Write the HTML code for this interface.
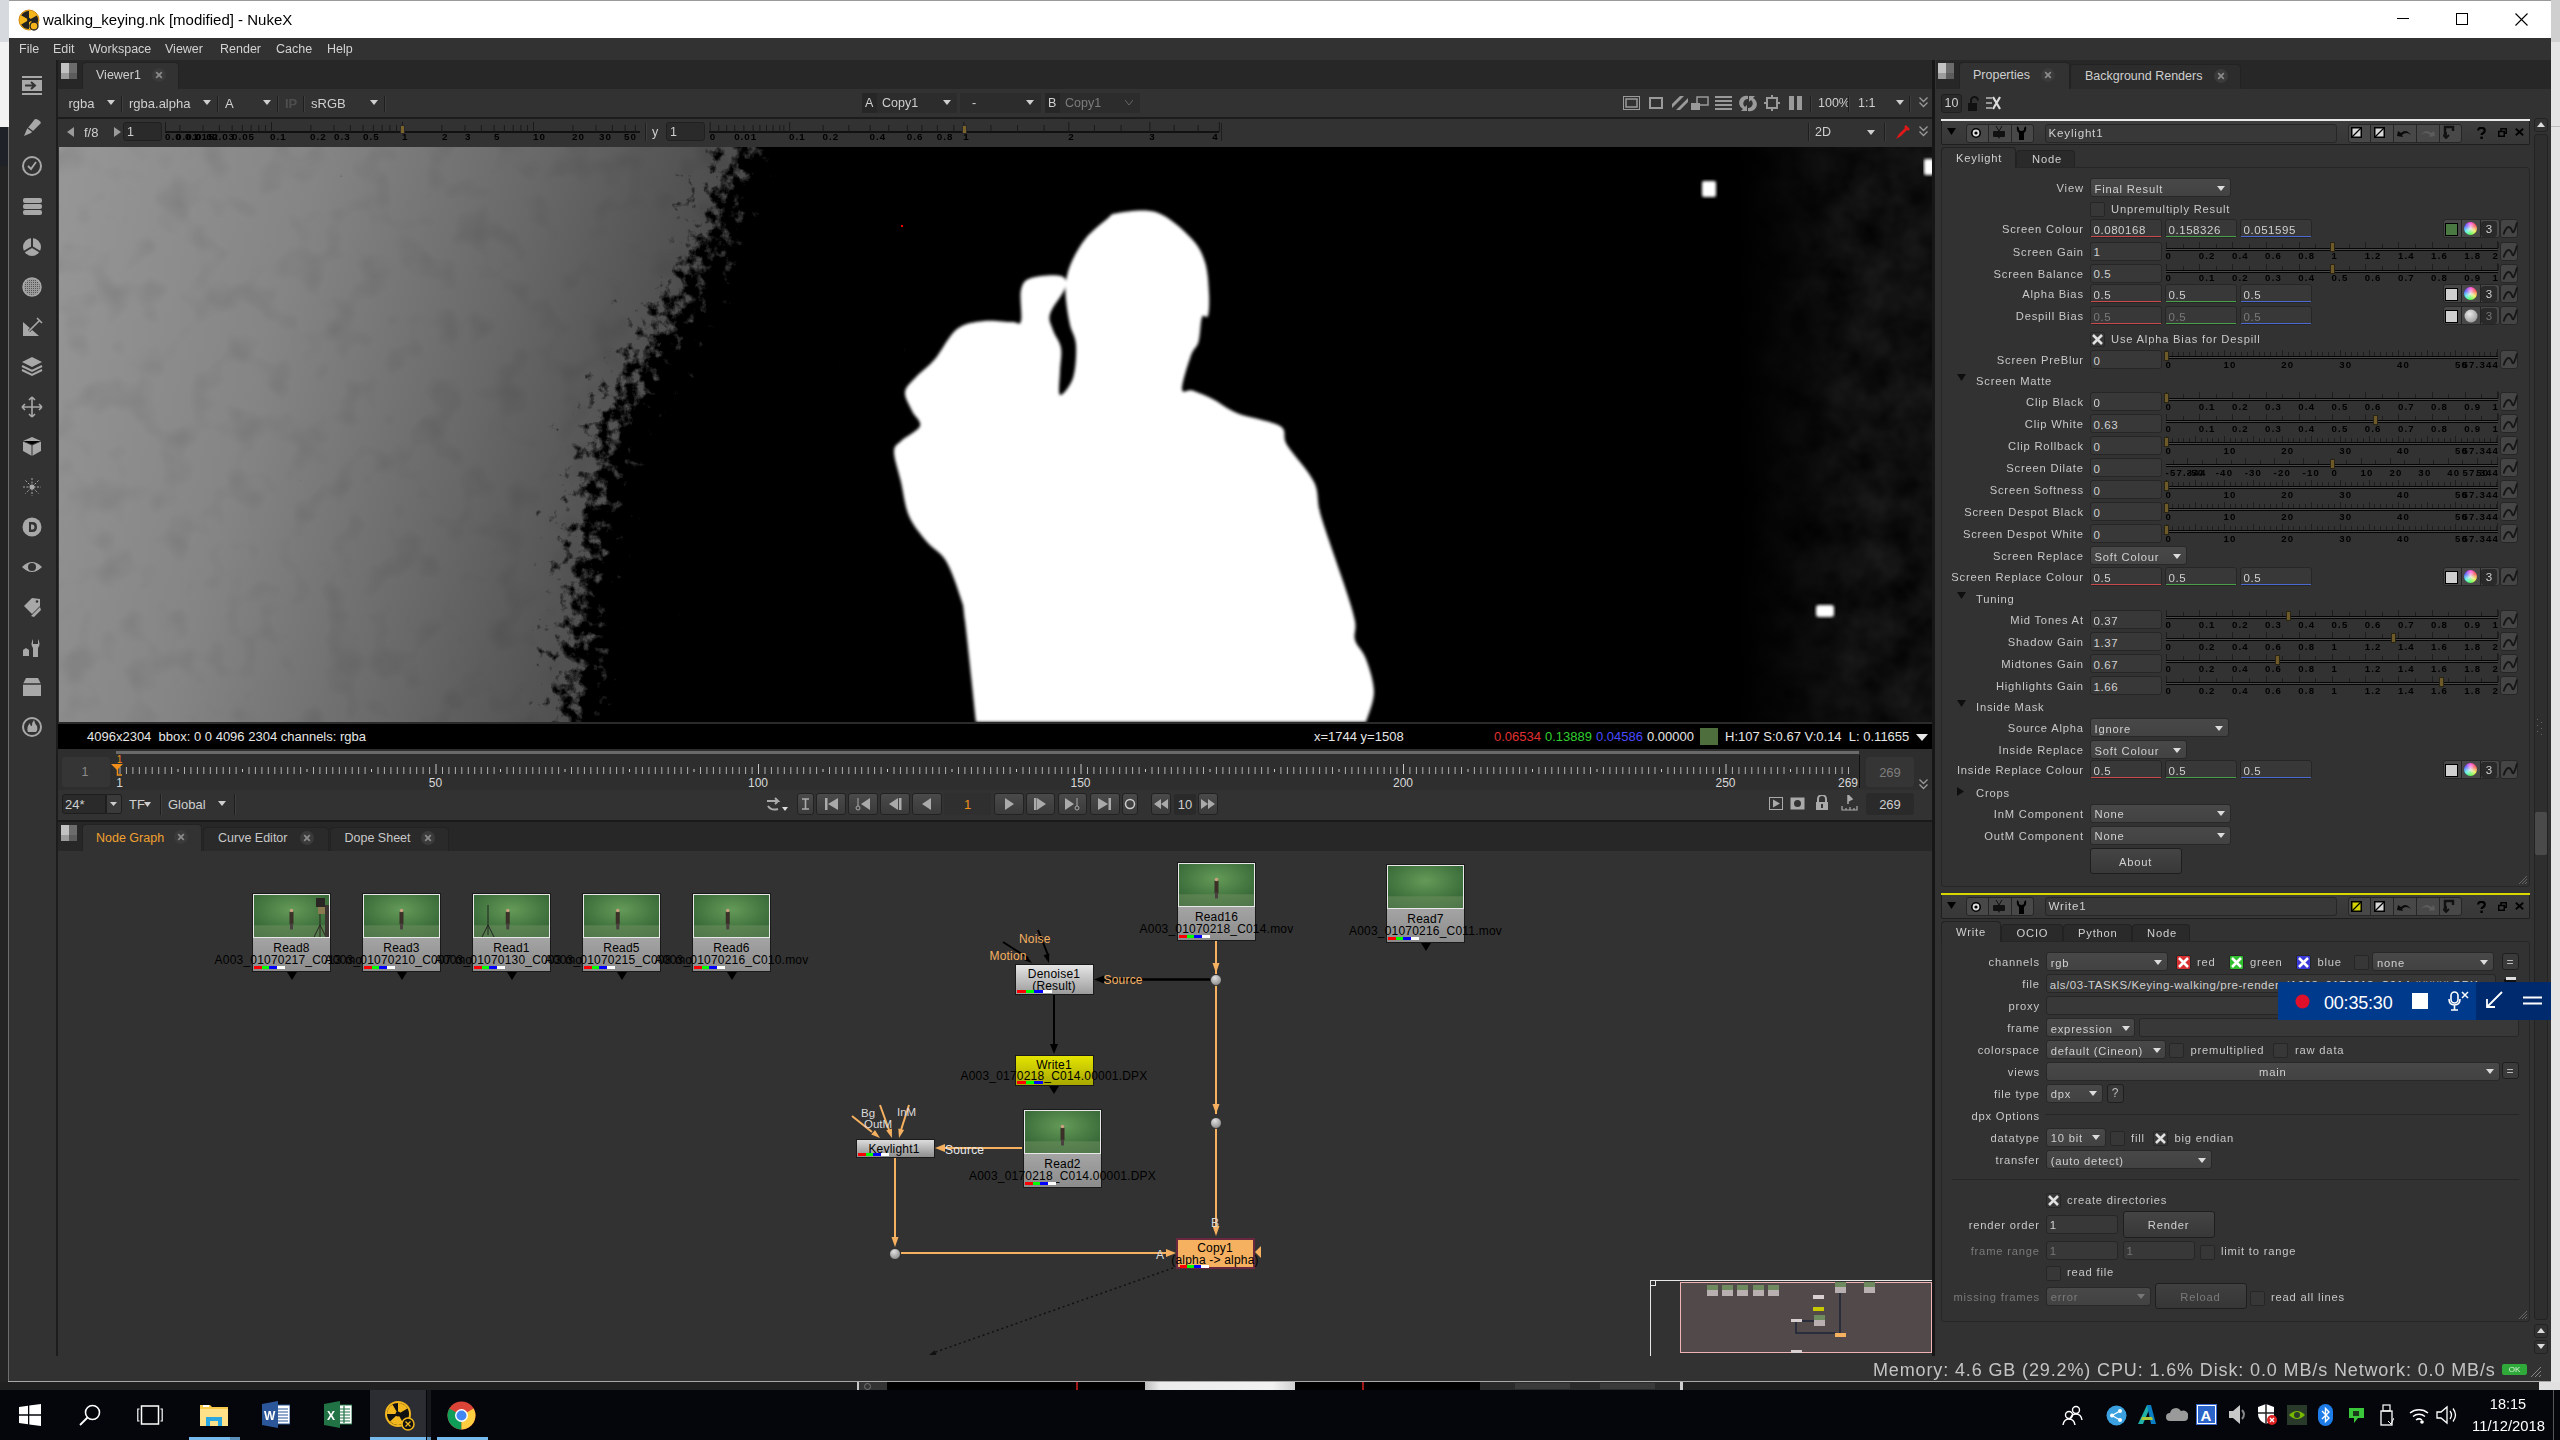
<!DOCTYPE html>
<html><head><meta charset="utf-8"><style>
html,body{margin:0;padding:0;}
body{width:2560px;height:1440px;overflow:hidden;position:relative;background:#2b2b2b;font-family:"Liberation Sans", sans-serif;}
body>div,body>svg{position:absolute;box-sizing:border-box;}
.t{white-space:pre;}
</style></head><body>
<div style="left:0px;top:0px;width:9px;height:42px;background:#d6d9de;"></div>
<div style="left:0px;top:42px;width:9px;height:85px;background:#f2f2f2;"></div>
<div style="left:0px;top:127px;width:9px;height:39px;background:#1e2228;"></div>
<div style="left:0px;top:166px;width:9px;height:1224px;background:#242424;"></div>
<div style="left:2551px;top:0px;width:9px;height:42px;background:#cfcfcf;"></div>
<div style="left:2551px;top:42px;width:9px;height:1348px;background:#e4e4e4;"></div>
<div style="left:2551px;top:126px;width:9px;height:1px;background:#bdbdbd;"></div>
<div style="left:9px;top:0px;width:2542px;height:38px;background:#ffffff;border-top:1px solid #9a9a9a;"></div>
<svg style="left:18px;top:9px;" width="22" height="22" viewBox="0 0 22 22"><circle cx="11" cy="11" r="10" fill="#f4b41a" stroke="#d08a10" stroke-width="1"/><path d="M11 11 L11 2 A9 9 0 0 0 3.2 6.5 Z" fill="#222"/><path d="M11 11 L18.8 6.5 A9 9 0 0 0 11 2 Z" fill="#f4b41a"/><path d="M11 11 L3.2 6.5 A9 9 0 0 0 3.2 15.5 Z" fill="#f4b41a"/><path d="M11 11 L3.2 15.5 A9 9 0 0 0 11 20 Z" fill="#222"/><path d="M11 11 L18.8 6.5 A9 9 0 0 1 18.8 15.5 Z" fill="#222"/><circle cx="11" cy="11" r="2" fill="#222"/><circle cx="16" cy="17" r="4" fill="#f4b41a" stroke="#222" stroke-width="1.3"/></svg>
<div class="t" style="top:12.3px;font-size:15px;line-height:15px;color:#000;left:43px;">walking_keying.nk [modified] - NukeX</div>
<div style="left:2397px;top:18px;width:12px;height:1px;background:#000;"></div>
<div style="left:2456px;top:13px;width:12px;height:12px;border:1px solid #000;"></div>
<svg style="left:2515px;top:13px;" width="13" height="13" viewBox="0 0 13 13"><path d="M0.5 0.5 L12.5 12.5 M12.5 0.5 L0.5 12.5" stroke="#000" stroke-width="1.1"/></svg>
<div style="left:9px;top:38px;width:2542px;height:22px;background:#323232;"></div>
<div class="t" style="top:43.4px;font-size:12.5px;line-height:12.5px;color:#d2d2d2;left:19px;">File</div>
<div class="t" style="top:43.4px;font-size:12.5px;line-height:12.5px;color:#d2d2d2;left:53px;">Edit</div>
<div class="t" style="top:43.4px;font-size:12.5px;line-height:12.5px;color:#d2d2d2;left:89px;">Workspace</div>
<div class="t" style="top:43.4px;font-size:12.5px;line-height:12.5px;color:#d2d2d2;left:165px;">Viewer</div>
<div class="t" style="top:43.4px;font-size:12.5px;line-height:12.5px;color:#d2d2d2;left:220px;">Render</div>
<div class="t" style="top:43.4px;font-size:12.5px;line-height:12.5px;color:#d2d2d2;left:276px;">Cache</div>
<div class="t" style="top:43.4px;font-size:12.5px;line-height:12.5px;color:#d2d2d2;left:327px;">Help</div>
<div style="left:9px;top:60px;width:2542px;height:1322px;background:#323232;"></div>
<div style="left:8px;top:127px;width:1px;height:1255px;background:#6e6e6e;"></div>
<div style="left:9px;top:60px;width:47px;height:1321px;background:#323232;"></div>
<div style="left:56px;top:60px;width:2px;height:1321px;background:#1c1c1c;"></div>
<svg style="left:21px;top:76px;" width="22" height="22" viewBox="0 0 22 22"><rect x="1" y="0" width="20" height="2" fill="#a8a8a8"/><rect x="1" y="4" width="20" height="11" fill="#a8a8a8"/><rect x="1" y="17" width="20" height="2" fill="#a8a8a8"/><path d="M4 9.5 H14 M10 6 L14 9.5 L10 13" stroke="#333" stroke-width="2" fill="none"/></svg>
<svg style="left:21px;top:116px;" width="22" height="22" viewBox="0 0 22 22"><path d="M3 20 L6 13 L14 3 Q18 3 20 7 L10 17 Z" fill="#a8a8a8"/><path d="M7 12 L15 18" stroke="#333" stroke-width="1.5"/></svg>
<svg style="left:21px;top:156px;" width="22" height="22" viewBox="0 0 22 22"><circle cx="11" cy="10" r="9" fill="none" stroke="#a8a8a8" stroke-width="2"/><path d="M7 10 L10 13 L15 6" stroke="#a8a8a8" stroke-width="1.8" fill="none"/></svg>
<svg style="left:21px;top:196px;" width="22" height="22" viewBox="0 0 22 22"><rect x="2" y="2" width="19" height="5" rx="2" fill="#a8a8a8"/><rect x="2" y="8" width="19" height="5" rx="2" fill="#a8a8a8"/><rect x="2" y="14" width="19" height="5" rx="2" fill="#a8a8a8"/></svg>
<svg style="left:21px;top:236px;" width="22" height="22" viewBox="0 0 22 22"><circle cx="11" cy="11" r="9" fill="#a8a8a8"/><path d="M11 11 V1 M11 11 L2.5 16 M11 11 L19.5 16" stroke="#333" stroke-width="2"/></svg>
<svg style="left:21px;top:276px;" width="22" height="22" viewBox="0 0 22 22"><defs><pattern id="dotp" width="2" height="2" patternUnits="userSpaceOnUse"><rect width="1" height="1" fill="#555"/></pattern></defs><circle cx="11" cy="11" r="9" fill="#9a9a9a" stroke="#a8a8a8" stroke-width="1.5"/><circle cx="11" cy="11" r="8" fill="url(#dotp)"/></svg>
<svg style="left:21px;top:316px;" width="22" height="22" viewBox="0 0 22 22"><path d="M2 6 V20 H18 Z" fill="#a8a8a8"/><path d="M8 15 L18 5" stroke="#333" stroke-width="3"/><path d="M8 15 L18 5 M16 2 L21 7" stroke="#a8a8a8" stroke-width="1.6"/></svg>
<svg style="left:21px;top:356px;" width="22" height="22" viewBox="0 0 22 22"><path d="M11 1 L21 6 L11 11 L1 6 Z" fill="#a8a8a8"/><path d="M1 10 L11 15 L21 10" stroke="#a8a8a8" stroke-width="2" fill="none"/><path d="M1 14 L11 19 L21 14" stroke="#a8a8a8" stroke-width="2" fill="none"/></svg>
<svg style="left:21px;top:396px;" width="22" height="22" viewBox="0 0 22 22"><path d="M11 1 V21 M1 11 H21 M11 1 L8 4 M11 1 L14 4 M11 21 L8 18 M11 21 L14 18 M1 11 L4 8 M1 11 L4 14 M21 11 L18 8 M21 11 L18 14" stroke="#a8a8a8" stroke-width="1.6" fill="none"/></svg>
<svg style="left:21px;top:436px;" width="22" height="22" viewBox="0 0 22 22"><path d="M11 1 L20 5 V15 L11 20 L2 15 V5 Z" fill="#a8a8a8"/><path d="M2 5 L11 9 L20 5 M11 9 V20" stroke="#333" stroke-width="1"/></svg>
<svg style="left:21px;top:476px;" width="22" height="22" viewBox="0 0 22 22"><circle cx="11" cy="11" r="2.5" fill="#a8a8a8"/><path d="M11 2 V20 M2 11 H20 M4.5 4.5 L17.5 17.5 M17.5 4.5 L4.5 17.5" stroke="#a8a8a8" stroke-width="1" stroke-dasharray="2 1.5"/></svg>
<svg style="left:21px;top:516px;" width="22" height="22" viewBox="0 0 22 22"><circle cx="11" cy="11" r="9.5" fill="#a8a8a8"/><path d="M8 6 H11.5 Q16 6 16 11 Q16 16 11.5 16 H8 Z" fill="#333"/><path d="M10 8.5 H11.5 Q13.5 8.5 13.5 11 Q13.5 13.5 11.5 13.5 H10 Z" fill="#a8a8a8"/></svg>
<svg style="left:21px;top:556px;" width="22" height="22" viewBox="0 0 22 22"><path d="M1 11 Q11 1 21 11 Q11 21 1 11 Z" fill="#a8a8a8"/><circle cx="11" cy="11" r="4" fill="#333"/></svg>
<svg style="left:21px;top:596px;" width="22" height="22" viewBox="0 0 22 22"><path d="M3 10 L11 2 L19 3 L19 10 L11 18 Z" fill="#a8a8a8"/><path d="M10 20 L19 11 L20 14 L13 21 Z" fill="#a8a8a8"/><circle cx="16" cy="5.5" r="1.3" fill="#333"/></svg>
<svg style="left:21px;top:636px;" width="22" height="22" viewBox="0 0 22 22"><path d="M2 20 V14 L5 12 L8 14 V20 Z M12 21 V12 Q9 8 12 3 V8 H17 V3 Q20 8 17 12 V21 Z" fill="#a8a8a8"/></svg>
<svg style="left:21px;top:676px;" width="22" height="22" viewBox="0 0 22 22"><path d="M2 8 L5 2 H17 L20 8 V20 H2 Z" fill="#a8a8a8"/><path d="M2 8 H20" stroke="#333" stroke-width="1.5"/></svg>
<svg style="left:21px;top:716px;" width="22" height="22" viewBox="0 0 22 22"><circle cx="11" cy="11" r="9" fill="none" stroke="#a8a8a8" stroke-width="2"/><path d="M7 16 Q5 11 9 7 Q9 10 11 10 Q11 6 13 4 Q14 8 16 10 Q17 14 15 16 Z" fill="#a8a8a8"/></svg>
<div style="left:1932px;top:60px;width:3px;height:1296px;background:#161616;"></div>
<div style="left:8px;top:1381px;width:2543px;height:1px;background:#8c8c8c;"></div>
<div style="left:0px;top:1382px;width:2551px;height:8px;background:#262626;"></div>
<div style="left:58px;top:60px;width:1874px;height:29px;background:#272727;"></div>
<div style="left:61px;top:63px;width:8px;height:10px;background:#c2c2c2;"></div>
<div style="left:69px;top:63px;width:8px;height:10px;background:#6c6c6c;"></div>
<div style="left:61px;top:73px;width:8px;height:6px;background:#9c9c9c;"></div>
<div style="left:69px;top:73px;width:8px;height:6px;background:#5c5c5c;"></div>
<div style="left:82px;top:62px;width:97px;height:27px;background:#323232;border:1px solid #222;border-bottom:none;border-radius:4px 4px 0 0;"></div>
<div class="t" style="top:69.4px;font-size:12.5px;line-height:12.5px;color:#cfcfcf;left:96px;">Viewer1</div>
<svg style="left:152px;top:68px;" width="14" height="14" viewBox="0 0 14 14"><circle cx="7" cy="7" r="7" fill="#3a3a3a"/><path d="M4.2 4.2 L9.8 9.8 M9.8 4.2 L4.2 9.8" stroke="#8a8a8a" stroke-width="1.8"/></svg>
<div style="left:58px;top:89px;width:1874px;height:28px;background:#323232;"></div>
<div style="left:58px;top:117px;width:1874px;height:2px;background:#1c1c1c;"></div>
<div class="t" style="top:96.5px;font-size:13px;line-height:13px;color:#cfcfcf;left:68.5px;">rgba</div>
<svg style="left:107px;top:100px;" width="8" height="5" viewBox="0 0 8 5"><path d="M0 0 H8 L4.0 5 Z" fill="#cfcfcf"/></svg>
<div style="left:121px;top:96px;width:1px;height:16px;background:#1e1e1e;"></div>
<div style="left:122px;top:96px;width:1px;height:16px;background:#3e3e3e;"></div>
<div class="t" style="top:96.5px;font-size:13px;line-height:13px;color:#cfcfcf;left:129px;">rgba.alpha</div>
<svg style="left:203px;top:100px;" width="8" height="5" viewBox="0 0 8 5"><path d="M0 0 H8 L4.0 5 Z" fill="#cfcfcf"/></svg>
<div style="left:217px;top:96px;width:1px;height:16px;background:#1e1e1e;"></div>
<div style="left:218px;top:96px;width:1px;height:16px;background:#3e3e3e;"></div>
<div class="t" style="top:96.5px;font-size:13px;line-height:13px;color:#cfcfcf;left:225px;">A</div>
<svg style="left:263px;top:100px;" width="8" height="5" viewBox="0 0 8 5"><path d="M0 0 H8 L4.0 5 Z" fill="#cfcfcf"/></svg>
<div style="left:277px;top:96px;width:1px;height:16px;background:#1e1e1e;"></div>
<div style="left:278px;top:96px;width:1px;height:16px;background:#3e3e3e;"></div>
<div class="t" style="top:96.5px;font-size:13px;line-height:13px;color:#4e4e4e;left:285px;font-weight:bold;">IP</div>
<div style="left:303px;top:96px;width:1px;height:16px;background:#1e1e1e;"></div>
<div style="left:304px;top:96px;width:1px;height:16px;background:#3e3e3e;"></div>
<div class="t" style="top:96.5px;font-size:13px;line-height:13px;color:#cfcfcf;left:311px;">sRGB</div>
<svg style="left:370px;top:100px;" width="8" height="5" viewBox="0 0 8 5"><path d="M0 0 H8 L4.0 5 Z" fill="#cfcfcf"/></svg>
<div style="left:384px;top:96px;width:1px;height:16px;background:#1e1e1e;"></div>
<div style="left:385px;top:96px;width:1px;height:16px;background:#3e3e3e;"></div>
<div style="left:862px;top:93px;width:15px;height:20px;background:#262626;"></div>
<div class="t" style="top:96.9px;font-size:12.5px;line-height:12.5px;color:#cfcfcf;left:865px;">A</div>
<div style="left:877px;top:93px;width:80px;height:20px;background:#2c2c2c;"></div>
<div class="t" style="top:96.9px;font-size:12.5px;line-height:12.5px;color:#cfcfcf;left:882px;">Copy1</div>
<svg style="left:943px;top:100px;" width="8" height="5" viewBox="0 0 8 5"><path d="M0 0 H8 L4.0 5 Z" fill="#cfcfcf"/></svg>
<div style="left:960px;top:93px;width:81px;height:20px;background:#2c2c2c;"></div>
<div class="t" style="top:96.9px;font-size:12.5px;line-height:12.5px;color:#cfcfcf;left:972px;">-</div>
<svg style="left:1026px;top:100px;" width="8" height="5" viewBox="0 0 8 5"><path d="M0 0 H8 L4.0 5 Z" fill="#cfcfcf"/></svg>
<div style="left:1045px;top:93px;width:15px;height:20px;background:#262626;"></div>
<div class="t" style="top:96.9px;font-size:12.5px;line-height:12.5px;color:#cfcfcf;left:1048px;">B</div>
<div style="left:1060px;top:93px;width:80px;height:20px;background:#2c2c2c;"></div>
<div class="t" style="top:96.9px;font-size:12.5px;line-height:12.5px;color:#7c7c7c;left:1065px;">Copy1</div>
<svg style="left:1125px;top:100px;" width="8" height="5" viewBox="0 0 8 5"><path d="M0 0 L4 5 L8 0" stroke="#666" fill="none"/></svg>
<svg style="left:1623px;top:96px;" width="17" height="14" viewBox="0 0 17 14"><rect x="0.5" y="0.5" width="16" height="13" fill="none" stroke="#9a9a9a"/><rect x="3" y="3" width="11" height="8" fill="none" stroke="#9a9a9a" stroke-width="1.5"/></svg>
<svg style="left:1649px;top:97px;" width="14" height="12" viewBox="0 0 14 12"><rect x="1" y="1" width="12" height="10" fill="none" stroke="#9a9a9a" stroke-width="2"/></svg>
<svg style="left:1672px;top:96px;" width="16" height="14" viewBox="0 0 16 14"><path d="M0 8 L8 0 H12 L0 12 Z M4 14 L16 2 V6 L8 14 Z" fill="#9a9a9a"/></svg>
<svg style="left:1691px;top:96px;" width="18" height="14" viewBox="0 0 18 14"><rect x="6" y="1" width="11" height="8" fill="none" stroke="#9a9a9a" stroke-width="1.5"/><rect x="0" y="7" width="9" height="7" fill="#9a9a9a"/></svg>
<svg style="left:1715px;top:96px;" width="17" height="14" viewBox="0 0 17 14"><path d="M0 1 H17 M0 5 H17 M0 9 H17 M0 13 H17" stroke="#9a9a9a" stroke-width="1.8"/></svg>
<svg style="left:1739px;top:95px;" width="18" height="17" viewBox="0 0 18 17"><path d="M9 1 A7 7 0 0 0 4 14 L2 16 H8 V10 L6 12 A4.5 4.5 0 0 1 9 4 Z M9 16 A7 7 0 0 0 14 3 L16 1 H10 V7 L12 5 A4.5 4.5 0 0 1 9 13 Z" fill="#9a9a9a"/></svg>
<svg style="left:1764px;top:95px;" width="16" height="16" viewBox="0 0 16 16"><rect x="3" y="3" width="10" height="10" fill="none" stroke="#9a9a9a" stroke-width="2"/><path d="M8 0 V3 M8 13 V16 M0 8 H3 M13 8 H16" stroke="#9a9a9a" stroke-width="2"/></svg>
<svg style="left:1789px;top:96px;" width="14" height="14" viewBox="0 0 14 14"><rect x="0" y="0" width="5" height="14" fill="#9a9a9a"/><rect x="8" y="0" width="5" height="14" fill="#9a9a9a"/></svg>
<div style="left:1810px;top:96px;width:1px;height:16px;background:#1e1e1e;"></div>
<div style="left:1811px;top:96px;width:1px;height:16px;background:#3e3e3e;"></div>
<div class="t" style="top:96.9px;font-size:12.5px;line-height:12.5px;color:#cfcfcf;left:1818px;">100%</div>
<div style="left:1848px;top:96px;width:1px;height:16px;background:#1e1e1e;"></div>
<div style="left:1849px;top:96px;width:1px;height:16px;background:#3e3e3e;"></div>
<div class="t" style="top:96.9px;font-size:12.5px;line-height:12.5px;color:#cfcfcf;left:1858px;">1:1</div>
<svg style="left:1896px;top:100px;" width="8" height="5" viewBox="0 0 8 5"><path d="M0 0 H8 L4.0 5 Z" fill="#cfcfcf"/></svg>
<div style="left:1909px;top:96px;width:1px;height:16px;background:#1e1e1e;"></div>
<div style="left:1910px;top:96px;width:1px;height:16px;background:#3e3e3e;"></div>
<svg style="left:1919px;top:97px;" width="9" height="11" viewBox="0 0 9 11"><path d="M0.5 0.5 L4.5 4.5 L8.5 0.5 M0.5 5.5 L4.5 9.5 L8.5 5.5" stroke="#9a9a9a" stroke-width="1.3" fill="none"/></svg>
<div style="left:58px;top:119px;width:1874px;height:27px;background:#323232;"></div>
<svg style="left:67px;top:127px;" width="7" height="10" viewBox="0 0 7 10"><path d="M7 0 V10 L0 5 Z" fill="#9a9a9a"/></svg>
<div class="t" style="top:125.5px;font-size:13px;line-height:13px;color:#cfcfcf;left:84px;">f/8</div>
<svg style="left:114px;top:127px;" width="7" height="10" viewBox="0 0 7 10"><path d="M0 0 V10 L7 5 Z" fill="#9a9a9a"/></svg>
<div style="left:123px;top:122px;width:39px;height:19px;background:#2a2a2a;border:1px solid #202020;border-radius:3px;"></div>
<div class="t" style="top:125.9px;font-size:12.5px;line-height:12.5px;color:#cfcfcf;left:127px;">1</div>
<svg style="left:165px;top:122px;" width="475" height="12" viewBox="0 0 475 12"><rect x="0" y="9" width="475" height="2" fill="#111"/><rect x="106.0" y="0" width="1" height="10" fill="#1a1a1a"/><rect x="237.0" y="0" width="1" height="10" fill="#1a1a1a"/><rect x="368.0" y="0" width="1" height="10" fill="#1a1a1a"/><rect x="14.4" y="3" width="1" height="7" fill="#1a1a1a"/><rect x="37.5" y="3" width="1" height="7" fill="#1a1a1a"/><rect x="53.9" y="3" width="1" height="7" fill="#1a1a1a"/><rect x="66.6" y="3" width="1" height="7" fill="#1a1a1a"/><rect x="76.9" y="3" width="1" height="7" fill="#1a1a1a"/><rect x="85.7" y="3" width="1" height="7" fill="#1a1a1a"/><rect x="93.3" y="3" width="1" height="7" fill="#1a1a1a"/><rect x="100.0" y="3" width="1" height="7" fill="#1a1a1a"/><rect x="145.4" y="3" width="1" height="7" fill="#1a1a1a"/><rect x="168.5" y="3" width="1" height="7" fill="#1a1a1a"/><rect x="184.9" y="3" width="1" height="7" fill="#1a1a1a"/><rect x="197.6" y="3" width="1" height="7" fill="#1a1a1a"/><rect x="207.9" y="3" width="1" height="7" fill="#1a1a1a"/><rect x="216.7" y="3" width="1" height="7" fill="#1a1a1a"/><rect x="224.3" y="3" width="1" height="7" fill="#1a1a1a"/><rect x="231.0" y="3" width="1" height="7" fill="#1a1a1a"/><rect x="276.4" y="3" width="1" height="7" fill="#1a1a1a"/><rect x="299.5" y="3" width="1" height="7" fill="#1a1a1a"/><rect x="315.9" y="3" width="1" height="7" fill="#1a1a1a"/><rect x="328.6" y="3" width="1" height="7" fill="#1a1a1a"/><rect x="338.9" y="3" width="1" height="7" fill="#1a1a1a"/><rect x="347.7" y="3" width="1" height="7" fill="#1a1a1a"/><rect x="355.3" y="3" width="1" height="7" fill="#1a1a1a"/><rect x="362.0" y="3" width="1" height="7" fill="#1a1a1a"/><rect x="407.4" y="3" width="1" height="7" fill="#1a1a1a"/><rect x="430.5" y="3" width="1" height="7" fill="#1a1a1a"/><rect x="446.9" y="3" width="1" height="7" fill="#1a1a1a"/><rect x="459.6" y="3" width="1" height="7" fill="#1a1a1a"/><rect x="469.9" y="3" width="1" height="7" fill="#1a1a1a"/><rect x="0" y="0" width="1" height="10" fill="#1a1a1a"/></svg>
<div class="t" style="top:132.2px;font-size:9.8px;line-height:9.8px;color:#000;left:165px;letter-spacing:1px;font-weight:bold;">0.0</div>
<div class="t" style="top:132.2px;font-size:9.8px;line-height:9.8px;color:#000;left:176px;letter-spacing:1px;font-weight:bold;">0.01</div>
<div class="t" style="top:132.2px;font-size:9.8px;line-height:9.8px;color:#000;left:185px;letter-spacing:1px;font-weight:bold;">0.015</div>
<div class="t" style="top:132.2px;font-size:9.8px;line-height:9.8px;color:#000;left:196px;letter-spacing:1px;font-weight:bold;">0.02</div>
<div class="t" style="top:132.2px;font-size:9.8px;line-height:9.8px;color:#000;left:212px;letter-spacing:1px;font-weight:bold;">0.03</div>
<div class="t" style="top:132.2px;font-size:9.8px;line-height:9.8px;color:#000;left:232px;letter-spacing:1px;font-weight:bold;">0.05</div>
<div class="t" style="top:132.2px;font-size:9.8px;line-height:9.8px;color:#000;left:270px;letter-spacing:1px;font-weight:bold;">0.1</div>
<div class="t" style="top:132.2px;font-size:9.8px;line-height:9.8px;color:#000;left:310px;letter-spacing:1px;font-weight:bold;">0.2</div>
<div class="t" style="top:132.2px;font-size:9.8px;line-height:9.8px;color:#000;left:334px;letter-spacing:1px;font-weight:bold;">0.3</div>
<div class="t" style="top:132.2px;font-size:9.8px;line-height:9.8px;color:#000;left:363px;letter-spacing:1px;font-weight:bold;">0.5</div>
<div class="t" style="top:132.2px;font-size:9.8px;line-height:9.8px;color:#000;left:402px;letter-spacing:1px;font-weight:bold;">1</div>
<div class="t" style="top:132.2px;font-size:9.8px;line-height:9.8px;color:#000;left:442px;letter-spacing:1px;font-weight:bold;">2</div>
<div class="t" style="top:132.2px;font-size:9.8px;line-height:9.8px;color:#000;left:465px;letter-spacing:1px;font-weight:bold;">3</div>
<div class="t" style="top:132.2px;font-size:9.8px;line-height:9.8px;color:#000;left:494px;letter-spacing:1px;font-weight:bold;">5</div>
<div class="t" style="top:132.2px;font-size:9.8px;line-height:9.8px;color:#000;left:533px;letter-spacing:1px;font-weight:bold;">10</div>
<div class="t" style="top:132.2px;font-size:9.8px;line-height:9.8px;color:#000;left:572px;letter-spacing:1px;font-weight:bold;">20</div>
<div class="t" style="top:132.2px;font-size:9.8px;line-height:9.8px;color:#000;left:599px;letter-spacing:1px;font-weight:bold;">30</div>
<div class="t" style="top:132.2px;font-size:9.8px;line-height:9.8px;color:#000;left:624px;letter-spacing:1px;font-weight:bold;">50</div>
<div style="left:400px;top:125px;width:5px;height:9px;background:#7a6328;border:1px solid #2a2a2a;"></div>
<div style="left:645px;top:123px;width:1px;height:18px;background:#1e1e1e;"></div>
<div style="left:646px;top:123px;width:1px;height:18px;background:#3e3e3e;"></div>
<div class="t" style="top:125.9px;font-size:12.5px;line-height:12.5px;color:#cfcfcf;left:652px;">y</div>
<div style="left:666px;top:122px;width:39px;height:19px;background:#2a2a2a;border:1px solid #202020;border-radius:3px;"></div>
<div class="t" style="top:125.9px;font-size:12.5px;line-height:12.5px;color:#cfcfcf;left:670px;">1</div>
<svg style="left:709px;top:122px;" width="512" height="12" viewBox="0 0 512 12"><rect x="0" y="9" width="510" height="2" fill="#111"/><rect x="0.7" y="0" width="1" height="10" fill="#1a1a1a"/><rect x="80.1" y="0" width="1" height="10" fill="#1a1a1a"/><rect x="254.3" y="0" width="1" height="10" fill="#1a1a1a"/><rect x="359.3" y="0" width="1" height="10" fill="#1a1a1a"/><rect x="440.3" y="0" width="1" height="10" fill="#1a1a1a"/><rect x="509.9" y="0" width="1" height="10" fill="#1a1a1a"/><rect x="9.2" y="3" width="1" height="7" fill="#1a1a1a"/><rect x="17.2" y="3" width="1" height="7" fill="#1a1a1a"/><rect x="25.1" y="3" width="1" height="7" fill="#1a1a1a"/><rect x="34.4" y="3" width="1" height="7" fill="#1a1a1a"/><rect x="43.7" y="3" width="1" height="7" fill="#1a1a1a"/><rect x="50.4" y="3" width="1" height="7" fill="#1a1a1a"/><rect x="57.0" y="3" width="1" height="7" fill="#1a1a1a"/><rect x="63.6" y="3" width="1" height="7" fill="#1a1a1a"/><rect x="70.3" y="3" width="1" height="7" fill="#1a1a1a"/><rect x="74.3" y="3" width="1" height="7" fill="#1a1a1a"/><rect x="113.6" y="3" width="1" height="7" fill="#1a1a1a"/><rect x="139.3" y="3" width="1" height="7" fill="#1a1a1a"/><rect x="160.6" y="3" width="1" height="7" fill="#1a1a1a"/><rect x="179.2" y="3" width="1" height="7" fill="#1a1a1a"/><rect x="197.8" y="3" width="1" height="7" fill="#1a1a1a"/><rect x="212.4" y="3" width="1" height="7" fill="#1a1a1a"/><rect x="227.8" y="3" width="1" height="7" fill="#1a1a1a"/><rect x="244.3" y="3" width="1" height="7" fill="#1a1a1a"/><rect x="281.4" y="3" width="1" height="7" fill="#1a1a1a"/><rect x="308.0" y="3" width="1" height="7" fill="#1a1a1a"/><rect x="334.6" y="3" width="1" height="7" fill="#1a1a1a"/><rect x="385.0" y="3" width="1" height="7" fill="#1a1a1a"/><rect x="411.6" y="3" width="1" height="7" fill="#1a1a1a"/><rect x="464.7" y="3" width="1" height="7" fill="#1a1a1a"/><rect x="488.6" y="3" width="1" height="7" fill="#1a1a1a"/></svg>
<div class="t" style="top:132.2px;font-size:9.8px;line-height:9.8px;color:#000;left:709.6945551128817px;letter-spacing:1px;font-weight:bold;">0</div>
<div class="t" style="top:132.2px;font-size:9.8px;line-height:9.8px;color:#000;left:734.1301460823373px;letter-spacing:1px;font-weight:bold;">0.01</div>
<div class="t" style="top:132.2px;font-size:9.8px;line-height:9.8px;color:#000;left:789.1102257636122px;letter-spacing:1px;font-weight:bold;">0.1</div>
<div class="t" style="top:132.2px;font-size:9.8px;line-height:9.8px;color:#000;left:822.5763612217795px;letter-spacing:1px;font-weight:bold;">0.2</div>
<div class="t" style="top:132.2px;font-size:9.8px;line-height:9.8px;color:#000;left:869.5883134130146px;letter-spacing:1px;font-weight:bold;">0.4</div>
<div class="t" style="top:132.2px;font-size:9.8px;line-height:9.8px;color:#000;left:906.7729083665338px;letter-spacing:1px;font-weight:bold;">0.6</div>
<div class="t" style="top:132.2px;font-size:9.8px;line-height:9.8px;color:#000;left:936.7861885790173px;letter-spacing:1px;font-weight:bold;">0.8</div>
<div class="t" style="top:132.2px;font-size:9.8px;line-height:9.8px;color:#000;left:963.3466135458167px;letter-spacing:1px;font-weight:bold;">1</div>
<div class="t" style="top:132.2px;font-size:9.8px;line-height:9.8px;color:#000;left:1068.2602921646746px;letter-spacing:1px;font-weight:bold;">2</div>
<div class="t" style="top:132.2px;font-size:9.8px;line-height:9.8px;color:#000;left:1149.269588313413px;letter-spacing:1px;font-weight:bold;">3</div>
<div class="t" style="top:132.2px;font-size:9.8px;line-height:9.8px;color:#000;left:1212.2177954847277px;letter-spacing:1px;font-weight:bold;">4</div>
<div style="left:962px;top:125px;width:5px;height:9px;background:#7a6328;border:1px solid #2a2a2a;"></div>
<div style="left:1221px;top:123px;width:1px;height:18px;background:#1e1e1e;"></div>
<div style="left:1808px;top:123px;width:1px;height:18px;background:#1e1e1e;"></div>
<div style="left:1809px;top:123px;width:1px;height:18px;background:#3e3e3e;"></div>
<div class="t" style="top:125.9px;font-size:12.5px;line-height:12.5px;color:#cfcfcf;left:1815px;">2D</div>
<svg style="left:1867px;top:130px;" width="8" height="5" viewBox="0 0 8 5"><path d="M0 0 H8 L4.0 5 Z" fill="#cfcfcf"/></svg>
<div style="left:1884px;top:123px;width:1px;height:18px;background:#1e1e1e;"></div>
<div style="left:1885px;top:123px;width:1px;height:18px;background:#3e3e3e;"></div>
<svg style="left:1895px;top:125px;" width="15" height="15" viewBox="0 0 15 15"><path d="M1 14 L4 9 L11 2 L13 4 L6 11 Z" fill="#e01818"/><path d="M10 1 L14 5" stroke="#e01818" stroke-width="2.5"/></svg>
<svg style="left:1919px;top:126px;" width="9" height="11" viewBox="0 0 9 11"><path d="M0.5 0.5 L4.5 4.5 L8.5 0.5 M0.5 5.5 L4.5 9.5 L8.5 5.5" stroke="#9a9a9a" stroke-width="1.3" fill="none"/></svg>
<svg style="left:59px;top:147px;" width="1873" height="575" viewBox="0 0 1873 575"><defs>
<filter id="cloud" filterUnits="userSpaceOnUse" x="-300" y="-300" width="2473" height="1175" color-interpolation-filters="sRGB">
<feGaussianBlur in="SourceGraphic" stdDeviation="45" result="G"/>
<feTurbulence type="fractalNoise" baseFrequency="0.08" numOctaves="5" seed="3" result="n"/>
<feColorMatrix in="n" type="matrix" values="1 0 0 0 0 1 0 0 0 0 1 0 0 0 0 0 0 0 0 1" result="ng"/>
<feComposite in="G" in2="ng" operator="arithmetic" k1="0" k2="4" k3="3.6" k4="-3.3" result="mask"/>
<feTurbulence type="fractalNoise" baseFrequency="0.03" numOctaves="2" seed="9" result="c"/>
<feColorMatrix in="c" type="matrix" values="0.22 0 0 0 0.89 0.22 0 0 0 0.89 0.22 0 0 0 0.89 0 0 0 0 1" result="cm"/>
<feComposite in="mask" in2="cm" operator="arithmetic" k1="1" k2="0" k3="0" k4="0"/>
</filter>
<linearGradient id="bright" gradientUnits="userSpaceOnUse" x1="0" y1="0" x2="700" y2="190">
<stop offset="0" stop-color="#979797"/><stop offset="0.35" stop-color="#858585"/><stop offset="0.65" stop-color="#686868"/><stop offset="0.85" stop-color="#525252"/><stop offset="1" stop-color="#444"/></linearGradient>
<filter id="sblur"><feGaussianBlur stdDeviation="1.4"/></filter>
<filter id="rnoise" x="0" y="0" width="100%" height="100%" color-interpolation-filters="sRGB">
<feTurbulence type="fractalNoise" baseFrequency="0.03" numOctaves="3" seed="7"/>
<feColorMatrix type="matrix" values="0.12 0 0 0 0 0.12 0 0 0 0 0.12 0 0 0 0 0 0 0 0 1"/>
</filter>
<linearGradient id="rg" x1="0" x2="1"><stop offset="0" stop-color="#000" stop-opacity="1"/><stop offset="1" stop-color="#000" stop-opacity="0"/></linearGradient>
</defs>
<rect width="1873" height="575" fill="#000"/>
<g filter="url(#cloud)"><rect x="-300" y="-300" width="2473" height="1175" fill="#000"/><polygon points="-300,-300 711,-107 681,0 673,13 653,83 621,153 579,213 546,273 529,353 521,433 516,503 509,575 489,753 -300,900" fill="#fff"/></g><rect width="1873" height="575" fill="url(#bright)" style="mix-blend-mode:multiply"/>
<rect x="1680" y="0" width="193" height="575" fill="#000" filter="url(#rnoise)"/>
<rect x="1680" y="0" width="120" height="575" fill="url(#rg)"/>
<path d="M917.0,575.0 C915.2,558.2 908.5,494.5 906.0,474.0 C903.5,453.5 905.2,462.0 902.0,452.0 C898.8,442.0 892.7,423.5 887.0,414.0 C881.3,404.5 874.2,402.5 868.0,395.0 C861.8,387.5 854.3,379.0 850.0,369.0 C845.7,359.0 844.5,345.7 842.0,335.0 C839.5,324.3 835.0,311.8 835.0,305.0 C835.0,298.2 837.7,298.3 842.0,294.0 C846.3,289.7 859.2,284.0 861.0,279.0 C862.8,274.0 855.5,269.7 853.0,264.0 C850.5,258.3 845.3,250.7 846.0,245.0 C846.7,239.3 852.0,235.5 857.0,230.0 C862.0,224.5 869.2,220.0 876.0,212.0 C882.8,204.0 889.8,188.3 898.0,182.0 C906.2,175.7 915.8,175.2 925.0,174.0 C934.2,172.8 946.8,175.0 953.0,175.0 C959.2,175.0 960.5,179.3 962.0,174.0 C963.5,168.7 960.3,150.2 962.0,143.0 C963.7,135.8 965.3,133.3 972.0,131.0 C978.7,128.7 996.3,127.3 1002.0,129.0 C1007.7,130.7 1007.8,134.7 1006.0,141.0 C1004.2,147.3 993.0,160.0 991.0,167.0 C989.0,174.0 992.2,177.3 994.0,183.0 C995.8,188.7 1000.8,194.2 1002.0,201.0 C1003.2,207.8 1001.2,216.2 1001.0,224.0 C1000.8,231.8 998.8,246.8 1001.0,248.0 C1003.2,249.2 1011.3,239.3 1014.0,231.0 C1016.7,222.7 1017.5,206.8 1017.0,198.0 C1016.5,189.2 1012.7,185.5 1011.0,178.0 C1009.3,170.5 1007.7,160.3 1007.0,153.0 C1006.3,145.7 1006.0,140.5 1007.0,134.0 C1008.0,127.5 1009.7,121.2 1013.0,114.0 C1016.3,106.8 1021.2,98.0 1027.0,91.0 C1032.8,84.0 1042.7,76.2 1048.0,72.0 C1053.3,67.8 1050.7,67.1 1059.0,66.0 C1067.3,64.9 1085.8,61.4 1098.0,65.6 C1110.2,69.8 1124.0,82.8 1132.0,91.0 C1140.0,99.2 1143.0,105.8 1146.0,115.0 C1149.0,124.2 1149.5,137.1 1150.0,146.0 C1150.5,154.9 1150.2,164.7 1149.0,168.7 C1147.8,172.7 1144.6,165.9 1143.0,170.2 C1141.4,174.5 1141.4,188.3 1139.6,194.7 C1137.8,201.1 1134.8,200.5 1132.0,208.4 C1129.2,216.3 1122.8,236.1 1123.0,242.0 C1123.2,247.9 1128.2,241.8 1133.5,243.6 C1138.8,245.4 1147.4,248.9 1155.0,252.7 C1162.6,256.5 1168.0,262.1 1179.0,266.5 C1190.0,270.9 1212.8,273.8 1221.0,279.0 C1229.2,284.2 1222.3,288.7 1228.0,298.0 C1233.7,307.3 1249.3,323.2 1255.0,335.0 C1260.7,346.8 1257.0,352.0 1262.0,369.0 C1267.0,386.0 1279.3,419.5 1285.0,437.0 C1290.7,454.5 1294.2,464.7 1296.0,474.0 C1297.8,483.3 1294.2,486.7 1296.0,493.0 C1297.8,499.3 1303.8,503.3 1307.0,512.0 C1310.2,520.7 1315.0,534.5 1315.0,545.0 C1315.0,555.5 1308.3,570.0 1307.0,575.0 Z" fill="#fff" filter="url(#sblur)"/>
<rect x="1643" y="34" width="14" height="16" rx="2" fill="#fff" filter="url(#sblur)"/>
<rect x="1757" y="458" width="18" height="12" rx="3" fill="#fff" filter="url(#sblur)"/>
<rect x="1865" y="12" width="10" height="16" rx="2" fill="#fff" filter="url(#sblur)"/>
<rect x="842" y="78" width="2" height="2" fill="#e00"/>
</svg>
<div style="left:58px;top:722px;width:1874px;height:2px;background:#2a2a2a;"></div>
<div style="left:58px;top:724px;width:1874px;height:25px;background:#000;"></div>
<div class="t" style="top:730.0px;font-size:13px;line-height:13px;color:#e6e6e6;left:87px;">4096x2304  bbox: 0 0 4096 2304 channels: rgba</div>
<div class="t" style="top:730.0px;font-size:13px;line-height:13px;color:#e6e6e6;left:1314px;">x=1744 y=1508</div>
<div class="t" style="top:730.0px;font-size:13px;line-height:13px;color:#e03030;left:1494px;">0.06534</div>
<div class="t" style="top:730.0px;font-size:13px;line-height:13px;color:#30d030;left:1545px;">0.13889</div>
<div class="t" style="top:730.0px;font-size:13px;line-height:13px;color:#4a4aff;left:1596px;">0.04586</div>
<div class="t" style="top:730.0px;font-size:13px;line-height:13px;color:#e6e6e6;left:1647px;">0.00000</div>
<div style="left:1700px;top:728px;width:18px;height:17px;background:#4e6e3e;"></div>
<div class="t" style="top:730.0px;font-size:13px;line-height:13px;color:#e6e6e6;left:1725px;width:185px;overflow:hidden;">H:107 S:0.67 V:0.14  L: 0.11655</div>
<svg style="left:1916px;top:734px;" width="12" height="7" viewBox="0 0 12 7"><path d="M0 0 H12 L6 7 Z" fill="#e6e6e6"/></svg>
<div style="left:58px;top:749px;width:1874px;height:41px;background:#2e2e2e;"></div>
<div style="left:116px;top:751px;width:1743px;height:3px;background:#6a6a6a;"></div>
<div style="left:62px;top:757px;width:48px;height:30px;background:#353535;border-radius:3px;"></div>
<div class="t" style="top:766.4px;font-size:12.5px;line-height:12.5px;color:#8a8a8a;left:65.0px;width:40px;text-align:center;">1</div>
<svg style="left:116px;top:764px;" width="1745" height="11" viewBox="0 0 1745 11"><rect x="3.5" y="3" width="1" height="7" fill="#b0b0b0"/><rect x="9.9" y="3" width="1" height="7" fill="#b0b0b0"/><rect x="16.4" y="3" width="1" height="7" fill="#b0b0b0"/><rect x="22.8" y="3" width="1" height="7" fill="#b0b0b0"/><rect x="29.3" y="3" width="1" height="7" fill="#b0b0b0"/><rect x="35.7" y="3" width="1" height="7" fill="#b0b0b0"/><rect x="42.2" y="3" width="1" height="7" fill="#b0b0b0"/><rect x="48.6" y="3" width="1" height="7" fill="#b0b0b0"/><rect x="55.1" y="3" width="1" height="7" fill="#b0b0b0"/><rect x="61.5" y="5" width="1" height="3" fill="#c8c8c8"/><rect x="68.0" y="3" width="1" height="7" fill="#b0b0b0"/><rect x="74.4" y="3" width="1" height="7" fill="#b0b0b0"/><rect x="80.9" y="3" width="1" height="7" fill="#b0b0b0"/><rect x="87.3" y="3" width="1" height="7" fill="#b0b0b0"/><rect x="93.8" y="3" width="1" height="7" fill="#b0b0b0"/><rect x="100.2" y="3" width="1" height="7" fill="#b0b0b0"/><rect x="106.7" y="3" width="1" height="7" fill="#b0b0b0"/><rect x="113.1" y="3" width="1" height="7" fill="#b0b0b0"/><rect x="119.6" y="3" width="1" height="7" fill="#b0b0b0"/><rect x="126.0" y="5" width="1" height="3" fill="#c8c8c8"/><rect x="132.5" y="3" width="1" height="7" fill="#b0b0b0"/><rect x="138.9" y="3" width="1" height="7" fill="#b0b0b0"/><rect x="145.4" y="3" width="1" height="7" fill="#b0b0b0"/><rect x="151.8" y="3" width="1" height="7" fill="#b0b0b0"/><rect x="158.3" y="3" width="1" height="7" fill="#b0b0b0"/><rect x="164.7" y="3" width="1" height="7" fill="#b0b0b0"/><rect x="171.2" y="3" width="1" height="7" fill="#b0b0b0"/><rect x="177.6" y="3" width="1" height="7" fill="#b0b0b0"/><rect x="184.1" y="3" width="1" height="7" fill="#b0b0b0"/><rect x="190.5" y="5" width="1" height="3" fill="#c8c8c8"/><rect x="197.0" y="3" width="1" height="7" fill="#b0b0b0"/><rect x="203.4" y="3" width="1" height="7" fill="#b0b0b0"/><rect x="209.9" y="3" width="1" height="7" fill="#b0b0b0"/><rect x="216.3" y="3" width="1" height="7" fill="#b0b0b0"/><rect x="222.8" y="3" width="1" height="7" fill="#b0b0b0"/><rect x="229.2" y="3" width="1" height="7" fill="#b0b0b0"/><rect x="235.7" y="3" width="1" height="7" fill="#b0b0b0"/><rect x="242.1" y="3" width="1" height="7" fill="#b0b0b0"/><rect x="248.6" y="3" width="1" height="7" fill="#b0b0b0"/><rect x="255.0" y="5" width="1" height="3" fill="#c8c8c8"/><rect x="261.5" y="3" width="1" height="7" fill="#b0b0b0"/><rect x="267.9" y="3" width="1" height="7" fill="#b0b0b0"/><rect x="274.4" y="3" width="1" height="7" fill="#b0b0b0"/><rect x="280.8" y="3" width="1" height="7" fill="#b0b0b0"/><rect x="287.3" y="3" width="1" height="7" fill="#b0b0b0"/><rect x="293.7" y="3" width="1" height="7" fill="#b0b0b0"/><rect x="300.2" y="3" width="1" height="7" fill="#b0b0b0"/><rect x="306.6" y="3" width="1" height="7" fill="#b0b0b0"/><rect x="313.1" y="3" width="1" height="7" fill="#b0b0b0"/><rect x="319.5" y="0" width="1" height="10" fill="#c8c8c8"/><rect x="326.0" y="3" width="1" height="7" fill="#b0b0b0"/><rect x="332.4" y="3" width="1" height="7" fill="#b0b0b0"/><rect x="338.9" y="3" width="1" height="7" fill="#b0b0b0"/><rect x="345.3" y="3" width="1" height="7" fill="#b0b0b0"/><rect x="351.8" y="3" width="1" height="7" fill="#b0b0b0"/><rect x="358.2" y="3" width="1" height="7" fill="#b0b0b0"/><rect x="364.7" y="3" width="1" height="7" fill="#b0b0b0"/><rect x="371.1" y="3" width="1" height="7" fill="#b0b0b0"/><rect x="377.6" y="3" width="1" height="7" fill="#b0b0b0"/><rect x="384.0" y="5" width="1" height="3" fill="#c8c8c8"/><rect x="390.5" y="3" width="1" height="7" fill="#b0b0b0"/><rect x="396.9" y="3" width="1" height="7" fill="#b0b0b0"/><rect x="403.4" y="3" width="1" height="7" fill="#b0b0b0"/><rect x="409.8" y="3" width="1" height="7" fill="#b0b0b0"/><rect x="416.3" y="3" width="1" height="7" fill="#b0b0b0"/><rect x="422.7" y="3" width="1" height="7" fill="#b0b0b0"/><rect x="429.2" y="3" width="1" height="7" fill="#b0b0b0"/><rect x="435.6" y="3" width="1" height="7" fill="#b0b0b0"/><rect x="442.1" y="3" width="1" height="7" fill="#b0b0b0"/><rect x="448.5" y="5" width="1" height="3" fill="#c8c8c8"/><rect x="455.0" y="3" width="1" height="7" fill="#b0b0b0"/><rect x="461.4" y="3" width="1" height="7" fill="#b0b0b0"/><rect x="467.9" y="3" width="1" height="7" fill="#b0b0b0"/><rect x="474.3" y="3" width="1" height="7" fill="#b0b0b0"/><rect x="480.8" y="3" width="1" height="7" fill="#b0b0b0"/><rect x="487.2" y="3" width="1" height="7" fill="#b0b0b0"/><rect x="493.7" y="3" width="1" height="7" fill="#b0b0b0"/><rect x="500.1" y="3" width="1" height="7" fill="#b0b0b0"/><rect x="506.6" y="3" width="1" height="7" fill="#b0b0b0"/><rect x="513.0" y="5" width="1" height="3" fill="#c8c8c8"/><rect x="519.5" y="3" width="1" height="7" fill="#b0b0b0"/><rect x="525.9" y="3" width="1" height="7" fill="#b0b0b0"/><rect x="532.4" y="3" width="1" height="7" fill="#b0b0b0"/><rect x="538.8" y="3" width="1" height="7" fill="#b0b0b0"/><rect x="545.3" y="3" width="1" height="7" fill="#b0b0b0"/><rect x="551.7" y="3" width="1" height="7" fill="#b0b0b0"/><rect x="558.2" y="3" width="1" height="7" fill="#b0b0b0"/><rect x="564.6" y="3" width="1" height="7" fill="#b0b0b0"/><rect x="571.1" y="3" width="1" height="7" fill="#b0b0b0"/><rect x="577.5" y="5" width="1" height="3" fill="#c8c8c8"/><rect x="584.0" y="3" width="1" height="7" fill="#b0b0b0"/><rect x="590.4" y="3" width="1" height="7" fill="#b0b0b0"/><rect x="596.9" y="3" width="1" height="7" fill="#b0b0b0"/><rect x="603.3" y="3" width="1" height="7" fill="#b0b0b0"/><rect x="609.8" y="3" width="1" height="7" fill="#b0b0b0"/><rect x="616.2" y="3" width="1" height="7" fill="#b0b0b0"/><rect x="622.7" y="3" width="1" height="7" fill="#b0b0b0"/><rect x="629.1" y="3" width="1" height="7" fill="#b0b0b0"/><rect x="635.6" y="3" width="1" height="7" fill="#b0b0b0"/><rect x="642.0" y="0" width="1" height="10" fill="#c8c8c8"/><rect x="648.5" y="3" width="1" height="7" fill="#b0b0b0"/><rect x="654.9" y="3" width="1" height="7" fill="#b0b0b0"/><rect x="661.4" y="3" width="1" height="7" fill="#b0b0b0"/><rect x="667.8" y="3" width="1" height="7" fill="#b0b0b0"/><rect x="674.3" y="3" width="1" height="7" fill="#b0b0b0"/><rect x="680.7" y="3" width="1" height="7" fill="#b0b0b0"/><rect x="687.2" y="3" width="1" height="7" fill="#b0b0b0"/><rect x="693.6" y="3" width="1" height="7" fill="#b0b0b0"/><rect x="700.1" y="3" width="1" height="7" fill="#b0b0b0"/><rect x="706.5" y="5" width="1" height="3" fill="#c8c8c8"/><rect x="713.0" y="3" width="1" height="7" fill="#b0b0b0"/><rect x="719.4" y="3" width="1" height="7" fill="#b0b0b0"/><rect x="725.9" y="3" width="1" height="7" fill="#b0b0b0"/><rect x="732.3" y="3" width="1" height="7" fill="#b0b0b0"/><rect x="738.8" y="3" width="1" height="7" fill="#b0b0b0"/><rect x="745.2" y="3" width="1" height="7" fill="#b0b0b0"/><rect x="751.7" y="3" width="1" height="7" fill="#b0b0b0"/><rect x="758.1" y="3" width="1" height="7" fill="#b0b0b0"/><rect x="764.6" y="3" width="1" height="7" fill="#b0b0b0"/><rect x="771.0" y="5" width="1" height="3" fill="#c8c8c8"/><rect x="777.5" y="3" width="1" height="7" fill="#b0b0b0"/><rect x="783.9" y="3" width="1" height="7" fill="#b0b0b0"/><rect x="790.4" y="3" width="1" height="7" fill="#b0b0b0"/><rect x="796.8" y="3" width="1" height="7" fill="#b0b0b0"/><rect x="803.3" y="3" width="1" height="7" fill="#b0b0b0"/><rect x="809.7" y="3" width="1" height="7" fill="#b0b0b0"/><rect x="816.2" y="3" width="1" height="7" fill="#b0b0b0"/><rect x="822.6" y="3" width="1" height="7" fill="#b0b0b0"/><rect x="829.1" y="3" width="1" height="7" fill="#b0b0b0"/><rect x="835.5" y="5" width="1" height="3" fill="#c8c8c8"/><rect x="842.0" y="3" width="1" height="7" fill="#b0b0b0"/><rect x="848.4" y="3" width="1" height="7" fill="#b0b0b0"/><rect x="854.9" y="3" width="1" height="7" fill="#b0b0b0"/><rect x="861.3" y="3" width="1" height="7" fill="#b0b0b0"/><rect x="867.8" y="3" width="1" height="7" fill="#b0b0b0"/><rect x="874.2" y="3" width="1" height="7" fill="#b0b0b0"/><rect x="880.7" y="3" width="1" height="7" fill="#b0b0b0"/><rect x="887.1" y="3" width="1" height="7" fill="#b0b0b0"/><rect x="893.6" y="3" width="1" height="7" fill="#b0b0b0"/><rect x="900.0" y="5" width="1" height="3" fill="#c8c8c8"/><rect x="906.5" y="3" width="1" height="7" fill="#b0b0b0"/><rect x="912.9" y="3" width="1" height="7" fill="#b0b0b0"/><rect x="919.4" y="3" width="1" height="7" fill="#b0b0b0"/><rect x="925.8" y="3" width="1" height="7" fill="#b0b0b0"/><rect x="932.3" y="3" width="1" height="7" fill="#b0b0b0"/><rect x="938.7" y="3" width="1" height="7" fill="#b0b0b0"/><rect x="945.2" y="3" width="1" height="7" fill="#b0b0b0"/><rect x="951.6" y="3" width="1" height="7" fill="#b0b0b0"/><rect x="958.1" y="3" width="1" height="7" fill="#b0b0b0"/><rect x="964.5" y="0" width="1" height="10" fill="#c8c8c8"/><rect x="971.0" y="3" width="1" height="7" fill="#b0b0b0"/><rect x="977.4" y="3" width="1" height="7" fill="#b0b0b0"/><rect x="983.9" y="3" width="1" height="7" fill="#b0b0b0"/><rect x="990.3" y="3" width="1" height="7" fill="#b0b0b0"/><rect x="996.8" y="3" width="1" height="7" fill="#b0b0b0"/><rect x="1003.2" y="3" width="1" height="7" fill="#b0b0b0"/><rect x="1009.7" y="3" width="1" height="7" fill="#b0b0b0"/><rect x="1016.1" y="3" width="1" height="7" fill="#b0b0b0"/><rect x="1022.6" y="3" width="1" height="7" fill="#b0b0b0"/><rect x="1029.0" y="5" width="1" height="3" fill="#c8c8c8"/><rect x="1035.5" y="3" width="1" height="7" fill="#b0b0b0"/><rect x="1041.9" y="3" width="1" height="7" fill="#b0b0b0"/><rect x="1048.4" y="3" width="1" height="7" fill="#b0b0b0"/><rect x="1054.8" y="3" width="1" height="7" fill="#b0b0b0"/><rect x="1061.3" y="3" width="1" height="7" fill="#b0b0b0"/><rect x="1067.7" y="3" width="1" height="7" fill="#b0b0b0"/><rect x="1074.2" y="3" width="1" height="7" fill="#b0b0b0"/><rect x="1080.6" y="3" width="1" height="7" fill="#b0b0b0"/><rect x="1087.0" y="3" width="1" height="7" fill="#b0b0b0"/><rect x="1093.5" y="5" width="1" height="3" fill="#c8c8c8"/><rect x="1099.9" y="3" width="1" height="7" fill="#b0b0b0"/><rect x="1106.4" y="3" width="1" height="7" fill="#b0b0b0"/><rect x="1112.8" y="3" width="1" height="7" fill="#b0b0b0"/><rect x="1119.3" y="3" width="1" height="7" fill="#b0b0b0"/><rect x="1125.7" y="3" width="1" height="7" fill="#b0b0b0"/><rect x="1132.2" y="3" width="1" height="7" fill="#b0b0b0"/><rect x="1138.6" y="3" width="1" height="7" fill="#b0b0b0"/><rect x="1145.1" y="3" width="1" height="7" fill="#b0b0b0"/><rect x="1151.5" y="3" width="1" height="7" fill="#b0b0b0"/><rect x="1158.0" y="5" width="1" height="3" fill="#c8c8c8"/><rect x="1164.4" y="3" width="1" height="7" fill="#b0b0b0"/><rect x="1170.9" y="3" width="1" height="7" fill="#b0b0b0"/><rect x="1177.3" y="3" width="1" height="7" fill="#b0b0b0"/><rect x="1183.8" y="3" width="1" height="7" fill="#b0b0b0"/><rect x="1190.2" y="3" width="1" height="7" fill="#b0b0b0"/><rect x="1196.7" y="3" width="1" height="7" fill="#b0b0b0"/><rect x="1203.1" y="3" width="1" height="7" fill="#b0b0b0"/><rect x="1209.6" y="3" width="1" height="7" fill="#b0b0b0"/><rect x="1216.0" y="3" width="1" height="7" fill="#b0b0b0"/><rect x="1222.5" y="5" width="1" height="3" fill="#c8c8c8"/><rect x="1228.9" y="3" width="1" height="7" fill="#b0b0b0"/><rect x="1235.4" y="3" width="1" height="7" fill="#b0b0b0"/><rect x="1241.8" y="3" width="1" height="7" fill="#b0b0b0"/><rect x="1248.3" y="3" width="1" height="7" fill="#b0b0b0"/><rect x="1254.7" y="3" width="1" height="7" fill="#b0b0b0"/><rect x="1261.2" y="3" width="1" height="7" fill="#b0b0b0"/><rect x="1267.6" y="3" width="1" height="7" fill="#b0b0b0"/><rect x="1274.1" y="3" width="1" height="7" fill="#b0b0b0"/><rect x="1280.5" y="3" width="1" height="7" fill="#b0b0b0"/><rect x="1287.0" y="0" width="1" height="10" fill="#c8c8c8"/><rect x="1293.4" y="3" width="1" height="7" fill="#b0b0b0"/><rect x="1299.9" y="3" width="1" height="7" fill="#b0b0b0"/><rect x="1306.3" y="3" width="1" height="7" fill="#b0b0b0"/><rect x="1312.8" y="3" width="1" height="7" fill="#b0b0b0"/><rect x="1319.2" y="3" width="1" height="7" fill="#b0b0b0"/><rect x="1325.7" y="3" width="1" height="7" fill="#b0b0b0"/><rect x="1332.1" y="3" width="1" height="7" fill="#b0b0b0"/><rect x="1338.6" y="3" width="1" height="7" fill="#b0b0b0"/><rect x="1345.0" y="3" width="1" height="7" fill="#b0b0b0"/><rect x="1351.5" y="5" width="1" height="3" fill="#c8c8c8"/><rect x="1357.9" y="3" width="1" height="7" fill="#b0b0b0"/><rect x="1364.4" y="3" width="1" height="7" fill="#b0b0b0"/><rect x="1370.8" y="3" width="1" height="7" fill="#b0b0b0"/><rect x="1377.3" y="3" width="1" height="7" fill="#b0b0b0"/><rect x="1383.7" y="3" width="1" height="7" fill="#b0b0b0"/><rect x="1390.2" y="3" width="1" height="7" fill="#b0b0b0"/><rect x="1396.6" y="3" width="1" height="7" fill="#b0b0b0"/><rect x="1403.1" y="3" width="1" height="7" fill="#b0b0b0"/><rect x="1409.5" y="3" width="1" height="7" fill="#b0b0b0"/><rect x="1416.0" y="5" width="1" height="3" fill="#c8c8c8"/><rect x="1422.4" y="3" width="1" height="7" fill="#b0b0b0"/><rect x="1428.9" y="3" width="1" height="7" fill="#b0b0b0"/><rect x="1435.3" y="3" width="1" height="7" fill="#b0b0b0"/><rect x="1441.8" y="3" width="1" height="7" fill="#b0b0b0"/><rect x="1448.2" y="3" width="1" height="7" fill="#b0b0b0"/><rect x="1454.7" y="3" width="1" height="7" fill="#b0b0b0"/><rect x="1461.1" y="3" width="1" height="7" fill="#b0b0b0"/><rect x="1467.6" y="3" width="1" height="7" fill="#b0b0b0"/><rect x="1474.0" y="3" width="1" height="7" fill="#b0b0b0"/><rect x="1480.5" y="5" width="1" height="3" fill="#c8c8c8"/><rect x="1486.9" y="3" width="1" height="7" fill="#b0b0b0"/><rect x="1493.4" y="3" width="1" height="7" fill="#b0b0b0"/><rect x="1499.8" y="3" width="1" height="7" fill="#b0b0b0"/><rect x="1506.3" y="3" width="1" height="7" fill="#b0b0b0"/><rect x="1512.7" y="3" width="1" height="7" fill="#b0b0b0"/><rect x="1519.2" y="3" width="1" height="7" fill="#b0b0b0"/><rect x="1525.6" y="3" width="1" height="7" fill="#b0b0b0"/><rect x="1532.1" y="3" width="1" height="7" fill="#b0b0b0"/><rect x="1538.5" y="3" width="1" height="7" fill="#b0b0b0"/><rect x="1545.0" y="5" width="1" height="3" fill="#c8c8c8"/><rect x="1551.4" y="3" width="1" height="7" fill="#b0b0b0"/><rect x="1557.9" y="3" width="1" height="7" fill="#b0b0b0"/><rect x="1564.3" y="3" width="1" height="7" fill="#b0b0b0"/><rect x="1570.8" y="3" width="1" height="7" fill="#b0b0b0"/><rect x="1577.2" y="3" width="1" height="7" fill="#b0b0b0"/><rect x="1583.7" y="3" width="1" height="7" fill="#b0b0b0"/><rect x="1590.1" y="3" width="1" height="7" fill="#b0b0b0"/><rect x="1596.6" y="3" width="1" height="7" fill="#b0b0b0"/><rect x="1603.0" y="3" width="1" height="7" fill="#b0b0b0"/><rect x="1609.5" y="0" width="1" height="10" fill="#c8c8c8"/><rect x="1615.9" y="3" width="1" height="7" fill="#b0b0b0"/><rect x="1622.4" y="3" width="1" height="7" fill="#b0b0b0"/><rect x="1628.8" y="3" width="1" height="7" fill="#b0b0b0"/><rect x="1635.3" y="3" width="1" height="7" fill="#b0b0b0"/><rect x="1641.7" y="3" width="1" height="7" fill="#b0b0b0"/><rect x="1648.2" y="3" width="1" height="7" fill="#b0b0b0"/><rect x="1654.6" y="3" width="1" height="7" fill="#b0b0b0"/><rect x="1661.1" y="3" width="1" height="7" fill="#b0b0b0"/><rect x="1667.5" y="3" width="1" height="7" fill="#b0b0b0"/><rect x="1674.0" y="5" width="1" height="3" fill="#c8c8c8"/><rect x="1680.4" y="3" width="1" height="7" fill="#b0b0b0"/><rect x="1686.9" y="3" width="1" height="7" fill="#b0b0b0"/><rect x="1693.3" y="3" width="1" height="7" fill="#b0b0b0"/><rect x="1699.8" y="3" width="1" height="7" fill="#b0b0b0"/><rect x="1706.2" y="3" width="1" height="7" fill="#b0b0b0"/><rect x="1712.7" y="3" width="1" height="7" fill="#b0b0b0"/><rect x="1719.1" y="3" width="1" height="7" fill="#b0b0b0"/><rect x="1725.6" y="3" width="1" height="7" fill="#b0b0b0"/><rect x="1732.0" y="3" width="1" height="7" fill="#b0b0b0"/></svg>
<div class="t" style="top:776.8px;font-size:12px;line-height:12px;color:#d8d8d8;left:99.5px;width:40px;text-align:center;">1</div>
<div class="t" style="top:776.8px;font-size:12px;line-height:12px;color:#d8d8d8;left:415.5353px;width:40px;text-align:center;">50</div>
<div class="t" style="top:776.8px;font-size:12px;line-height:12px;color:#d8d8d8;left:738.0203px;width:40px;text-align:center;">100</div>
<div class="t" style="top:776.8px;font-size:12px;line-height:12px;color:#d8d8d8;left:1060.5053px;width:40px;text-align:center;">150</div>
<div class="t" style="top:776.8px;font-size:12px;line-height:12px;color:#d8d8d8;left:1382.9903px;width:40px;text-align:center;">200</div>
<div class="t" style="top:776.8px;font-size:12px;line-height:12px;color:#d8d8d8;left:1705.4753px;width:40px;text-align:center;">250</div>
<div class="t" style="top:776.8px;font-size:12px;line-height:12px;color:#d8d8d8;left:1828.0196px;width:40px;text-align:center;">269</div>
<div style="left:1859px;top:755px;width:1px;height:33px;background:#111;"></div>
<svg style="left:111px;top:759px;" width="13" height="17" viewBox="0 0 13 17"><path d="M0 5 H12 L6 11 Z" fill="#f0901a"/><path d="M6.5 9 V16 H11" stroke="#f0901a" stroke-width="1.5" fill="none"/></svg>
<div class="t" style="top:754.5px;font-size:10px;line-height:10px;color:#f0901a;left:109.5px;width:20px;text-align:center;">1</div>
<div style="left:1866px;top:757px;width:48px;height:30px;background:#353535;border-radius:3px;"></div>
<div class="t" style="top:766.0px;font-size:13px;line-height:13px;color:#7e7e7e;left:1866.0px;width:48px;text-align:center;">269</div>
<svg style="left:1919px;top:779px;" width="9" height="11" viewBox="0 0 9 11"><path d="M0.5 0.5 L4.5 4.5 L8.5 0.5 M0.5 5.5 L4.5 9.5 L8.5 5.5" stroke="#9a9a9a" stroke-width="1.3" fill="none"/></svg>
<div style="left:58px;top:790px;width:1874px;height:31px;background:#323232;"></div>
<div style="left:62px;top:794px;width:44px;height:20px;background:#2a2a2a;border:1px solid #1e1e1e;border-radius:3px 0 0 3px;"></div>
<div style="left:106px;top:794px;width:16px;height:20px;background:#3a3a3a;border:1px solid #1e1e1e;border-radius:0 3px 3px 0;"></div>
<svg style="left:110px;top:802px;" width="7" height="4" viewBox="0 0 7 4"><path d="M0 0 H7 L3.5 4 Z" fill="#cfcfcf"/></svg>
<div class="t" style="top:798.0px;font-size:13px;line-height:13px;color:#cfcfcf;left:65px;">24*</div>
<div class="t" style="top:798.0px;font-size:13px;line-height:13px;color:#cfcfcf;left:129px;">TF</div>
<svg style="left:144px;top:802px;" width="7" height="5" viewBox="0 0 7 5"><path d="M0 0 H7 L3.5 5 Z" fill="#cfcfcf"/></svg>
<div style="left:160px;top:794px;width:1px;height:21px;background:#1e1e1e;"></div>
<div style="left:161px;top:794px;width:1px;height:21px;background:#3e3e3e;"></div>
<div class="t" style="top:798.0px;font-size:13px;line-height:13px;color:#cfcfcf;left:168px;">Global</div>
<svg style="left:218px;top:801px;" width="8" height="5" viewBox="0 0 8 5"><path d="M0 0 H8 L4.0 5 Z" fill="#cfcfcf"/></svg>
<div style="left:234px;top:794px;width:1px;height:21px;background:#1e1e1e;"></div>
<div style="left:235px;top:794px;width:1px;height:21px;background:#3e3e3e;"></div>
<svg style="left:765px;top:796px;" width="23" height="16" viewBox="0 0 23 16"><path d="M2 5 H13 L10 2 M13 5 L10 8" stroke="#aaa" stroke-width="2" fill="none"/><path d="M3 10 Q6 15 13 13" stroke="#aaa" stroke-width="2" fill="none"/><path d="M17 11 H23 L20 15 Z" fill="#ddd"/></svg>
<div style="left:797px;top:793px;width:17px;height:22px;background:linear-gradient(#4a4a4a,#3a3a3a);border:1px solid #222;border-radius:3px;"></div>
<svg style="left:797px;top:793px;" width="17" height="22" viewBox="0 0 17 22"><path d="M5 6 H12 M8.5 6 V16 M5 16 H12" stroke="#aaa" stroke-width="1.6"/></svg>
<div style="left:816px;top:793px;width:30px;height:22px;background:linear-gradient(#4a4a4a,#3a3a3a);border:1px solid #222;border-radius:3px;"></div>
<svg style="left:816px;top:793px;" width="30" height="22" viewBox="0 0 30 22"><rect x="9" y="5" width="2.5" height="12" fill="#aaa"/><path d="M22 5 V17 L12 11 Z" fill="#aaa"/></svg>
<div style="left:848px;top:793px;width:30px;height:22px;background:linear-gradient(#4a4a4a,#3a3a3a);border:1px solid #222;border-radius:3px;"></div>
<svg style="left:848px;top:793px;" width="30" height="22" viewBox="0 0 30 22"><circle cx="10" cy="15" r="2" fill="none" stroke="#aaa"/><rect x="9.5" y="5" width="1" height="8" fill="#aaa"/><path d="M22 5 V17 L13 11 Z" fill="#aaa"/></svg>
<div style="left:880px;top:793px;width:30px;height:22px;background:linear-gradient(#4a4a4a,#3a3a3a);border:1px solid #222;border-radius:3px;"></div>
<svg style="left:880px;top:793px;" width="30" height="22" viewBox="0 0 30 22"><path d="M18 5 V17 L9 11 Z" fill="#aaa"/><rect x="19" y="5" width="2.5" height="12" fill="#aaa"/></svg>
<div style="left:912px;top:793px;width:30px;height:22px;background:linear-gradient(#4a4a4a,#3a3a3a);border:1px solid #222;border-radius:3px;"></div>
<svg style="left:912px;top:793px;" width="30" height="22" viewBox="0 0 30 22"><path d="M19 5 V17 L10 11 Z" fill="#aaa"/></svg>
<div style="left:944px;top:793px;width:47px;height:22px;background:#2f2f2f;border-radius:2px;"></div>
<div class="t" style="top:798.0px;font-size:13px;line-height:13px;color:#f0901a;left:947.5px;width:40px;text-align:center;">1</div>
<div style="left:994px;top:793px;width:30px;height:22px;background:linear-gradient(#4a4a4a,#3a3a3a);border:1px solid #222;border-radius:3px;"></div>
<svg style="left:994px;top:793px;" width="30" height="22" viewBox="0 0 30 22"><path d="M11 5 V17 L20 11 Z" fill="#aaa"/></svg>
<div style="left:1026px;top:793px;width:29px;height:22px;background:linear-gradient(#4a4a4a,#3a3a3a);border:1px solid #222;border-radius:3px;"></div>
<svg style="left:1026px;top:793px;" width="29" height="22" viewBox="0 0 29 22"><rect x="8" y="5" width="2.5" height="12" fill="#aaa"/><path d="M11 5 V17 L20 11 Z" fill="#aaa"/></svg>
<div style="left:1058px;top:793px;width:29px;height:22px;background:linear-gradient(#4a4a4a,#3a3a3a);border:1px solid #222;border-radius:3px;"></div>
<svg style="left:1058px;top:793px;" width="29" height="22" viewBox="0 0 29 22"><path d="M7 5 V17 L16 11 Z" fill="#aaa"/><circle cx="19" cy="15" r="2" fill="none" stroke="#aaa"/><rect x="18.5" y="5" width="1" height="8" fill="#aaa"/></svg>
<div style="left:1090px;top:793px;width:30px;height:22px;background:linear-gradient(#4a4a4a,#3a3a3a);border:1px solid #222;border-radius:3px;"></div>
<svg style="left:1090px;top:793px;" width="30" height="22" viewBox="0 0 30 22"><path d="M8 5 V17 L18 11 Z" fill="#aaa"/><rect x="18.5" y="5" width="2.5" height="12" fill="#aaa"/></svg>
<div style="left:1122px;top:793px;width:16px;height:22px;background:linear-gradient(#4a4a4a,#3a3a3a);border:1px solid #222;border-radius:3px;"></div>
<svg style="left:1122px;top:793px;" width="16" height="22" viewBox="0 0 16 22"><circle cx="8" cy="11" r="4.5" fill="none" stroke="#ccc" stroke-width="1.5"/></svg>
<div style="left:1151px;top:793px;width:20px;height:22px;background:linear-gradient(#4a4a4a,#3a3a3a);border:1px solid #222;border-radius:3px;"></div>
<svg style="left:1151px;top:793px;" width="20" height="22" viewBox="0 0 20 22"><path d="M10 6 V16 L3 11 Z M17 6 V16 L10 11 Z" fill="#aaa"/></svg>
<div style="left:1174px;top:794px;width:22px;height:21px;background:#2a2a2a;border-radius:2px;"></div>
<div class="t" style="top:798.0px;font-size:13px;line-height:13px;color:#cfcfcf;left:1170.0px;width:30px;text-align:center;">10</div>
<div style="left:1198px;top:793px;width:20px;height:22px;background:linear-gradient(#4a4a4a,#3a3a3a);border:1px solid #222;border-radius:3px;"></div>
<svg style="left:1198px;top:793px;" width="20" height="22" viewBox="0 0 20 22"><path d="M3 6 V16 L10 11 Z M10 6 V16 L17 11 Z" fill="#aaa"/></svg>
<svg style="left:1769px;top:797px;" width="14" height="13" viewBox="0 0 14 13"><rect x="0.5" y="0.5" width="13" height="12" fill="none" stroke="#aaa"/><path d="M4 2.5 V10.5 L11 6.5 Z" fill="#aaa"/></svg>
<svg style="left:1790px;top:797px;" width="15" height="13" viewBox="0 0 15 13"><rect x="0.5" y="0.5" width="14" height="12" fill="#aaa"/><circle cx="7.5" cy="6.5" r="3.5" fill="#333"/></svg>
<svg style="left:1815px;top:795px;" width="14" height="15" viewBox="0 0 14 15"><path d="M3 7 V4 A4 4 0 0 1 11 4 V7" stroke="#aaa" stroke-width="2" fill="none"/><rect x="1" y="7" width="12" height="8" fill="#aaa"/><rect x="6" y="9" width="2" height="4" fill="#333"/></svg>
<svg style="left:1841px;top:795px;" width="17" height="16" viewBox="0 0 17 16"><path d="M7 0 V9 M7 0 L11 4 L7 6" stroke="#aaa" stroke-width="1.5" fill="#aaa"/><path d="M1 11 V15 H16 V11 M5 13 V15 M9 12 V15 M13 13 V15" stroke="#aaa" stroke-width="1.2" fill="none"/></svg>
<div style="left:1866px;top:793px;width:48px;height:22px;background:#2a2a2a;border-radius:3px;"></div>
<div class="t" style="top:798.0px;font-size:13px;line-height:13px;color:#cfcfcf;left:1866.0px;width:48px;text-align:center;">269</div>
<div style="left:58px;top:820px;width:1874px;height:2px;background:#1a1a1a;"></div>
<div style="left:58px;top:822px;width:1874px;height:29px;background:#272727;"></div>
<div style="left:61px;top:825px;width:8px;height:10px;background:#c2c2c2;"></div>
<div style="left:69px;top:825px;width:8px;height:10px;background:#6c6c6c;"></div>
<div style="left:61px;top:835px;width:8px;height:6px;background:#9c9c9c;"></div>
<div style="left:69px;top:835px;width:8px;height:6px;background:#5c5c5c;"></div>
<div style="left:82px;top:824px;width:120px;height:27px;background:#323232;border:1px solid #222;border-bottom:none;border-radius:4px 4px 0 0;"></div>
<div class="t" style="top:831.9px;font-size:12.5px;line-height:12.5px;color:#f0a030;left:96px;">Node Graph</div>
<svg style="left:174px;top:830px;" width="14" height="14" viewBox="0 0 14 14"><circle cx="7" cy="7" r="7" fill="#3a3a3a"/><path d="M4.2 4.2 L9.8 9.8 M9.8 4.2 L4.2 9.8" stroke="#8a8a8a" stroke-width="1.8"/></svg>
<div style="left:203px;top:827px;width:126px;height:24px;background:#2a2a2a;border:1px solid #222;border-bottom:none;border-radius:4px 4px 0 0;"></div>
<div class="t" style="top:832.4px;font-size:12.5px;line-height:12.5px;color:#c8c8c8;left:218px;">Curve Editor</div>
<svg style="left:300px;top:831px;" width="14" height="14" viewBox="0 0 14 14"><circle cx="7" cy="7" r="7" fill="#3a3a3a"/><path d="M4.2 4.2 L9.8 9.8 M9.8 4.2 L4.2 9.8" stroke="#8a8a8a" stroke-width="1.8"/></svg>
<div style="left:330px;top:827px;width:119px;height:24px;background:#2a2a2a;border:1px solid #222;border-bottom:none;border-radius:4px 4px 0 0;"></div>
<div class="t" style="top:832.4px;font-size:12.5px;line-height:12.5px;color:#c8c8c8;left:344.5px;">Dope Sheet</div>
<svg style="left:421px;top:831px;" width="14" height="14" viewBox="0 0 14 14"><circle cx="7" cy="7" r="7" fill="#3a3a3a"/><path d="M4.2 4.2 L9.8 9.8 M9.8 4.2 L4.2 9.8" stroke="#8a8a8a" stroke-width="1.8"/></svg>
<div style="left:58px;top:851px;width:1874px;height:505px;background:#323232;"></div>
<div style="left:252px;top:893px;width:79px;height:79px;background:linear-gradient(#c4c4c4,#8c8c8c);border:1px solid #1a1a1a;"></div>
<div style="left:253px;top:894px;width:77px;height:44px;border:1px solid #e8e8e8;"></div>
<svg style="left:254px;top:895px;" width="75" height="42" viewBox="0 0 75 42"><defs><radialGradient id="tg254895" cx="0.5" cy="0.35" r="0.8"><stop offset="0" stop-color="#649a58"/><stop offset="0.55" stop-color="#437640"/><stop offset="1" stop-color="#2c5a30"/></radialGradient></defs><rect width="75" height="42" fill="url(#tg254895)"/><rect y="30.24" width="75" height="11.760000000000002" fill="#6e8e5e" opacity="0.55"/><rect x="35.5" y="16.8" width="4" height="12.6" fill="#3a3028"/><circle cx="37.5" cy="15.54" r="1.8" fill="#c8a080"/><rect x="36.0" y="28.560000000000002" width="3" height="5.880000000000001" fill="#4a4040"/><path d="M66 10 V42 M66 30 L60 42 M66 30 L72 42" stroke="#2a2520" stroke-width="1"/><rect x="62" y="3" width="9" height="9" fill="#2a2624"/><rect x="64" y="12" width="8" height="7" fill="#8a7a50"/><rect x="71" y="10" width="4" height="32" fill="#3a3530"/></svg>
<div class="t" style="top:941.8px;font-size:12px;line-height:12px;color:#000;left:231.5px;width:120px;text-align:center;letter-spacing:0.2px;">Read8</div>
<div class="t" style="top:953.8px;font-size:12px;line-height:12px;color:#000;left:171.5px;width:240px;text-align:center;letter-spacing:0.2px;">A003_01070217_C013.mov</div>
<div style="left:254.0px;top:966px;width:8.0px;height:3px;background:#ff0000;"></div>
<div style="left:261.5px;top:966px;width:8.0px;height:3px;background:#00ff00;"></div>
<div style="left:269.0px;top:966px;width:8.0px;height:3px;background:#0000ff;"></div>
<div style="left:276.5px;top:966px;width:8.0px;height:3px;background:#ffffff;"></div>
<svg style="left:286.5px;top:972px;" width="10" height="8" viewBox="0 0 10 8"><path d="M0 0 H10 L5 8 Z" fill="#000"/></svg>
<div style="left:362px;top:893px;width:79px;height:79px;background:linear-gradient(#c4c4c4,#8c8c8c);border:1px solid #1a1a1a;"></div>
<div style="left:363px;top:894px;width:77px;height:44px;border:1px solid #e8e8e8;"></div>
<svg style="left:364px;top:895px;" width="75" height="42" viewBox="0 0 75 42"><defs><radialGradient id="tg364895" cx="0.5" cy="0.35" r="0.8"><stop offset="0" stop-color="#649a58"/><stop offset="0.55" stop-color="#437640"/><stop offset="1" stop-color="#2c5a30"/></radialGradient></defs><rect width="75" height="42" fill="url(#tg364895)"/><rect y="30.24" width="75" height="11.760000000000002" fill="#6e8e5e" opacity="0.55"/><rect x="35.5" y="16.8" width="4" height="12.6" fill="#3a3028"/><circle cx="37.5" cy="15.54" r="1.8" fill="#c8a080"/><rect x="36.0" y="28.560000000000002" width="3" height="5.880000000000001" fill="#4a4040"/></svg>
<div class="t" style="top:941.8px;font-size:12px;line-height:12px;color:#000;left:341.5px;width:120px;text-align:center;letter-spacing:0.2px;">Read3</div>
<div class="t" style="top:953.8px;font-size:12px;line-height:12px;color:#000;left:281.5px;width:240px;text-align:center;letter-spacing:0.2px;">A003_01070210_C007.mov</div>
<div style="left:364.0px;top:966px;width:8.0px;height:3px;background:#ff0000;"></div>
<div style="left:371.5px;top:966px;width:8.0px;height:3px;background:#00ff00;"></div>
<div style="left:379.0px;top:966px;width:8.0px;height:3px;background:#0000ff;"></div>
<div style="left:386.5px;top:966px;width:8.0px;height:3px;background:#ffffff;"></div>
<svg style="left:396.5px;top:972px;" width="10" height="8" viewBox="0 0 10 8"><path d="M0 0 H10 L5 8 Z" fill="#000"/></svg>
<div style="left:472px;top:893px;width:79px;height:79px;background:linear-gradient(#c4c4c4,#8c8c8c);border:1px solid #1a1a1a;"></div>
<div style="left:473px;top:894px;width:77px;height:44px;border:1px solid #e8e8e8;"></div>
<svg style="left:474px;top:895px;" width="75" height="42" viewBox="0 0 75 42"><defs><radialGradient id="tg474895" cx="0.5" cy="0.35" r="0.8"><stop offset="0" stop-color="#649a58"/><stop offset="0.55" stop-color="#437640"/><stop offset="1" stop-color="#2c5a30"/></radialGradient></defs><rect width="75" height="42" fill="url(#tg474895)"/><rect y="30.24" width="75" height="11.760000000000002" fill="#6e8e5e" opacity="0.55"/><rect x="31.75" y="16.8" width="4" height="12.6" fill="#3a3028"/><circle cx="33.75" cy="15.54" r="1.8" fill="#c8a080"/><rect x="32.25" y="28.560000000000002" width="3" height="5.880000000000001" fill="#4a4040"/><path d="M14 10 V40 M14 30 L8 42 M14 30 L20 42" stroke="#222" stroke-width="1"/></svg>
<div class="t" style="top:941.8px;font-size:12px;line-height:12px;color:#000;left:451.5px;width:120px;text-align:center;letter-spacing:0.2px;">Read1</div>
<div class="t" style="top:953.8px;font-size:12px;line-height:12px;color:#000;left:391.5px;width:240px;text-align:center;letter-spacing:0.2px;">A003_01070130_C003.mov</div>
<div style="left:474.0px;top:966px;width:8.0px;height:3px;background:#ff0000;"></div>
<div style="left:481.5px;top:966px;width:8.0px;height:3px;background:#00ff00;"></div>
<div style="left:489.0px;top:966px;width:8.0px;height:3px;background:#0000ff;"></div>
<div style="left:496.5px;top:966px;width:8.0px;height:3px;background:#ffffff;"></div>
<svg style="left:506.5px;top:972px;" width="10" height="8" viewBox="0 0 10 8"><path d="M0 0 H10 L5 8 Z" fill="#000"/></svg>
<div style="left:582px;top:893px;width:79px;height:79px;background:linear-gradient(#c4c4c4,#8c8c8c);border:1px solid #1a1a1a;"></div>
<div style="left:583px;top:894px;width:77px;height:44px;border:1px solid #e8e8e8;"></div>
<svg style="left:584px;top:895px;" width="75" height="42" viewBox="0 0 75 42"><defs><radialGradient id="tg584895" cx="0.5" cy="0.35" r="0.8"><stop offset="0" stop-color="#649a58"/><stop offset="0.55" stop-color="#437640"/><stop offset="1" stop-color="#2c5a30"/></radialGradient></defs><rect width="75" height="42" fill="url(#tg584895)"/><rect y="30.24" width="75" height="11.760000000000002" fill="#6e8e5e" opacity="0.55"/><rect x="31.75" y="16.8" width="4" height="12.6" fill="#3a3028"/><circle cx="33.75" cy="15.54" r="1.8" fill="#c8a080"/><rect x="32.25" y="28.560000000000002" width="3" height="5.880000000000001" fill="#4a4040"/></svg>
<div class="t" style="top:941.8px;font-size:12px;line-height:12px;color:#000;left:561.5px;width:120px;text-align:center;letter-spacing:0.2px;">Read5</div>
<div class="t" style="top:953.8px;font-size:12px;line-height:12px;color:#000;left:501.5px;width:240px;text-align:center;letter-spacing:0.2px;">A003_01070215_C008.mov</div>
<div style="left:584.0px;top:966px;width:8.0px;height:3px;background:#ff0000;"></div>
<div style="left:591.5px;top:966px;width:8.0px;height:3px;background:#00ff00;"></div>
<div style="left:599.0px;top:966px;width:8.0px;height:3px;background:#0000ff;"></div>
<div style="left:606.5px;top:966px;width:8.0px;height:3px;background:#ffffff;"></div>
<svg style="left:616.5px;top:972px;" width="10" height="8" viewBox="0 0 10 8"><path d="M0 0 H10 L5 8 Z" fill="#000"/></svg>
<div style="left:692px;top:893px;width:79px;height:79px;background:linear-gradient(#c4c4c4,#8c8c8c);border:1px solid #1a1a1a;"></div>
<div style="left:693px;top:894px;width:77px;height:44px;border:1px solid #e8e8e8;"></div>
<svg style="left:694px;top:895px;" width="75" height="42" viewBox="0 0 75 42"><defs><radialGradient id="tg694895" cx="0.5" cy="0.35" r="0.8"><stop offset="0" stop-color="#649a58"/><stop offset="0.55" stop-color="#437640"/><stop offset="1" stop-color="#2c5a30"/></radialGradient></defs><rect width="75" height="42" fill="url(#tg694895)"/><rect y="30.24" width="75" height="11.760000000000002" fill="#6e8e5e" opacity="0.55"/><rect x="31.75" y="16.8" width="4" height="12.6" fill="#3a3028"/><circle cx="33.75" cy="15.54" r="1.8" fill="#c8a080"/><rect x="32.25" y="28.560000000000002" width="3" height="5.880000000000001" fill="#4a4040"/></svg>
<div class="t" style="top:941.8px;font-size:12px;line-height:12px;color:#000;left:671.5px;width:120px;text-align:center;letter-spacing:0.2px;">Read6</div>
<div class="t" style="top:953.8px;font-size:12px;line-height:12px;color:#000;left:611.5px;width:240px;text-align:center;letter-spacing:0.2px;">A003_01070216_C010.mov</div>
<div style="left:694.0px;top:966px;width:8.0px;height:3px;background:#ff0000;"></div>
<div style="left:701.5px;top:966px;width:8.0px;height:3px;background:#00ff00;"></div>
<div style="left:709.0px;top:966px;width:8.0px;height:3px;background:#0000ff;"></div>
<div style="left:716.5px;top:966px;width:8.0px;height:3px;background:#ffffff;"></div>
<svg style="left:726.5px;top:972px;" width="10" height="8" viewBox="0 0 10 8"><path d="M0 0 H10 L5 8 Z" fill="#000"/></svg>
<div style="left:1177px;top:862px;width:79px;height:79px;background:linear-gradient(#c4c4c4,#8c8c8c);border:1px solid #1a1a1a;"></div>
<div style="left:1178px;top:863px;width:77px;height:44px;border:1px solid #e8e8e8;"></div>
<svg style="left:1179px;top:864px;" width="75" height="42" viewBox="0 0 75 42"><defs><radialGradient id="tg1179864" cx="0.5" cy="0.35" r="0.8"><stop offset="0" stop-color="#649a58"/><stop offset="0.55" stop-color="#437640"/><stop offset="1" stop-color="#2c5a30"/></radialGradient></defs><rect width="75" height="42" fill="url(#tg1179864)"/><rect y="30.24" width="75" height="11.760000000000002" fill="#6e8e5e" opacity="0.55"/><rect x="35.5" y="16.8" width="4" height="12.6" fill="#3a3028"/><circle cx="37.5" cy="15.54" r="1.8" fill="#c8a080"/><rect x="36.0" y="28.560000000000002" width="3" height="5.880000000000001" fill="#4a4040"/></svg>
<div class="t" style="top:910.8px;font-size:12px;line-height:12px;color:#000;left:1156.5px;width:120px;text-align:center;letter-spacing:0.2px;">Read16</div>
<div class="t" style="top:922.8px;font-size:12px;line-height:12px;color:#000;left:1096.5px;width:240px;text-align:center;letter-spacing:0.2px;">A003_01070218_C014.mov</div>
<div style="left:1179.0px;top:935px;width:8.0px;height:3px;background:#ff0000;"></div>
<div style="left:1186.5px;top:935px;width:8.0px;height:3px;background:#00ff00;"></div>
<div style="left:1194.0px;top:935px;width:8.0px;height:3px;background:#0000ff;"></div>
<div style="left:1201.5px;top:935px;width:8.0px;height:3px;background:#ffffff;"></div>
<div style="left:1386px;top:864px;width:79px;height:79px;background:linear-gradient(#c4c4c4,#8c8c8c);border:1px solid #1a1a1a;"></div>
<div style="left:1387px;top:865px;width:77px;height:44px;border:1px solid #e8e8e8;"></div>
<svg style="left:1388px;top:866px;" width="75" height="42" viewBox="0 0 75 42"><defs><radialGradient id="tg1388866" cx="0.5" cy="0.35" r="0.8"><stop offset="0" stop-color="#649a58"/><stop offset="0.55" stop-color="#437640"/><stop offset="1" stop-color="#2c5a30"/></radialGradient></defs><rect width="75" height="42" fill="url(#tg1388866)"/><rect y="30.24" width="75" height="11.760000000000002" fill="#6e8e5e" opacity="0.55"/></svg>
<div class="t" style="top:912.8px;font-size:12px;line-height:12px;color:#000;left:1365.5px;width:120px;text-align:center;letter-spacing:0.2px;">Read7</div>
<div class="t" style="top:924.8px;font-size:12px;line-height:12px;color:#000;left:1305.5px;width:240px;text-align:center;letter-spacing:0.2px;">A003_01070216_C011.mov</div>
<div style="left:1388.0px;top:937px;width:8.0px;height:3px;background:#ff0000;"></div>
<div style="left:1395.5px;top:937px;width:8.0px;height:3px;background:#00ff00;"></div>
<div style="left:1403.0px;top:937px;width:8.0px;height:3px;background:#0000ff;"></div>
<div style="left:1410.5px;top:937px;width:8.0px;height:3px;background:#ffffff;"></div>
<svg style="left:1420.5px;top:943px;" width="10" height="8" viewBox="0 0 10 8"><path d="M0 0 H10 L5 8 Z" fill="#000"/></svg>
<div style="left:1023px;top:1109px;width:79px;height:79px;background:linear-gradient(#c4c4c4,#8c8c8c);border:1px solid #1a1a1a;"></div>
<div style="left:1024px;top:1110px;width:77px;height:44px;border:1px solid #e8e8e8;"></div>
<svg style="left:1025px;top:1111px;" width="75" height="42" viewBox="0 0 75 42"><defs><radialGradient id="tg10251111" cx="0.5" cy="0.35" r="0.8"><stop offset="0" stop-color="#649a58"/><stop offset="0.55" stop-color="#437640"/><stop offset="1" stop-color="#2c5a30"/></radialGradient></defs><rect width="75" height="42" fill="url(#tg10251111)"/><rect y="30.24" width="75" height="11.760000000000002" fill="#6e8e5e" opacity="0.55"/><rect x="35.5" y="16.8" width="4" height="12.6" fill="#3a3028"/><circle cx="37.5" cy="15.54" r="1.8" fill="#c8a080"/><rect x="36.0" y="28.560000000000002" width="3" height="5.880000000000001" fill="#4a4040"/></svg>
<div class="t" style="top:1157.8px;font-size:12px;line-height:12px;color:#000;left:1002.5px;width:120px;text-align:center;letter-spacing:0.2px;">Read2</div>
<div class="t" style="top:1169.8px;font-size:12px;line-height:12px;color:#000;left:942.5px;width:240px;text-align:center;letter-spacing:0.2px;">A003_0170218_C014.00001.DPX</div>
<div style="left:1025.0px;top:1182px;width:8.0px;height:3px;background:#ff0000;"></div>
<div style="left:1032.5px;top:1182px;width:8.0px;height:3px;background:#00ff00;"></div>
<div style="left:1040.0px;top:1182px;width:8.0px;height:3px;background:#0000ff;"></div>
<div style="left:1047.5px;top:1182px;width:8.0px;height:3px;background:#ffffff;"></div>
<svg style="left:58px;top:851px;" width="1874" height="505" viewBox="0 0 1874 505"><line x1="1158" y1="90" x2="1158" y2="123" stroke="#f5b060" stroke-width="2"/><path d="M1158.0,122.0 L1154.5,112.0 L1161.5,112.0 Z" fill="#f5b060"/><line x1="1152" y1="128.5" x2="1042" y2="128.5" stroke="#000" stroke-width="2.5"/><path d="M1036.0,128.5 L1046.0,124.5 L1046.0,132.5 Z" fill="#000"/><line x1="1158" y1="134" x2="1158" y2="263" stroke="#f5b060" stroke-width="2"/><path d="M1158.0,263.0 L1154.5,253.0 L1161.5,253.0 Z" fill="#f5b060"/><line x1="1158" y1="277" x2="1158" y2="377" stroke="#f5b060" stroke-width="2"/><path d="M1158.0,385.0 L1154.5,375.0 L1161.5,375.0 Z" fill="#f5b060"/><line x1="980" y1="79" x2="990" y2="104" stroke="#000" stroke-width="2"/><path d="M991.0,112.0 L985.5,104.2 L991.3,102.5 Z" fill="#000"/><line x1="945" y1="91" x2="970" y2="107" stroke="#000" stroke-width="2"/><path d="M974.0,112.0 L966.1,109.2 L969.1,105.2 Z" fill="#000"/><line x1="996" y1="144" x2="996" y2="194" stroke="#000" stroke-width="2"/><path d="M996.0,203.0 L992.0,193.0 L1000.0,193.0 Z" fill="#000"/><line x1="794" y1="265" x2="814" y2="281" stroke="#f5b060" stroke-width="2"/><path d="M822.0,287.0 L813.2,283.5 L817.0,278.9 Z" fill="#f5b060"/><line x1="822" y1="254" x2="831" y2="279" stroke="#f5b060" stroke-width="2"/><path d="M834.0,287.0 L828.2,279.5 L833.9,277.5 Z" fill="#f5b060"/><line x1="851" y1="254" x2="843" y2="279" stroke="#f5b060" stroke-width="2"/><path d="M841.0,287.0 L840.3,277.5 L846.1,279.0 Z" fill="#f5b060"/><line x1="964" y1="297" x2="886" y2="297" stroke="#f5b060" stroke-width="2"/><path d="M877.0,297.0 L887.0,293.0 L887.0,301.0 Z" fill="#f5b060"/><line x1="837" y1="307" x2="837" y2="387" stroke="#f5b060" stroke-width="2"/><path d="M837.0,396.0 L833.5,386.0 L840.5,386.0 Z" fill="#f5b060"/><line x1="843" y1="402" x2="1110" y2="402" stroke="#f5b060" stroke-width="2"/><path d="M1118.0,402.0 L1108.0,406.0 L1108.0,398.0 Z" fill="#f5b060"/><line x1="1115" y1="417" x2="875" y2="502" stroke="#111" stroke-width="1.5" stroke-dasharray="2 3"/><path d="M871.0,504.0 L876.8,499.3 L878.4,504.0 Z" fill="#111"/></svg>
<svg style="left:1210px;top:973.5px;" width="12" height="12" viewBox="0 0 12 12"><defs><radialGradient id="dg" cx="0.4" cy="0.3" r="0.7"><stop offset="0" stop-color="#e0e0e0"/><stop offset="1" stop-color="#8a8a8a"/></radialGradient></defs><circle cx="6" cy="6" r="5.5" fill="url(#dg)" stroke="#222" stroke-width="0.8"/></svg>
<svg style="left:1209.5px;top:1116.5px;" width="12" height="12" viewBox="0 0 12 12"><defs><radialGradient id="dg" cx="0.4" cy="0.3" r="0.7"><stop offset="0" stop-color="#e0e0e0"/><stop offset="1" stop-color="#8a8a8a"/></radialGradient></defs><circle cx="6" cy="6" r="5.5" fill="url(#dg)" stroke="#222" stroke-width="0.8"/></svg>
<svg style="left:889px;top:1247.5px;" width="12" height="12" viewBox="0 0 12 12"><defs><radialGradient id="dg" cx="0.4" cy="0.3" r="0.7"><stop offset="0" stop-color="#e0e0e0"/><stop offset="1" stop-color="#8a8a8a"/></radialGradient></defs><circle cx="6" cy="6" r="5.5" fill="url(#dg)" stroke="#222" stroke-width="0.8"/></svg>
<div style="left:1014.5px;top:963.5px;width:79px;height:31px;background:linear-gradient(#e6e6e6,#9c9c9c);border:1px solid #1a1a1a;"></div>
<div class="t" style="top:967.8px;font-size:12px;line-height:12px;color:#000;left:994.0px;width:120px;text-align:center;letter-spacing:0.2px;">Denoise1</div>
<div class="t" style="top:979.8px;font-size:12px;line-height:12px;color:#000;left:994.0px;width:120px;text-align:center;letter-spacing:0.2px;">(Result)</div>
<div style="left:1017.0px;top:990px;width:9.0px;height:3px;background:#ff0000;"></div>
<div style="left:1025.5px;top:990px;width:9.0px;height:3px;background:#00ff00;"></div>
<div style="left:1034.0px;top:990px;width:9.0px;height:3px;background:#0000ff;"></div>
<div style="left:1042.5px;top:990px;width:9.0px;height:3px;background:#ffffff;"></div>
<div class="t" style="top:932.8px;font-size:12px;line-height:12px;color:#f5b060;left:1019px;letter-spacing:0.2px;">Noise</div>
<div class="t" style="top:949.8px;font-size:12px;line-height:12px;color:#f5b060;left:989.5px;letter-spacing:0.2px;">Motion</div>
<div class="t" style="top:973.8px;font-size:12px;line-height:12px;color:#f5b060;left:1103.5px;letter-spacing:0.2px;">Source</div>
<div style="left:1014.5px;top:1054.5px;width:79px;height:31px;background:linear-gradient(#e4e400,#a8a800);border:1px solid #1a1a1a;"></div>
<div class="t" style="top:1058.8px;font-size:12px;line-height:12px;color:#000;left:994.0px;width:120px;text-align:center;letter-spacing:0.2px;">Write1</div>
<div class="t" style="top:1070.3px;font-size:12px;line-height:12px;color:#000;left:934.0px;width:240px;text-align:center;letter-spacing:0.2px;">A003_0170218_C014.00001.DPX</div>
<div style="left:1017.0px;top:1081px;width:9.0px;height:3px;background:#ff0000;"></div>
<div style="left:1025.5px;top:1081px;width:9.0px;height:3px;background:#00ff00;"></div>
<div style="left:1034.0px;top:1081px;width:9.0px;height:3px;background:#0000ff;"></div>
<svg style="left:1049px;top:1086px;" width="10" height="8" viewBox="0 0 10 8"><path d="M0 0 H10 L5 8 Z" fill="#000"/></svg>
<div style="left:855.5px;top:1138.5px;width:79px;height:19px;background:linear-gradient(#dcdcdc,#8e8e8e);border:1px solid #1a1a1a;"></div>
<div class="t" style="top:1142.8px;font-size:12px;line-height:12px;color:#000;left:834.0px;width:120px;text-align:center;letter-spacing:0.2px;">Keylight1</div>
<div style="left:858.0px;top:1153px;width:8.0px;height:3px;background:#ff0000;"></div>
<div style="left:865.5px;top:1153px;width:8.0px;height:3px;background:#00ff00;"></div>
<div style="left:873.0px;top:1153px;width:8.0px;height:3px;background:#0000ff;"></div>
<div style="left:880.5px;top:1153px;width:8.0px;height:3px;background:#ffffff;"></div>
<div class="t" style="top:1108.3px;font-size:11.5px;line-height:11.5px;color:#dadada;left:861px;">Bg</div>
<div class="t" style="top:1119.3px;font-size:11.5px;line-height:11.5px;color:#dadada;left:864px;">OutM</div>
<div class="t" style="top:1107.3px;font-size:11.5px;line-height:11.5px;color:#dadada;left:897px;">InM</div>
<div class="t" style="top:1143.8px;font-size:12px;line-height:12px;color:#e8e8e8;left:945px;letter-spacing:0.2px;">Source</div>
<div style="left:1175.5px;top:1237.5px;width:79px;height:31px;background:#f5b060;border:2px solid #6a2840;"></div>
<div class="t" style="top:1242.3px;font-size:12px;line-height:12px;color:#000;left:1155.0px;width:120px;text-align:center;letter-spacing:0.2px;">Copy1</div>
<div class="t" style="top:1253.8px;font-size:12px;line-height:12px;color:#000;left:1135.0px;width:160px;text-align:center;letter-spacing:0.2px;">(alpha -> alpha)</div>
<div style="left:1180px;top:1265px;width:7.5px;height:3px;background:#ff0000;"></div>
<div style="left:1187px;top:1265px;width:7.5px;height:3px;background:#00ff00;"></div>
<div style="left:1194px;top:1265px;width:7.5px;height:3px;background:#0000ff;"></div>
<div style="left:1201px;top:1265px;width:7.5px;height:3px;background:#ffffff;"></div>
<div class="t" style="top:1248.8px;font-size:12px;line-height:12px;color:#d8d8d8;left:1156px;">A</div>
<div class="t" style="top:1216.8px;font-size:12px;line-height:12px;color:#d8d8d8;left:1211px;">B</div>
<svg style="left:1255px;top:1246px;" width="6" height="12" viewBox="0 0 6 12"><path d="M6 0 V12 L0 6 Z" fill="#f5b060"/></svg>
<div style="left:1650px;top:1280px;width:282px;height:1px;background:#e8e8e8;"></div>
<div style="left:1650px;top:1280px;width:1px;height:76px;background:#e8e8e8;"></div>
<div style="left:1650px;top:1280px;width:6px;height:6px;border:1px solid #e8e8e8;"></div>
<div style="left:1680px;top:1282px;width:252px;height:71px;background:#524a4a;border:1px solid #f0b4b4;"></div>
<svg style="left:1680px;top:1282px;" width="252" height="74" viewBox="0 0 252 74"><rect x="27" y="3" width="11" height="6" fill="#6e8a5e"/><rect x="27" y="8" width="11" height="6" fill="#b8b0b0"/><rect x="42" y="3" width="11" height="6" fill="#6e8a5e"/><rect x="42" y="8" width="11" height="6" fill="#b8b0b0"/><rect x="57" y="3" width="11" height="6" fill="#6e8a5e"/><rect x="57" y="8" width="11" height="6" fill="#b8b0b0"/><rect x="73" y="3" width="11" height="6" fill="#6e8a5e"/><rect x="73" y="8" width="11" height="6" fill="#b8b0b0"/><rect x="88" y="3" width="11" height="6" fill="#6e8a5e"/><rect x="88" y="8" width="11" height="6" fill="#b8b0b0"/><rect x="155" y="0" width="11" height="5" fill="#6e8a5e"/><rect x="155" y="5" width="11" height="6" fill="#b8b0b0"/><rect x="184" y="0" width="11" height="5" fill="#6e8a5e"/><rect x="184" y="5" width="11" height="6" fill="#b8b0b0"/><rect x="133" y="13" width="11" height="4" fill="#d8d0d0"/><rect x="133" y="25" width="11" height="4" fill="#c8c800"/><rect x="134" y="33" width="11" height="5" fill="#6e8a5e"/><rect x="134" y="38" width="11" height="6" fill="#b8b0b0"/><rect x="111" y="37" width="11" height="3" fill="#d8d0d0"/><path d="M116 40 V51 H156 M160 11 V51 M122 39 H134" stroke="#1e2438" stroke-width="1.5" fill="none"/><rect x="155" y="51" width="11" height="4" fill="#f5b060"/><rect x="111" y="68" width="11" height="3" fill="#d8d0d0"/></svg>
<div style="left:1936px;top:60px;width:615px;height:1296px;background:#323232;"></div>
<div style="left:1936px;top:60px;width:615px;height:29px;background:#272727;"></div>
<div style="left:1938px;top:63px;width:8px;height:10px;background:#c2c2c2;"></div>
<div style="left:1946px;top:63px;width:8px;height:10px;background:#6c6c6c;"></div>
<div style="left:1938px;top:73px;width:8px;height:6px;background:#9c9c9c;"></div>
<div style="left:1946px;top:73px;width:8px;height:6px;background:#5c5c5c;"></div>
<div style="left:1959px;top:62px;width:111px;height:27px;background:#323232;border:1px solid #222;border-bottom:none;border-radius:4px 4px 0 0;"></div>
<div class="t" style="top:69.4px;font-size:12.5px;line-height:12.5px;color:#cfcfcf;left:1973px;">Properties</div>
<svg style="left:2041px;top:68px;" width="14" height="14" viewBox="0 0 14 14"><circle cx="7" cy="7" r="7" fill="#3a3a3a"/><path d="M4.2 4.2 L9.8 9.8 M9.8 4.2 L4.2 9.8" stroke="#8a8a8a" stroke-width="1.8"/></svg>
<div style="left:2070px;top:64px;width:171px;height:25px;background:#2c2c2c;border:1px solid #222;border-bottom:none;border-radius:4px 4px 0 0;"></div>
<div class="t" style="top:70.4px;font-size:12.5px;line-height:12.5px;color:#cfcfcf;left:2085px;">Background Renders</div>
<svg style="left:2214px;top:69px;" width="14" height="14" viewBox="0 0 14 14"><circle cx="7" cy="7" r="7" fill="#3a3a3a"/><path d="M4.2 4.2 L9.8 9.8 M9.8 4.2 L4.2 9.8" stroke="#8a8a8a" stroke-width="1.8"/></svg>
<div style="left:1941px;top:94px;width:21px;height:19px;background:#2a2a2a;border:1px solid #1e1e1e;border-radius:3px;"></div>
<div class="t" style="top:97.4px;font-size:12.5px;line-height:12.5px;color:#cfcfcf;left:1936.5px;width:30px;text-align:center;">10</div>
<svg style="left:1967px;top:96px;" width="14" height="15" viewBox="0 0 14 15"><path d="M4 7 V4.5 A3.5 3.5 0 0 1 11 4.5" stroke="#111" stroke-width="2" fill="none"/><rect x="1" y="7" width="9" height="8" fill="#111"/></svg>
<svg style="left:1986px;top:96px;" width="15" height="14" viewBox="0 0 15 14"><path d="M0 2 H6 M0 7 H6 M0 12 H6" stroke="#bbb" stroke-width="1.5"/><path d="M7 1 L14 13 M14 1 L7 13" stroke="#ddd" stroke-width="2.2"/></svg>
<div style="left:1941px;top:119px;width:589px;height:2px;background:#e8e8e8;"></div>
<div style="left:1941px;top:121px;width:589px;height:24px;background:linear-gradient(#3d3d3d,#373737);border:1px solid #1e1e1e;border-top:none;border-radius:0 0 2px 2px;"></div>
<svg style="left:1947px;top:128px;" width="9" height="7" viewBox="0 0 9 7"><path d="M0 0 H9 L4.5 7 Z" fill="#000"/></svg>
<div style="left:1965.5px;top:123.5px;width:68px;height:19px;background:#484848;border:1px solid #262626;border-radius:3px;"></div>
<div style="left:1987.5px;top:124px;width:1px;height:18px;background:#262626;"></div>
<div style="left:2010.5px;top:124px;width:1px;height:18px;background:#262626;"></div>
<svg style="left:1971px;top:128px;" width="10" height="10" viewBox="0 0 10 10"><circle cx="5" cy="5" r="4.2" fill="#ddd" stroke="#000" stroke-width="1.6"/><circle cx="5" cy="5" r="1.6" fill="#000"/></svg>
<svg style="left:1992px;top:126px;" width="14" height="14" viewBox="0 0 14 14"><path d="M4 0 L7 5 L10 0" stroke="#111" stroke-width="1" fill="none"/><rect x="1" y="5" width="12" height="6" rx="1" fill="#111"/><path d="M6 11 L7 13 L8 11 Z" fill="#111"/></svg>
<svg style="left:2016px;top:125px;" width="11" height="15" viewBox="0 0 11 15"><path d="M1 1 Q0 6 3 8 V15 H8 V8 Q11 6 10 1 L8 3 V5 Q5.5 7 3 5 V3 Z" fill="#000"/></svg>
<div style="left:2044.5px;top:123.5px;width:292px;height:19px;background:#383838;border:1px solid #262626;border-radius:3px;"></div>
<div class="t" style="top:126.7px;font-size:11.6px;line-height:11.6px;color:#d0d0d0;left:2048.5px;letter-spacing:0.8px;">Keylight1</div>
<div style="left:2347.5px;top:123.5px;width:114px;height:19px;background:#484848;border:1px solid #262626;border-radius:3px;"></div>
<div style="left:2369.5px;top:124px;width:1px;height:18px;background:#262626;"></div>
<div style="left:2392.5px;top:124px;width:1px;height:18px;background:#262626;"></div>
<div style="left:2415.5px;top:124px;width:1px;height:18px;background:#262626;"></div>
<div style="left:2438.5px;top:124px;width:1px;height:18px;background:#262626;"></div>
<svg style="left:2351px;top:127px;" width="11" height="11" viewBox="0 0 11 11"><rect x="0.75" y="0.75" width="9.5" height="9.5" fill="#d8d8d8" stroke="#000" stroke-width="1.5"/><path d="M1 10 L10 1" stroke="#000" stroke-width="1.3"/></svg>
<svg style="left:2374px;top:127px;" width="11" height="11" viewBox="0 0 11 11"><rect x="0.75" y="0.75" width="9.5" height="9.5" fill="#d8d8d8" stroke="#000" stroke-width="1.5"/><path d="M1 10 L10 1" stroke="#000" stroke-width="1.3"/></svg>
<svg style="left:2397px;top:127px;" width="15" height="10" viewBox="0 0 15 10"><path d="M0 9 L1 4 L4 6 Q9 1 14 8 Q9 4 5 8 L6 10 Z" fill="#0a0a0a"/></svg>
<svg style="left:2420px;top:127px;" width="15" height="10" viewBox="0 0 15 10"><path d="M15 9 L14 4 L11 6 Q6 1 1 8 Q6 4 10 8 L9 10 Z" fill="#5c5c5c"/></svg>
<svg style="left:2443px;top:125px;" width="12" height="14" viewBox="0 0 12 14"><path d="M2 10 V2 H10 V6" stroke="#111" stroke-width="2.4" fill="none"/><path d="M3 7 V13 L0 10 M3 13 L6 10" stroke="#111" stroke-width="1.8" fill="none"/></svg>
<svg style="left:2477px;top:127px;" width="9" height="12" viewBox="0 0 9 12"><path d="M1.2 3.6 Q1.2 0.8 4.5 0.8 Q7.8 0.8 7.8 3.6 Q7.8 5.4 5.6 6.4 Q4.6 6.9 4.6 8" stroke="#000" stroke-width="2.2" fill="none"/><rect x="3.4" y="9.6" width="2.4" height="2.4" fill="#000"/></svg>
<svg style="left:2498px;top:128px;" width="9" height="9" viewBox="0 0 9 9"><rect x="3" y="0.75" width="5.25" height="4.5" fill="none" stroke="#000" stroke-width="1.5"/><rect x="0.75" y="3.5" width="5.5" height="4.75" fill="#3b3b3b" stroke="#000" stroke-width="1.5"/></svg>
<svg style="left:2515px;top:128px;" width="9" height="8" viewBox="0 0 9 8"><path d="M0.8 0.8 L8.2 7.2 M8.2 0.8 L0.8 7.2" stroke="#000" stroke-width="1.8"/></svg>
<div style="left:1941px;top:166.5px;width:589px;height:720px;border:1px solid #262626;border-radius:0 3px 3px 3px;"></div>
<div style="left:1941px;top:147px;width:75px;height:20.5px;background:#323232;border:1px solid #222;border-bottom:none;border-radius:4px 4px 0 0;"></div>
<div class="t" style="top:153.0px;font-size:11.2px;line-height:11.2px;color:#d0d0d0;left:1956px;letter-spacing:0.8px;">Keylight</div>
<div style="left:2016px;top:150px;width:59px;height:17px;background:#2a2a2a;border:1px solid #222;border-bottom:none;border-radius:4px 4px 0 0;"></div>
<div class="t" style="top:153.5px;font-size:11.2px;line-height:11.2px;color:#d0d0d0;left:2032px;letter-spacing:0.8px;">Node</div>
<div class="t" style="top:183.0px;font-size:11.2px;line-height:11.2px;color:#c8c8c8;left:1783.8000000000002px;width:300px;text-align:right;letter-spacing:0.8px;">View</div>
<div style="left:2089.5px;top:178.0px;width:141.5px;height:19px;background:linear-gradient(#484848,#424242);border:1px solid #282828;border-radius:3px;"></div>
<div class="t" style="top:183.5px;font-size:11.2px;line-height:11.2px;color:#d0d0d0;left:2094.5px;letter-spacing:0.8px;">Final Result</div>
<svg style="left:2217px;top:185.5px;" width="8" height="5" viewBox="0 0 8 5"><path d="M0 0 H8 L4 5 Z" fill="#dcdcdc"/></svg>
<div style="left:2089.5px;top:202px;width:15px;height:15px;background:#373737;border:1px solid #262626;border-radius:2px;"></div>
<div class="t" style="top:204.0px;font-size:11.2px;line-height:11.2px;color:#c8c8c8;left:2111px;letter-spacing:0.8px;">Unpremultiply Result</div>
<div class="t" style="top:224.0px;font-size:11.2px;line-height:11.2px;color:#c8c8c8;left:1783.8000000000002px;width:300px;text-align:right;letter-spacing:0.8px;">Screen Colour</div>
<div style="left:2089.5px;top:219.0px;width:72.5px;height:19px;background:#383838;border:1px solid #262626;border-radius:3px;"></div>
<div class="t" style="top:224.8px;font-size:11.5px;line-height:11.5px;color:#d0d0d0;left:2093.5px;letter-spacing:0.55px;">0.080168</div>
<div style="left:2091.0px;top:236.0px;width:69.5px;height:1px;background:#c84a4a;"></div>
<div style="left:2164.5px;top:219.0px;width:72.5px;height:19px;background:#383838;border:1px solid #262626;border-radius:3px;"></div>
<div class="t" style="top:224.8px;font-size:11.5px;line-height:11.5px;color:#d0d0d0;left:2168.5px;letter-spacing:0.55px;">0.158326</div>
<div style="left:2166.0px;top:236.0px;width:69.5px;height:1px;background:#4aa04a;"></div>
<div style="left:2239.5px;top:219.0px;width:72.5px;height:19px;background:#383838;border:1px solid #262626;border-radius:3px;"></div>
<div class="t" style="top:224.8px;font-size:11.5px;line-height:11.5px;color:#d0d0d0;left:2243.5px;letter-spacing:0.55px;">0.051595</div>
<div style="left:2241.0px;top:236.0px;width:69.5px;height:1px;background:#4a6ad0;"></div>
<div style="left:2442.5px;top:219.0px;width:57px;height:19px;background:#484848;border:1px solid #262626;border-radius:3px;"></div>
<div style="left:2461px;top:219.5px;width:1px;height:18px;background:#222;"></div>
<div style="left:2480px;top:219.5px;width:1px;height:18px;background:#222;"></div>
<div style="left:2445px;top:223.0px;width:13px;height:13px;background:#4a7a42;border:1px solid #000;"></div>
<div style="left:2464px;top:221.5px;width:13px;height:13px;background:radial-gradient(circle, rgba(235,235,235,0.95) 0%, rgba(235,235,235,0) 70%), conic-gradient(from 0deg, #ff50e0, #ff5050, #f0f050, #50ff50, #50f0f0, #5050ff, #ff50e0);border-radius:50%;"></div>
<div style="left:2481px;top:220.5px;width:16px;height:16px;background:#2a2a2a;border-radius:3px;"></div>
<div class="t" style="top:224.3px;font-size:11.5px;line-height:11.5px;color:#d0d0d0;left:2479.0px;width:20px;text-align:center;">3</div>
<div style="left:2500px;top:219.0px;width:18px;height:19px;background:#454545;border:1px solid #262626;border-radius:3px;"></div>
<svg style="left:2500px;top:219.0px;" width="18" height="19" viewBox="0 0 18 19"><path d="M3.5 15.5 Q6 8 8.5 8 Q11 8 12.5 13 Q14 15 17 3.5" stroke="#161616" stroke-width="1.8" fill="none"/></svg>
<div class="t" style="top:246.5px;font-size:11.2px;line-height:11.2px;color:#c8c8c8;left:1783.8000000000002px;width:300px;text-align:right;letter-spacing:0.8px;">Screen Gain</div>
<div style="left:2089.5px;top:241.5px;width:72.5px;height:19px;background:#383838;border:1px solid #262626;border-radius:3px;"></div>
<div class="t" style="top:247.3px;font-size:11.5px;line-height:11.5px;color:#d0d0d0;left:2093.5px;letter-spacing:0.55px;">1</div>
<svg style="left:2166px;top:240px;" width="333" height="12" viewBox="0 0 333 12"><rect x="0" y="8" width="332" height="1" fill="#050505"/><rect x="0" y="9" width="332" height="1" fill="#4a4a4a"/><rect x="0" y="10" width="332" height="1" fill="#050505"/><rect x="0" y="4" width="1" height="4" fill="#1e1e1e"/><rect x="17" y="4" width="1" height="4" fill="#1e1e1e"/><rect x="33" y="4" width="1" height="4" fill="#1e1e1e"/><rect x="50" y="4" width="1" height="4" fill="#1e1e1e"/><rect x="66" y="4" width="1" height="4" fill="#1e1e1e"/><rect x="83" y="4" width="1" height="4" fill="#1e1e1e"/><rect x="100" y="4" width="1" height="4" fill="#1e1e1e"/><rect x="116" y="4" width="1" height="4" fill="#1e1e1e"/><rect x="133" y="4" width="1" height="4" fill="#1e1e1e"/><rect x="149" y="4" width="1" height="4" fill="#1e1e1e"/><rect x="166" y="4" width="1" height="4" fill="#1e1e1e"/><rect x="183" y="4" width="1" height="4" fill="#1e1e1e"/><rect x="199" y="4" width="1" height="4" fill="#1e1e1e"/><rect x="216" y="4" width="1" height="4" fill="#1e1e1e"/><rect x="232" y="4" width="1" height="4" fill="#1e1e1e"/><rect x="249" y="4" width="1" height="4" fill="#1e1e1e"/><rect x="266" y="4" width="1" height="4" fill="#1e1e1e"/><rect x="282" y="4" width="1" height="4" fill="#1e1e1e"/><rect x="299" y="4" width="1" height="4" fill="#1e1e1e"/><rect x="315" y="4" width="1" height="4" fill="#1e1e1e"/><rect x="332" y="4" width="1" height="4" fill="#1e1e1e"/><rect x="0" y="2" width="1" height="6" fill="#1e1e1e"/><rect x="33" y="2" width="1" height="6" fill="#1e1e1e"/><rect x="66" y="2" width="1" height="6" fill="#1e1e1e"/><rect x="100" y="2" width="1" height="6" fill="#1e1e1e"/><rect x="133" y="2" width="1" height="6" fill="#1e1e1e"/><rect x="166" y="2" width="1" height="6" fill="#1e1e1e"/><rect x="199" y="2" width="1" height="6" fill="#1e1e1e"/><rect x="232" y="2" width="1" height="6" fill="#1e1e1e"/><rect x="266" y="2" width="1" height="6" fill="#1e1e1e"/><rect x="299" y="2" width="1" height="6" fill="#1e1e1e"/><rect x="332" y="2" width="1" height="6" fill="#1e1e1e"/><rect x="331" y="1" width="1" height="7" fill="#1e1e1e"/></svg>
<div class="t" style="top:251.4px;font-size:9.6px;line-height:9.6px;color:#000;left:2165.5px;letter-spacing:1.2px;font-weight:bold;">0</div>
<div class="t" style="top:251.4px;font-size:9.6px;line-height:9.6px;color:#000;left:2198.7px;letter-spacing:1.2px;font-weight:bold;">0.2</div>
<div class="t" style="top:251.4px;font-size:9.6px;line-height:9.6px;color:#000;left:2231.9px;letter-spacing:1.2px;font-weight:bold;">0.4</div>
<div class="t" style="top:251.4px;font-size:9.6px;line-height:9.6px;color:#000;left:2265.1px;letter-spacing:1.2px;font-weight:bold;">0.6</div>
<div class="t" style="top:251.4px;font-size:9.6px;line-height:9.6px;color:#000;left:2298.3px;letter-spacing:1.2px;font-weight:bold;">0.8</div>
<div class="t" style="top:251.4px;font-size:9.6px;line-height:9.6px;color:#000;left:2331.5px;letter-spacing:1.2px;font-weight:bold;">1</div>
<div class="t" style="top:251.4px;font-size:9.6px;line-height:9.6px;color:#000;left:2364.7px;letter-spacing:1.2px;font-weight:bold;">1.2</div>
<div class="t" style="top:251.4px;font-size:9.6px;line-height:9.6px;color:#000;left:2397.9px;letter-spacing:1.2px;font-weight:bold;">1.4</div>
<div class="t" style="top:251.4px;font-size:9.6px;line-height:9.6px;color:#000;left:2431.1px;letter-spacing:1.2px;font-weight:bold;">1.6</div>
<div class="t" style="top:251.4px;font-size:9.6px;line-height:9.6px;color:#000;left:2464.3px;letter-spacing:1.2px;font-weight:bold;">1.8</div>
<div class="t" style="top:251.4px;font-size:9.6px;line-height:9.6px;color:#000;left:2439px;width:60px;text-align:right;letter-spacing:1.2px;font-weight:bold;">2</div>
<div style="left:2329.5px;top:242px;width:5px;height:10px;background:#6e5a28;border:1px solid #2a2414;"></div>
<div style="left:2500px;top:241.5px;width:18px;height:19px;background:#454545;border:1px solid #262626;border-radius:3px;"></div>
<svg style="left:2500px;top:241.5px;" width="18" height="19" viewBox="0 0 18 19"><path d="M3.5 15.5 Q6 8 8.5 8 Q11 8 12.5 13 Q14 15 17 3.5" stroke="#161616" stroke-width="1.8" fill="none"/></svg>
<div class="t" style="top:268.5px;font-size:11.2px;line-height:11.2px;color:#c8c8c8;left:1783.8000000000002px;width:300px;text-align:right;letter-spacing:0.8px;">Screen Balance</div>
<div style="left:2089.5px;top:263.5px;width:72.5px;height:19px;background:#383838;border:1px solid #262626;border-radius:3px;"></div>
<div class="t" style="top:269.3px;font-size:11.5px;line-height:11.5px;color:#d0d0d0;left:2093.5px;letter-spacing:0.55px;">0.5</div>
<svg style="left:2166px;top:262px;" width="333" height="12" viewBox="0 0 333 12"><rect x="0" y="8" width="332" height="1" fill="#050505"/><rect x="0" y="9" width="332" height="1" fill="#4a4a4a"/><rect x="0" y="10" width="332" height="1" fill="#050505"/><rect x="0" y="4" width="1" height="4" fill="#1e1e1e"/><rect x="17" y="4" width="1" height="4" fill="#1e1e1e"/><rect x="33" y="4" width="1" height="4" fill="#1e1e1e"/><rect x="50" y="4" width="1" height="4" fill="#1e1e1e"/><rect x="66" y="4" width="1" height="4" fill="#1e1e1e"/><rect x="83" y="4" width="1" height="4" fill="#1e1e1e"/><rect x="100" y="4" width="1" height="4" fill="#1e1e1e"/><rect x="116" y="4" width="1" height="4" fill="#1e1e1e"/><rect x="133" y="4" width="1" height="4" fill="#1e1e1e"/><rect x="149" y="4" width="1" height="4" fill="#1e1e1e"/><rect x="166" y="4" width="1" height="4" fill="#1e1e1e"/><rect x="183" y="4" width="1" height="4" fill="#1e1e1e"/><rect x="199" y="4" width="1" height="4" fill="#1e1e1e"/><rect x="216" y="4" width="1" height="4" fill="#1e1e1e"/><rect x="232" y="4" width="1" height="4" fill="#1e1e1e"/><rect x="249" y="4" width="1" height="4" fill="#1e1e1e"/><rect x="266" y="4" width="1" height="4" fill="#1e1e1e"/><rect x="282" y="4" width="1" height="4" fill="#1e1e1e"/><rect x="299" y="4" width="1" height="4" fill="#1e1e1e"/><rect x="315" y="4" width="1" height="4" fill="#1e1e1e"/><rect x="332" y="4" width="1" height="4" fill="#1e1e1e"/><rect x="0" y="2" width="1" height="6" fill="#1e1e1e"/><rect x="33" y="2" width="1" height="6" fill="#1e1e1e"/><rect x="66" y="2" width="1" height="6" fill="#1e1e1e"/><rect x="100" y="2" width="1" height="6" fill="#1e1e1e"/><rect x="133" y="2" width="1" height="6" fill="#1e1e1e"/><rect x="166" y="2" width="1" height="6" fill="#1e1e1e"/><rect x="199" y="2" width="1" height="6" fill="#1e1e1e"/><rect x="232" y="2" width="1" height="6" fill="#1e1e1e"/><rect x="266" y="2" width="1" height="6" fill="#1e1e1e"/><rect x="299" y="2" width="1" height="6" fill="#1e1e1e"/><rect x="332" y="2" width="1" height="6" fill="#1e1e1e"/><rect x="331" y="1" width="1" height="7" fill="#1e1e1e"/></svg>
<div class="t" style="top:273.4px;font-size:9.6px;line-height:9.6px;color:#000;left:2165.5px;letter-spacing:1.2px;font-weight:bold;">0</div>
<div class="t" style="top:273.4px;font-size:9.6px;line-height:9.6px;color:#000;left:2198.7px;letter-spacing:1.2px;font-weight:bold;">0.1</div>
<div class="t" style="top:273.4px;font-size:9.6px;line-height:9.6px;color:#000;left:2231.9px;letter-spacing:1.2px;font-weight:bold;">0.2</div>
<div class="t" style="top:273.4px;font-size:9.6px;line-height:9.6px;color:#000;left:2265.1px;letter-spacing:1.2px;font-weight:bold;">0.3</div>
<div class="t" style="top:273.4px;font-size:9.6px;line-height:9.6px;color:#000;left:2298.3px;letter-spacing:1.2px;font-weight:bold;">0.4</div>
<div class="t" style="top:273.4px;font-size:9.6px;line-height:9.6px;color:#000;left:2331.5px;letter-spacing:1.2px;font-weight:bold;">0.5</div>
<div class="t" style="top:273.4px;font-size:9.6px;line-height:9.6px;color:#000;left:2364.7px;letter-spacing:1.2px;font-weight:bold;">0.6</div>
<div class="t" style="top:273.4px;font-size:9.6px;line-height:9.6px;color:#000;left:2397.9px;letter-spacing:1.2px;font-weight:bold;">0.7</div>
<div class="t" style="top:273.4px;font-size:9.6px;line-height:9.6px;color:#000;left:2431.1px;letter-spacing:1.2px;font-weight:bold;">0.8</div>
<div class="t" style="top:273.4px;font-size:9.6px;line-height:9.6px;color:#000;left:2464.3px;letter-spacing:1.2px;font-weight:bold;">0.9</div>
<div class="t" style="top:273.4px;font-size:9.6px;line-height:9.6px;color:#000;left:2439px;width:60px;text-align:right;letter-spacing:1.2px;font-weight:bold;">1</div>
<div style="left:2329.5px;top:264px;width:5px;height:10px;background:#6e5a28;border:1px solid #2a2414;"></div>
<div style="left:2500px;top:263.5px;width:18px;height:19px;background:#454545;border:1px solid #262626;border-radius:3px;"></div>
<svg style="left:2500px;top:263.5px;" width="18" height="19" viewBox="0 0 18 19"><path d="M3.5 15.5 Q6 8 8.5 8 Q11 8 12.5 13 Q14 15 17 3.5" stroke="#161616" stroke-width="1.8" fill="none"/></svg>
<div class="t" style="top:289.0px;font-size:11.2px;line-height:11.2px;color:#c8c8c8;left:1783.8000000000002px;width:300px;text-align:right;letter-spacing:0.8px;">Alpha Bias</div>
<div style="left:2089.5px;top:284.0px;width:72.5px;height:19px;background:#383838;border:1px solid #262626;border-radius:3px;"></div>
<div class="t" style="top:289.8px;font-size:11.5px;line-height:11.5px;color:#d0d0d0;left:2093.5px;letter-spacing:0.55px;">0.5</div>
<div style="left:2091.0px;top:301.0px;width:69.5px;height:1px;background:#c84a4a;"></div>
<div style="left:2164.5px;top:284.0px;width:72.5px;height:19px;background:#383838;border:1px solid #262626;border-radius:3px;"></div>
<div class="t" style="top:289.8px;font-size:11.5px;line-height:11.5px;color:#d0d0d0;left:2168.5px;letter-spacing:0.55px;">0.5</div>
<div style="left:2166.0px;top:301.0px;width:69.5px;height:1px;background:#4aa04a;"></div>
<div style="left:2239.5px;top:284.0px;width:72.5px;height:19px;background:#383838;border:1px solid #262626;border-radius:3px;"></div>
<div class="t" style="top:289.8px;font-size:11.5px;line-height:11.5px;color:#d0d0d0;left:2243.5px;letter-spacing:0.55px;">0.5</div>
<div style="left:2241.0px;top:301.0px;width:69.5px;height:1px;background:#4a6ad0;"></div>
<div style="left:2442.5px;top:284.0px;width:57px;height:19px;background:#484848;border:1px solid #262626;border-radius:3px;"></div>
<div style="left:2461px;top:284.5px;width:1px;height:18px;background:#222;"></div>
<div style="left:2480px;top:284.5px;width:1px;height:18px;background:#222;"></div>
<div style="left:2445px;top:288.0px;width:13px;height:13px;background:#d0d0d0;border:1px solid #000;"></div>
<div style="left:2464px;top:286.5px;width:13px;height:13px;background:radial-gradient(circle, rgba(235,235,235,0.95) 0%, rgba(235,235,235,0) 70%), conic-gradient(from 0deg, #ff50e0, #ff5050, #f0f050, #50ff50, #50f0f0, #5050ff, #ff50e0);border-radius:50%;"></div>
<div style="left:2481px;top:285.5px;width:16px;height:16px;background:#2a2a2a;border-radius:3px;"></div>
<div class="t" style="top:289.3px;font-size:11.5px;line-height:11.5px;color:#d0d0d0;left:2479.0px;width:20px;text-align:center;">3</div>
<div style="left:2500px;top:284.0px;width:18px;height:19px;background:#454545;border:1px solid #262626;border-radius:3px;"></div>
<svg style="left:2500px;top:284.0px;" width="18" height="19" viewBox="0 0 18 19"><path d="M3.5 15.5 Q6 8 8.5 8 Q11 8 12.5 13 Q14 15 17 3.5" stroke="#161616" stroke-width="1.8" fill="none"/></svg>
<div class="t" style="top:311.0px;font-size:11.2px;line-height:11.2px;color:#c8c8c8;left:1783.8000000000002px;width:300px;text-align:right;letter-spacing:0.8px;">Despill Bias</div>
<div style="left:2089.5px;top:306.0px;width:72.5px;height:19px;background:#383838;border:1px solid #262626;border-radius:3px;"></div>
<div class="t" style="top:311.8px;font-size:11.5px;line-height:11.5px;color:#7a7a7a;left:2093.5px;letter-spacing:0.55px;">0.5</div>
<div style="left:2091.0px;top:323.0px;width:69.5px;height:1px;background:#c84a4a;"></div>
<div style="left:2164.5px;top:306.0px;width:72.5px;height:19px;background:#383838;border:1px solid #262626;border-radius:3px;"></div>
<div class="t" style="top:311.8px;font-size:11.5px;line-height:11.5px;color:#7a7a7a;left:2168.5px;letter-spacing:0.55px;">0.5</div>
<div style="left:2166.0px;top:323.0px;width:69.5px;height:1px;background:#4aa04a;"></div>
<div style="left:2239.5px;top:306.0px;width:72.5px;height:19px;background:#383838;border:1px solid #262626;border-radius:3px;"></div>
<div class="t" style="top:311.8px;font-size:11.5px;line-height:11.5px;color:#7a7a7a;left:2243.5px;letter-spacing:0.55px;">0.5</div>
<div style="left:2241.0px;top:323.0px;width:69.5px;height:1px;background:#4a6ad0;"></div>
<div style="left:2442.5px;top:306.0px;width:57px;height:19px;background:#484848;border:1px solid #262626;border-radius:3px;"></div>
<div style="left:2461px;top:306.5px;width:1px;height:18px;background:#222;"></div>
<div style="left:2480px;top:306.5px;width:1px;height:18px;background:#222;"></div>
<div style="left:2445px;top:310.0px;width:13px;height:13px;background:#d0d0d0;border:1px solid #000;"></div>
<svg style="left:2464px;top:308.5px;" width="14" height="14" viewBox="0 0 14 14"><defs><radialGradient id="wd" cx="0.4" cy="0.35" r="0.7"><stop offset="0" stop-color="#e8e8e8"/><stop offset="1" stop-color="#9a9a9a"/></radialGradient></defs><circle cx="7" cy="7" r="6.5" fill="url(#wd)"/></svg>
<div style="left:2481px;top:307.5px;width:16px;height:16px;background:#2a2a2a;border-radius:3px;"></div>
<div class="t" style="top:311.3px;font-size:11.5px;line-height:11.5px;color:#777;left:2479.0px;width:20px;text-align:center;">3</div>
<div style="left:2500px;top:306.0px;width:18px;height:19px;background:#454545;border:1px solid #262626;border-radius:3px;"></div>
<svg style="left:2500px;top:306.0px;" width="18" height="19" viewBox="0 0 18 19"><path d="M3.5 15.5 Q6 8 8.5 8 Q11 8 12.5 13 Q14 15 17 3.5" stroke="#161616" stroke-width="1.8" fill="none"/></svg>
<div style="left:2089.5px;top:332px;width:15px;height:15px;background:#373737;border:1px solid #262626;border-radius:2px;"></div>
<svg style="left:2091.5px;top:334px;" width="11" height="11" viewBox="0 0 11 11"><path d="M1 1 L10 10 M10 1 L1 10" stroke="#e0e0e0" stroke-width="2.6"/></svg>
<div class="t" style="top:333.5px;font-size:11.2px;line-height:11.2px;color:#c8c8c8;left:2111px;letter-spacing:0.8px;">Use Alpha Bias for Despill</div>
<div class="t" style="top:355.0px;font-size:11.2px;line-height:11.2px;color:#c8c8c8;left:1783.8000000000002px;width:300px;text-align:right;letter-spacing:0.8px;">Screen PreBlur</div>
<div style="left:2089.5px;top:350.0px;width:72.5px;height:19px;background:#383838;border:1px solid #262626;border-radius:3px;"></div>
<div class="t" style="top:355.8px;font-size:11.5px;line-height:11.5px;color:#d0d0d0;left:2093.5px;letter-spacing:0.55px;">0</div>
<svg style="left:2166px;top:348px;" width="333" height="12" viewBox="0 0 333 12"><rect x="0" y="8" width="332" height="1" fill="#050505"/><rect x="0" y="9" width="332" height="1" fill="#4a4a4a"/><rect x="0" y="10" width="332" height="1" fill="#050505"/><rect x="0" y="4" width="1" height="4" fill="#1e1e1e"/><rect x="6" y="4" width="1" height="4" fill="#1e1e1e"/><rect x="12" y="4" width="1" height="4" fill="#1e1e1e"/><rect x="17" y="4" width="1" height="4" fill="#1e1e1e"/><rect x="23" y="4" width="1" height="4" fill="#1e1e1e"/><rect x="29" y="4" width="1" height="4" fill="#1e1e1e"/><rect x="35" y="4" width="1" height="4" fill="#1e1e1e"/><rect x="41" y="4" width="1" height="4" fill="#1e1e1e"/><rect x="46" y="4" width="1" height="4" fill="#1e1e1e"/><rect x="52" y="4" width="1" height="4" fill="#1e1e1e"/><rect x="58" y="4" width="1" height="4" fill="#1e1e1e"/><rect x="64" y="4" width="1" height="4" fill="#1e1e1e"/><rect x="69" y="4" width="1" height="4" fill="#1e1e1e"/><rect x="75" y="4" width="1" height="4" fill="#1e1e1e"/><rect x="81" y="4" width="1" height="4" fill="#1e1e1e"/><rect x="87" y="4" width="1" height="4" fill="#1e1e1e"/><rect x="93" y="4" width="1" height="4" fill="#1e1e1e"/><rect x="98" y="4" width="1" height="4" fill="#1e1e1e"/><rect x="104" y="4" width="1" height="4" fill="#1e1e1e"/><rect x="110" y="4" width="1" height="4" fill="#1e1e1e"/><rect x="116" y="4" width="1" height="4" fill="#1e1e1e"/><rect x="122" y="4" width="1" height="4" fill="#1e1e1e"/><rect x="127" y="4" width="1" height="4" fill="#1e1e1e"/><rect x="133" y="4" width="1" height="4" fill="#1e1e1e"/><rect x="139" y="4" width="1" height="4" fill="#1e1e1e"/><rect x="145" y="4" width="1" height="4" fill="#1e1e1e"/><rect x="151" y="4" width="1" height="4" fill="#1e1e1e"/><rect x="156" y="4" width="1" height="4" fill="#1e1e1e"/><rect x="162" y="4" width="1" height="4" fill="#1e1e1e"/><rect x="168" y="4" width="1" height="4" fill="#1e1e1e"/><rect x="174" y="4" width="1" height="4" fill="#1e1e1e"/><rect x="179" y="4" width="1" height="4" fill="#1e1e1e"/><rect x="185" y="4" width="1" height="4" fill="#1e1e1e"/><rect x="191" y="4" width="1" height="4" fill="#1e1e1e"/><rect x="197" y="4" width="1" height="4" fill="#1e1e1e"/><rect x="203" y="4" width="1" height="4" fill="#1e1e1e"/><rect x="208" y="4" width="1" height="4" fill="#1e1e1e"/><rect x="214" y="4" width="1" height="4" fill="#1e1e1e"/><rect x="220" y="4" width="1" height="4" fill="#1e1e1e"/><rect x="226" y="4" width="1" height="4" fill="#1e1e1e"/><rect x="232" y="4" width="1" height="4" fill="#1e1e1e"/><rect x="237" y="4" width="1" height="4" fill="#1e1e1e"/><rect x="243" y="4" width="1" height="4" fill="#1e1e1e"/><rect x="249" y="4" width="1" height="4" fill="#1e1e1e"/><rect x="255" y="4" width="1" height="4" fill="#1e1e1e"/><rect x="261" y="4" width="1" height="4" fill="#1e1e1e"/><rect x="266" y="4" width="1" height="4" fill="#1e1e1e"/><rect x="272" y="4" width="1" height="4" fill="#1e1e1e"/><rect x="278" y="4" width="1" height="4" fill="#1e1e1e"/><rect x="284" y="4" width="1" height="4" fill="#1e1e1e"/><rect x="289" y="4" width="1" height="4" fill="#1e1e1e"/><rect x="295" y="4" width="1" height="4" fill="#1e1e1e"/><rect x="301" y="4" width="1" height="4" fill="#1e1e1e"/><rect x="307" y="4" width="1" height="4" fill="#1e1e1e"/><rect x="313" y="4" width="1" height="4" fill="#1e1e1e"/><rect x="318" y="4" width="1" height="4" fill="#1e1e1e"/><rect x="324" y="4" width="1" height="4" fill="#1e1e1e"/><rect x="330" y="4" width="1" height="4" fill="#1e1e1e"/><rect x="0" y="2" width="1" height="6" fill="#1e1e1e"/><rect x="29" y="2" width="1" height="6" fill="#1e1e1e"/><rect x="58" y="2" width="1" height="6" fill="#1e1e1e"/><rect x="87" y="2" width="1" height="6" fill="#1e1e1e"/><rect x="116" y="2" width="1" height="6" fill="#1e1e1e"/><rect x="145" y="2" width="1" height="6" fill="#1e1e1e"/><rect x="174" y="2" width="1" height="6" fill="#1e1e1e"/><rect x="203" y="2" width="1" height="6" fill="#1e1e1e"/><rect x="232" y="2" width="1" height="6" fill="#1e1e1e"/><rect x="261" y="2" width="1" height="6" fill="#1e1e1e"/><rect x="289" y="2" width="1" height="6" fill="#1e1e1e"/><rect x="331" y="1" width="1" height="7" fill="#1e1e1e"/></svg>
<div class="t" style="top:359.9px;font-size:9.6px;line-height:9.6px;color:#000;left:2165.5px;letter-spacing:1.2px;font-weight:bold;">0</div>
<div class="t" style="top:359.9px;font-size:9.6px;line-height:9.6px;color:#000;left:2223.3962053571427px;letter-spacing:1.2px;font-weight:bold;">10</div>
<div class="t" style="top:359.9px;font-size:9.6px;line-height:9.6px;color:#000;left:2281.292410714286px;letter-spacing:1.2px;font-weight:bold;">20</div>
<div class="t" style="top:359.9px;font-size:9.6px;line-height:9.6px;color:#000;left:2339.1886160714284px;letter-spacing:1.2px;font-weight:bold;">30</div>
<div class="t" style="top:359.9px;font-size:9.6px;line-height:9.6px;color:#000;left:2397.0848214285716px;letter-spacing:1.2px;font-weight:bold;">40</div>
<div class="t" style="top:359.9px;font-size:9.6px;line-height:9.6px;color:#000;left:2454.981026785714px;letter-spacing:1.2px;font-weight:bold;">50</div>
<div class="t" style="top:359.9px;font-size:9.6px;line-height:9.6px;color:#000;left:2439px;width:60px;text-align:right;letter-spacing:1.2px;font-weight:bold;">57.344</div>
<div style="left:2163.5px;top:350.5px;width:5px;height:10px;background:#6e5a28;border:1px solid #2a2414;"></div>
<div style="left:2500px;top:350.0px;width:18px;height:19px;background:#454545;border:1px solid #262626;border-radius:3px;"></div>
<svg style="left:2500px;top:350.0px;" width="18" height="19" viewBox="0 0 18 19"><path d="M3.5 15.5 Q6 8 8.5 8 Q11 8 12.5 13 Q14 15 17 3.5" stroke="#161616" stroke-width="1.8" fill="none"/></svg>
<svg style="left:1956.5px;top:374px;" width="9" height="7" viewBox="0 0 9 7"><path d="M0 0 H9 L4.5 7 Z" fill="#0e0e0e"/></svg>
<div class="t" style="top:375.5px;font-size:11.2px;line-height:11.2px;color:#c8c8c8;left:1976px;letter-spacing:0.8px;">Screen Matte</div>
<div class="t" style="top:397.0px;font-size:11.2px;line-height:11.2px;color:#c8c8c8;left:1783.8000000000002px;width:300px;text-align:right;letter-spacing:0.8px;">Clip Black</div>
<div style="left:2089.5px;top:392.0px;width:72.5px;height:19px;background:#383838;border:1px solid #262626;border-radius:3px;"></div>
<div class="t" style="top:397.8px;font-size:11.5px;line-height:11.5px;color:#d0d0d0;left:2093.5px;letter-spacing:0.55px;">0</div>
<svg style="left:2166px;top:390px;" width="333" height="12" viewBox="0 0 333 12"><rect x="0" y="8" width="332" height="1" fill="#050505"/><rect x="0" y="9" width="332" height="1" fill="#4a4a4a"/><rect x="0" y="10" width="332" height="1" fill="#050505"/><rect x="0" y="4" width="1" height="4" fill="#1e1e1e"/><rect x="17" y="4" width="1" height="4" fill="#1e1e1e"/><rect x="33" y="4" width="1" height="4" fill="#1e1e1e"/><rect x="50" y="4" width="1" height="4" fill="#1e1e1e"/><rect x="66" y="4" width="1" height="4" fill="#1e1e1e"/><rect x="83" y="4" width="1" height="4" fill="#1e1e1e"/><rect x="100" y="4" width="1" height="4" fill="#1e1e1e"/><rect x="116" y="4" width="1" height="4" fill="#1e1e1e"/><rect x="133" y="4" width="1" height="4" fill="#1e1e1e"/><rect x="149" y="4" width="1" height="4" fill="#1e1e1e"/><rect x="166" y="4" width="1" height="4" fill="#1e1e1e"/><rect x="183" y="4" width="1" height="4" fill="#1e1e1e"/><rect x="199" y="4" width="1" height="4" fill="#1e1e1e"/><rect x="216" y="4" width="1" height="4" fill="#1e1e1e"/><rect x="232" y="4" width="1" height="4" fill="#1e1e1e"/><rect x="249" y="4" width="1" height="4" fill="#1e1e1e"/><rect x="266" y="4" width="1" height="4" fill="#1e1e1e"/><rect x="282" y="4" width="1" height="4" fill="#1e1e1e"/><rect x="299" y="4" width="1" height="4" fill="#1e1e1e"/><rect x="315" y="4" width="1" height="4" fill="#1e1e1e"/><rect x="332" y="4" width="1" height="4" fill="#1e1e1e"/><rect x="0" y="2" width="1" height="6" fill="#1e1e1e"/><rect x="33" y="2" width="1" height="6" fill="#1e1e1e"/><rect x="66" y="2" width="1" height="6" fill="#1e1e1e"/><rect x="100" y="2" width="1" height="6" fill="#1e1e1e"/><rect x="133" y="2" width="1" height="6" fill="#1e1e1e"/><rect x="166" y="2" width="1" height="6" fill="#1e1e1e"/><rect x="199" y="2" width="1" height="6" fill="#1e1e1e"/><rect x="232" y="2" width="1" height="6" fill="#1e1e1e"/><rect x="266" y="2" width="1" height="6" fill="#1e1e1e"/><rect x="299" y="2" width="1" height="6" fill="#1e1e1e"/><rect x="332" y="2" width="1" height="6" fill="#1e1e1e"/><rect x="331" y="1" width="1" height="7" fill="#1e1e1e"/></svg>
<div class="t" style="top:401.9px;font-size:9.6px;line-height:9.6px;color:#000;left:2165.5px;letter-spacing:1.2px;font-weight:bold;">0</div>
<div class="t" style="top:401.9px;font-size:9.6px;line-height:9.6px;color:#000;left:2198.7px;letter-spacing:1.2px;font-weight:bold;">0.1</div>
<div class="t" style="top:401.9px;font-size:9.6px;line-height:9.6px;color:#000;left:2231.9px;letter-spacing:1.2px;font-weight:bold;">0.2</div>
<div class="t" style="top:401.9px;font-size:9.6px;line-height:9.6px;color:#000;left:2265.1px;letter-spacing:1.2px;font-weight:bold;">0.3</div>
<div class="t" style="top:401.9px;font-size:9.6px;line-height:9.6px;color:#000;left:2298.3px;letter-spacing:1.2px;font-weight:bold;">0.4</div>
<div class="t" style="top:401.9px;font-size:9.6px;line-height:9.6px;color:#000;left:2331.5px;letter-spacing:1.2px;font-weight:bold;">0.5</div>
<div class="t" style="top:401.9px;font-size:9.6px;line-height:9.6px;color:#000;left:2364.7px;letter-spacing:1.2px;font-weight:bold;">0.6</div>
<div class="t" style="top:401.9px;font-size:9.6px;line-height:9.6px;color:#000;left:2397.9px;letter-spacing:1.2px;font-weight:bold;">0.7</div>
<div class="t" style="top:401.9px;font-size:9.6px;line-height:9.6px;color:#000;left:2431.1px;letter-spacing:1.2px;font-weight:bold;">0.8</div>
<div class="t" style="top:401.9px;font-size:9.6px;line-height:9.6px;color:#000;left:2464.3px;letter-spacing:1.2px;font-weight:bold;">0.9</div>
<div class="t" style="top:401.9px;font-size:9.6px;line-height:9.6px;color:#000;left:2439px;width:60px;text-align:right;letter-spacing:1.2px;font-weight:bold;">1</div>
<div style="left:2163.5px;top:392.5px;width:5px;height:10px;background:#6e5a28;border:1px solid #2a2414;"></div>
<div style="left:2500px;top:392.0px;width:18px;height:19px;background:#454545;border:1px solid #262626;border-radius:3px;"></div>
<svg style="left:2500px;top:392.0px;" width="18" height="19" viewBox="0 0 18 19"><path d="M3.5 15.5 Q6 8 8.5 8 Q11 8 12.5 13 Q14 15 17 3.5" stroke="#161616" stroke-width="1.8" fill="none"/></svg>
<div class="t" style="top:419.0px;font-size:11.2px;line-height:11.2px;color:#c8c8c8;left:1783.8000000000002px;width:300px;text-align:right;letter-spacing:0.8px;">Clip White</div>
<div style="left:2089.5px;top:414.0px;width:72.5px;height:19px;background:#383838;border:1px solid #262626;border-radius:3px;"></div>
<div class="t" style="top:419.8px;font-size:11.5px;line-height:11.5px;color:#d0d0d0;left:2093.5px;letter-spacing:0.55px;">0.63</div>
<svg style="left:2166px;top:412px;" width="333" height="12" viewBox="0 0 333 12"><rect x="0" y="8" width="332" height="1" fill="#050505"/><rect x="0" y="9" width="332" height="1" fill="#4a4a4a"/><rect x="0" y="10" width="332" height="1" fill="#050505"/><rect x="0" y="4" width="1" height="4" fill="#1e1e1e"/><rect x="17" y="4" width="1" height="4" fill="#1e1e1e"/><rect x="33" y="4" width="1" height="4" fill="#1e1e1e"/><rect x="50" y="4" width="1" height="4" fill="#1e1e1e"/><rect x="66" y="4" width="1" height="4" fill="#1e1e1e"/><rect x="83" y="4" width="1" height="4" fill="#1e1e1e"/><rect x="100" y="4" width="1" height="4" fill="#1e1e1e"/><rect x="116" y="4" width="1" height="4" fill="#1e1e1e"/><rect x="133" y="4" width="1" height="4" fill="#1e1e1e"/><rect x="149" y="4" width="1" height="4" fill="#1e1e1e"/><rect x="166" y="4" width="1" height="4" fill="#1e1e1e"/><rect x="183" y="4" width="1" height="4" fill="#1e1e1e"/><rect x="199" y="4" width="1" height="4" fill="#1e1e1e"/><rect x="216" y="4" width="1" height="4" fill="#1e1e1e"/><rect x="232" y="4" width="1" height="4" fill="#1e1e1e"/><rect x="249" y="4" width="1" height="4" fill="#1e1e1e"/><rect x="266" y="4" width="1" height="4" fill="#1e1e1e"/><rect x="282" y="4" width="1" height="4" fill="#1e1e1e"/><rect x="299" y="4" width="1" height="4" fill="#1e1e1e"/><rect x="315" y="4" width="1" height="4" fill="#1e1e1e"/><rect x="332" y="4" width="1" height="4" fill="#1e1e1e"/><rect x="0" y="2" width="1" height="6" fill="#1e1e1e"/><rect x="33" y="2" width="1" height="6" fill="#1e1e1e"/><rect x="66" y="2" width="1" height="6" fill="#1e1e1e"/><rect x="100" y="2" width="1" height="6" fill="#1e1e1e"/><rect x="133" y="2" width="1" height="6" fill="#1e1e1e"/><rect x="166" y="2" width="1" height="6" fill="#1e1e1e"/><rect x="199" y="2" width="1" height="6" fill="#1e1e1e"/><rect x="232" y="2" width="1" height="6" fill="#1e1e1e"/><rect x="266" y="2" width="1" height="6" fill="#1e1e1e"/><rect x="299" y="2" width="1" height="6" fill="#1e1e1e"/><rect x="332" y="2" width="1" height="6" fill="#1e1e1e"/><rect x="331" y="1" width="1" height="7" fill="#1e1e1e"/></svg>
<div class="t" style="top:423.9px;font-size:9.6px;line-height:9.6px;color:#000;left:2165.5px;letter-spacing:1.2px;font-weight:bold;">0</div>
<div class="t" style="top:423.9px;font-size:9.6px;line-height:9.6px;color:#000;left:2198.7px;letter-spacing:1.2px;font-weight:bold;">0.1</div>
<div class="t" style="top:423.9px;font-size:9.6px;line-height:9.6px;color:#000;left:2231.9px;letter-spacing:1.2px;font-weight:bold;">0.2</div>
<div class="t" style="top:423.9px;font-size:9.6px;line-height:9.6px;color:#000;left:2265.1px;letter-spacing:1.2px;font-weight:bold;">0.3</div>
<div class="t" style="top:423.9px;font-size:9.6px;line-height:9.6px;color:#000;left:2298.3px;letter-spacing:1.2px;font-weight:bold;">0.4</div>
<div class="t" style="top:423.9px;font-size:9.6px;line-height:9.6px;color:#000;left:2331.5px;letter-spacing:1.2px;font-weight:bold;">0.5</div>
<div class="t" style="top:423.9px;font-size:9.6px;line-height:9.6px;color:#000;left:2364.7px;letter-spacing:1.2px;font-weight:bold;">0.6</div>
<div class="t" style="top:423.9px;font-size:9.6px;line-height:9.6px;color:#000;left:2397.9px;letter-spacing:1.2px;font-weight:bold;">0.7</div>
<div class="t" style="top:423.9px;font-size:9.6px;line-height:9.6px;color:#000;left:2431.1px;letter-spacing:1.2px;font-weight:bold;">0.8</div>
<div class="t" style="top:423.9px;font-size:9.6px;line-height:9.6px;color:#000;left:2464.3px;letter-spacing:1.2px;font-weight:bold;">0.9</div>
<div class="t" style="top:423.9px;font-size:9.6px;line-height:9.6px;color:#000;left:2439px;width:60px;text-align:right;letter-spacing:1.2px;font-weight:bold;">1</div>
<div style="left:2372.66px;top:414.5px;width:5px;height:10px;background:#6e5a28;border:1px solid #2a2414;"></div>
<div style="left:2500px;top:414.0px;width:18px;height:19px;background:#454545;border:1px solid #262626;border-radius:3px;"></div>
<svg style="left:2500px;top:414.0px;" width="18" height="19" viewBox="0 0 18 19"><path d="M3.5 15.5 Q6 8 8.5 8 Q11 8 12.5 13 Q14 15 17 3.5" stroke="#161616" stroke-width="1.8" fill="none"/></svg>
<div class="t" style="top:441.0px;font-size:11.2px;line-height:11.2px;color:#c8c8c8;left:1783.8000000000002px;width:300px;text-align:right;letter-spacing:0.8px;">Clip Rollback</div>
<div style="left:2089.5px;top:436.0px;width:72.5px;height:19px;background:#383838;border:1px solid #262626;border-radius:3px;"></div>
<div class="t" style="top:441.8px;font-size:11.5px;line-height:11.5px;color:#d0d0d0;left:2093.5px;letter-spacing:0.55px;">0</div>
<svg style="left:2166px;top:434px;" width="333" height="12" viewBox="0 0 333 12"><rect x="0" y="8" width="332" height="1" fill="#050505"/><rect x="0" y="9" width="332" height="1" fill="#4a4a4a"/><rect x="0" y="10" width="332" height="1" fill="#050505"/><rect x="0" y="4" width="1" height="4" fill="#1e1e1e"/><rect x="6" y="4" width="1" height="4" fill="#1e1e1e"/><rect x="12" y="4" width="1" height="4" fill="#1e1e1e"/><rect x="17" y="4" width="1" height="4" fill="#1e1e1e"/><rect x="23" y="4" width="1" height="4" fill="#1e1e1e"/><rect x="29" y="4" width="1" height="4" fill="#1e1e1e"/><rect x="35" y="4" width="1" height="4" fill="#1e1e1e"/><rect x="41" y="4" width="1" height="4" fill="#1e1e1e"/><rect x="46" y="4" width="1" height="4" fill="#1e1e1e"/><rect x="52" y="4" width="1" height="4" fill="#1e1e1e"/><rect x="58" y="4" width="1" height="4" fill="#1e1e1e"/><rect x="64" y="4" width="1" height="4" fill="#1e1e1e"/><rect x="69" y="4" width="1" height="4" fill="#1e1e1e"/><rect x="75" y="4" width="1" height="4" fill="#1e1e1e"/><rect x="81" y="4" width="1" height="4" fill="#1e1e1e"/><rect x="87" y="4" width="1" height="4" fill="#1e1e1e"/><rect x="93" y="4" width="1" height="4" fill="#1e1e1e"/><rect x="98" y="4" width="1" height="4" fill="#1e1e1e"/><rect x="104" y="4" width="1" height="4" fill="#1e1e1e"/><rect x="110" y="4" width="1" height="4" fill="#1e1e1e"/><rect x="116" y="4" width="1" height="4" fill="#1e1e1e"/><rect x="122" y="4" width="1" height="4" fill="#1e1e1e"/><rect x="127" y="4" width="1" height="4" fill="#1e1e1e"/><rect x="133" y="4" width="1" height="4" fill="#1e1e1e"/><rect x="139" y="4" width="1" height="4" fill="#1e1e1e"/><rect x="145" y="4" width="1" height="4" fill="#1e1e1e"/><rect x="151" y="4" width="1" height="4" fill="#1e1e1e"/><rect x="156" y="4" width="1" height="4" fill="#1e1e1e"/><rect x="162" y="4" width="1" height="4" fill="#1e1e1e"/><rect x="168" y="4" width="1" height="4" fill="#1e1e1e"/><rect x="174" y="4" width="1" height="4" fill="#1e1e1e"/><rect x="179" y="4" width="1" height="4" fill="#1e1e1e"/><rect x="185" y="4" width="1" height="4" fill="#1e1e1e"/><rect x="191" y="4" width="1" height="4" fill="#1e1e1e"/><rect x="197" y="4" width="1" height="4" fill="#1e1e1e"/><rect x="203" y="4" width="1" height="4" fill="#1e1e1e"/><rect x="208" y="4" width="1" height="4" fill="#1e1e1e"/><rect x="214" y="4" width="1" height="4" fill="#1e1e1e"/><rect x="220" y="4" width="1" height="4" fill="#1e1e1e"/><rect x="226" y="4" width="1" height="4" fill="#1e1e1e"/><rect x="232" y="4" width="1" height="4" fill="#1e1e1e"/><rect x="237" y="4" width="1" height="4" fill="#1e1e1e"/><rect x="243" y="4" width="1" height="4" fill="#1e1e1e"/><rect x="249" y="4" width="1" height="4" fill="#1e1e1e"/><rect x="255" y="4" width="1" height="4" fill="#1e1e1e"/><rect x="261" y="4" width="1" height="4" fill="#1e1e1e"/><rect x="266" y="4" width="1" height="4" fill="#1e1e1e"/><rect x="272" y="4" width="1" height="4" fill="#1e1e1e"/><rect x="278" y="4" width="1" height="4" fill="#1e1e1e"/><rect x="284" y="4" width="1" height="4" fill="#1e1e1e"/><rect x="289" y="4" width="1" height="4" fill="#1e1e1e"/><rect x="295" y="4" width="1" height="4" fill="#1e1e1e"/><rect x="301" y="4" width="1" height="4" fill="#1e1e1e"/><rect x="307" y="4" width="1" height="4" fill="#1e1e1e"/><rect x="313" y="4" width="1" height="4" fill="#1e1e1e"/><rect x="318" y="4" width="1" height="4" fill="#1e1e1e"/><rect x="324" y="4" width="1" height="4" fill="#1e1e1e"/><rect x="330" y="4" width="1" height="4" fill="#1e1e1e"/><rect x="0" y="2" width="1" height="6" fill="#1e1e1e"/><rect x="29" y="2" width="1" height="6" fill="#1e1e1e"/><rect x="58" y="2" width="1" height="6" fill="#1e1e1e"/><rect x="87" y="2" width="1" height="6" fill="#1e1e1e"/><rect x="116" y="2" width="1" height="6" fill="#1e1e1e"/><rect x="145" y="2" width="1" height="6" fill="#1e1e1e"/><rect x="174" y="2" width="1" height="6" fill="#1e1e1e"/><rect x="203" y="2" width="1" height="6" fill="#1e1e1e"/><rect x="232" y="2" width="1" height="6" fill="#1e1e1e"/><rect x="261" y="2" width="1" height="6" fill="#1e1e1e"/><rect x="289" y="2" width="1" height="6" fill="#1e1e1e"/><rect x="331" y="1" width="1" height="7" fill="#1e1e1e"/></svg>
<div class="t" style="top:445.9px;font-size:9.6px;line-height:9.6px;color:#000;left:2165.5px;letter-spacing:1.2px;font-weight:bold;">0</div>
<div class="t" style="top:445.9px;font-size:9.6px;line-height:9.6px;color:#000;left:2223.3962053571427px;letter-spacing:1.2px;font-weight:bold;">10</div>
<div class="t" style="top:445.9px;font-size:9.6px;line-height:9.6px;color:#000;left:2281.292410714286px;letter-spacing:1.2px;font-weight:bold;">20</div>
<div class="t" style="top:445.9px;font-size:9.6px;line-height:9.6px;color:#000;left:2339.1886160714284px;letter-spacing:1.2px;font-weight:bold;">30</div>
<div class="t" style="top:445.9px;font-size:9.6px;line-height:9.6px;color:#000;left:2397.0848214285716px;letter-spacing:1.2px;font-weight:bold;">40</div>
<div class="t" style="top:445.9px;font-size:9.6px;line-height:9.6px;color:#000;left:2454.981026785714px;letter-spacing:1.2px;font-weight:bold;">50</div>
<div class="t" style="top:445.9px;font-size:9.6px;line-height:9.6px;color:#000;left:2439px;width:60px;text-align:right;letter-spacing:1.2px;font-weight:bold;">57.344</div>
<div style="left:2163.5px;top:436.5px;width:5px;height:10px;background:#6e5a28;border:1px solid #2a2414;"></div>
<div style="left:2500px;top:436.0px;width:18px;height:19px;background:#454545;border:1px solid #262626;border-radius:3px;"></div>
<svg style="left:2500px;top:436.0px;" width="18" height="19" viewBox="0 0 18 19"><path d="M3.5 15.5 Q6 8 8.5 8 Q11 8 12.5 13 Q14 15 17 3.5" stroke="#161616" stroke-width="1.8" fill="none"/></svg>
<div class="t" style="top:463.0px;font-size:11.2px;line-height:11.2px;color:#c8c8c8;left:1783.8000000000002px;width:300px;text-align:right;letter-spacing:0.8px;">Screen Dilate</div>
<div style="left:2089.5px;top:458.0px;width:72.5px;height:19px;background:#383838;border:1px solid #262626;border-radius:3px;"></div>
<div class="t" style="top:463.8px;font-size:11.5px;line-height:11.5px;color:#d0d0d0;left:2093.5px;letter-spacing:0.55px;">0</div>
<svg style="left:2166px;top:456px;" width="333" height="12" viewBox="0 0 333 12"><rect x="0" y="8" width="332" height="1" fill="#050505"/><rect x="0" y="9" width="332" height="1" fill="#4a4a4a"/><rect x="0" y="10" width="332" height="1" fill="#050505"/><rect x="7" y="4" width="1" height="4" fill="#1e1e1e"/><rect x="21" y="4" width="1" height="4" fill="#1e1e1e"/><rect x="36" y="4" width="1" height="4" fill="#1e1e1e"/><rect x="50" y="4" width="1" height="4" fill="#1e1e1e"/><rect x="65" y="4" width="1" height="4" fill="#1e1e1e"/><rect x="79" y="4" width="1" height="4" fill="#1e1e1e"/><rect x="94" y="4" width="1" height="4" fill="#1e1e1e"/><rect x="108" y="4" width="1" height="4" fill="#1e1e1e"/><rect x="123" y="4" width="1" height="4" fill="#1e1e1e"/><rect x="137" y="4" width="1" height="4" fill="#1e1e1e"/><rect x="152" y="4" width="1" height="4" fill="#1e1e1e"/><rect x="166" y="4" width="1" height="4" fill="#1e1e1e"/><rect x="180" y="4" width="1" height="4" fill="#1e1e1e"/><rect x="195" y="4" width="1" height="4" fill="#1e1e1e"/><rect x="209" y="4" width="1" height="4" fill="#1e1e1e"/><rect x="224" y="4" width="1" height="4" fill="#1e1e1e"/><rect x="238" y="4" width="1" height="4" fill="#1e1e1e"/><rect x="253" y="4" width="1" height="4" fill="#1e1e1e"/><rect x="267" y="4" width="1" height="4" fill="#1e1e1e"/><rect x="282" y="4" width="1" height="4" fill="#1e1e1e"/><rect x="296" y="4" width="1" height="4" fill="#1e1e1e"/><rect x="311" y="4" width="1" height="4" fill="#1e1e1e"/><rect x="325" y="4" width="1" height="4" fill="#1e1e1e"/><rect x="21" y="2" width="1" height="6" fill="#1e1e1e"/><rect x="50" y="2" width="1" height="6" fill="#1e1e1e"/><rect x="79" y="2" width="1" height="6" fill="#1e1e1e"/><rect x="108" y="2" width="1" height="6" fill="#1e1e1e"/><rect x="137" y="2" width="1" height="6" fill="#1e1e1e"/><rect x="166" y="2" width="1" height="6" fill="#1e1e1e"/><rect x="195" y="2" width="1" height="6" fill="#1e1e1e"/><rect x="224" y="2" width="1" height="6" fill="#1e1e1e"/><rect x="253" y="2" width="1" height="6" fill="#1e1e1e"/><rect x="282" y="2" width="1" height="6" fill="#1e1e1e"/><rect x="311" y="2" width="1" height="6" fill="#1e1e1e"/><rect x="331" y="1" width="1" height="7" fill="#1e1e1e"/></svg>
<div class="t" style="top:467.9px;font-size:9.6px;line-height:9.6px;color:#000;left:2165.5px;letter-spacing:1.2px;font-weight:bold;">-57.344</div>
<div class="t" style="top:467.9px;font-size:9.6px;line-height:9.6px;color:#000;left:2186.7594866071427px;letter-spacing:1.2px;font-weight:bold;">-50</div>
<div class="t" style="top:467.9px;font-size:9.6px;line-height:9.6px;color:#000;left:2215.707589285714px;letter-spacing:1.2px;font-weight:bold;">-40</div>
<div class="t" style="top:467.9px;font-size:9.6px;line-height:9.6px;color:#000;left:2244.655691964286px;letter-spacing:1.2px;font-weight:bold;">-30</div>
<div class="t" style="top:467.9px;font-size:9.6px;line-height:9.6px;color:#000;left:2273.6037946428573px;letter-spacing:1.2px;font-weight:bold;">-20</div>
<div class="t" style="top:467.9px;font-size:9.6px;line-height:9.6px;color:#000;left:2302.5518973214284px;letter-spacing:1.2px;font-weight:bold;">-10</div>
<div class="t" style="top:467.9px;font-size:9.6px;line-height:9.6px;color:#000;left:2331.5px;letter-spacing:1.2px;font-weight:bold;">0</div>
<div class="t" style="top:467.9px;font-size:9.6px;line-height:9.6px;color:#000;left:2360.4481026785716px;letter-spacing:1.2px;font-weight:bold;">10</div>
<div class="t" style="top:467.9px;font-size:9.6px;line-height:9.6px;color:#000;left:2389.3962053571427px;letter-spacing:1.2px;font-weight:bold;">20</div>
<div class="t" style="top:467.9px;font-size:9.6px;line-height:9.6px;color:#000;left:2418.344308035714px;letter-spacing:1.2px;font-weight:bold;">30</div>
<div class="t" style="top:467.9px;font-size:9.6px;line-height:9.6px;color:#000;left:2447.292410714286px;letter-spacing:1.2px;font-weight:bold;">40</div>
<div class="t" style="top:467.9px;font-size:9.6px;line-height:9.6px;color:#000;left:2476.240513392857px;letter-spacing:1.2px;font-weight:bold;">50</div>
<div class="t" style="top:467.9px;font-size:9.6px;line-height:9.6px;color:#000;left:2439px;width:60px;text-align:right;letter-spacing:1.2px;font-weight:bold;">57.344</div>
<div style="left:2329.5px;top:458.5px;width:5px;height:10px;background:#6e5a28;border:1px solid #2a2414;"></div>
<div style="left:2500px;top:458.0px;width:18px;height:19px;background:#454545;border:1px solid #262626;border-radius:3px;"></div>
<svg style="left:2500px;top:458.0px;" width="18" height="19" viewBox="0 0 18 19"><path d="M3.5 15.5 Q6 8 8.5 8 Q11 8 12.5 13 Q14 15 17 3.5" stroke="#161616" stroke-width="1.8" fill="none"/></svg>
<div class="t" style="top:485.0px;font-size:11.2px;line-height:11.2px;color:#c8c8c8;left:1783.8000000000002px;width:300px;text-align:right;letter-spacing:0.8px;">Screen Softness</div>
<div style="left:2089.5px;top:480.0px;width:72.5px;height:19px;background:#383838;border:1px solid #262626;border-radius:3px;"></div>
<div class="t" style="top:485.8px;font-size:11.5px;line-height:11.5px;color:#d0d0d0;left:2093.5px;letter-spacing:0.55px;">0</div>
<svg style="left:2166px;top:478px;" width="333" height="12" viewBox="0 0 333 12"><rect x="0" y="8" width="332" height="1" fill="#050505"/><rect x="0" y="9" width="332" height="1" fill="#4a4a4a"/><rect x="0" y="10" width="332" height="1" fill="#050505"/><rect x="0" y="4" width="1" height="4" fill="#1e1e1e"/><rect x="6" y="4" width="1" height="4" fill="#1e1e1e"/><rect x="12" y="4" width="1" height="4" fill="#1e1e1e"/><rect x="17" y="4" width="1" height="4" fill="#1e1e1e"/><rect x="23" y="4" width="1" height="4" fill="#1e1e1e"/><rect x="29" y="4" width="1" height="4" fill="#1e1e1e"/><rect x="35" y="4" width="1" height="4" fill="#1e1e1e"/><rect x="41" y="4" width="1" height="4" fill="#1e1e1e"/><rect x="46" y="4" width="1" height="4" fill="#1e1e1e"/><rect x="52" y="4" width="1" height="4" fill="#1e1e1e"/><rect x="58" y="4" width="1" height="4" fill="#1e1e1e"/><rect x="64" y="4" width="1" height="4" fill="#1e1e1e"/><rect x="69" y="4" width="1" height="4" fill="#1e1e1e"/><rect x="75" y="4" width="1" height="4" fill="#1e1e1e"/><rect x="81" y="4" width="1" height="4" fill="#1e1e1e"/><rect x="87" y="4" width="1" height="4" fill="#1e1e1e"/><rect x="93" y="4" width="1" height="4" fill="#1e1e1e"/><rect x="98" y="4" width="1" height="4" fill="#1e1e1e"/><rect x="104" y="4" width="1" height="4" fill="#1e1e1e"/><rect x="110" y="4" width="1" height="4" fill="#1e1e1e"/><rect x="116" y="4" width="1" height="4" fill="#1e1e1e"/><rect x="122" y="4" width="1" height="4" fill="#1e1e1e"/><rect x="127" y="4" width="1" height="4" fill="#1e1e1e"/><rect x="133" y="4" width="1" height="4" fill="#1e1e1e"/><rect x="139" y="4" width="1" height="4" fill="#1e1e1e"/><rect x="145" y="4" width="1" height="4" fill="#1e1e1e"/><rect x="151" y="4" width="1" height="4" fill="#1e1e1e"/><rect x="156" y="4" width="1" height="4" fill="#1e1e1e"/><rect x="162" y="4" width="1" height="4" fill="#1e1e1e"/><rect x="168" y="4" width="1" height="4" fill="#1e1e1e"/><rect x="174" y="4" width="1" height="4" fill="#1e1e1e"/><rect x="179" y="4" width="1" height="4" fill="#1e1e1e"/><rect x="185" y="4" width="1" height="4" fill="#1e1e1e"/><rect x="191" y="4" width="1" height="4" fill="#1e1e1e"/><rect x="197" y="4" width="1" height="4" fill="#1e1e1e"/><rect x="203" y="4" width="1" height="4" fill="#1e1e1e"/><rect x="208" y="4" width="1" height="4" fill="#1e1e1e"/><rect x="214" y="4" width="1" height="4" fill="#1e1e1e"/><rect x="220" y="4" width="1" height="4" fill="#1e1e1e"/><rect x="226" y="4" width="1" height="4" fill="#1e1e1e"/><rect x="232" y="4" width="1" height="4" fill="#1e1e1e"/><rect x="237" y="4" width="1" height="4" fill="#1e1e1e"/><rect x="243" y="4" width="1" height="4" fill="#1e1e1e"/><rect x="249" y="4" width="1" height="4" fill="#1e1e1e"/><rect x="255" y="4" width="1" height="4" fill="#1e1e1e"/><rect x="261" y="4" width="1" height="4" fill="#1e1e1e"/><rect x="266" y="4" width="1" height="4" fill="#1e1e1e"/><rect x="272" y="4" width="1" height="4" fill="#1e1e1e"/><rect x="278" y="4" width="1" height="4" fill="#1e1e1e"/><rect x="284" y="4" width="1" height="4" fill="#1e1e1e"/><rect x="289" y="4" width="1" height="4" fill="#1e1e1e"/><rect x="295" y="4" width="1" height="4" fill="#1e1e1e"/><rect x="301" y="4" width="1" height="4" fill="#1e1e1e"/><rect x="307" y="4" width="1" height="4" fill="#1e1e1e"/><rect x="313" y="4" width="1" height="4" fill="#1e1e1e"/><rect x="318" y="4" width="1" height="4" fill="#1e1e1e"/><rect x="324" y="4" width="1" height="4" fill="#1e1e1e"/><rect x="330" y="4" width="1" height="4" fill="#1e1e1e"/><rect x="0" y="2" width="1" height="6" fill="#1e1e1e"/><rect x="29" y="2" width="1" height="6" fill="#1e1e1e"/><rect x="58" y="2" width="1" height="6" fill="#1e1e1e"/><rect x="87" y="2" width="1" height="6" fill="#1e1e1e"/><rect x="116" y="2" width="1" height="6" fill="#1e1e1e"/><rect x="145" y="2" width="1" height="6" fill="#1e1e1e"/><rect x="174" y="2" width="1" height="6" fill="#1e1e1e"/><rect x="203" y="2" width="1" height="6" fill="#1e1e1e"/><rect x="232" y="2" width="1" height="6" fill="#1e1e1e"/><rect x="261" y="2" width="1" height="6" fill="#1e1e1e"/><rect x="289" y="2" width="1" height="6" fill="#1e1e1e"/><rect x="331" y="1" width="1" height="7" fill="#1e1e1e"/></svg>
<div class="t" style="top:489.9px;font-size:9.6px;line-height:9.6px;color:#000;left:2165.5px;letter-spacing:1.2px;font-weight:bold;">0</div>
<div class="t" style="top:489.9px;font-size:9.6px;line-height:9.6px;color:#000;left:2223.3962053571427px;letter-spacing:1.2px;font-weight:bold;">10</div>
<div class="t" style="top:489.9px;font-size:9.6px;line-height:9.6px;color:#000;left:2281.292410714286px;letter-spacing:1.2px;font-weight:bold;">20</div>
<div class="t" style="top:489.9px;font-size:9.6px;line-height:9.6px;color:#000;left:2339.1886160714284px;letter-spacing:1.2px;font-weight:bold;">30</div>
<div class="t" style="top:489.9px;font-size:9.6px;line-height:9.6px;color:#000;left:2397.0848214285716px;letter-spacing:1.2px;font-weight:bold;">40</div>
<div class="t" style="top:489.9px;font-size:9.6px;line-height:9.6px;color:#000;left:2454.981026785714px;letter-spacing:1.2px;font-weight:bold;">50</div>
<div class="t" style="top:489.9px;font-size:9.6px;line-height:9.6px;color:#000;left:2439px;width:60px;text-align:right;letter-spacing:1.2px;font-weight:bold;">57.344</div>
<div style="left:2163.5px;top:480.5px;width:5px;height:10px;background:#6e5a28;border:1px solid #2a2414;"></div>
<div style="left:2500px;top:480.0px;width:18px;height:19px;background:#454545;border:1px solid #262626;border-radius:3px;"></div>
<svg style="left:2500px;top:480.0px;" width="18" height="19" viewBox="0 0 18 19"><path d="M3.5 15.5 Q6 8 8.5 8 Q11 8 12.5 13 Q14 15 17 3.5" stroke="#161616" stroke-width="1.8" fill="none"/></svg>
<div class="t" style="top:507.0px;font-size:11.2px;line-height:11.2px;color:#c8c8c8;left:1783.8000000000002px;width:300px;text-align:right;letter-spacing:0.8px;">Screen Despot Black</div>
<div style="left:2089.5px;top:502.0px;width:72.5px;height:19px;background:#383838;border:1px solid #262626;border-radius:3px;"></div>
<div class="t" style="top:507.8px;font-size:11.5px;line-height:11.5px;color:#d0d0d0;left:2093.5px;letter-spacing:0.55px;">0</div>
<svg style="left:2166px;top:500px;" width="333" height="12" viewBox="0 0 333 12"><rect x="0" y="8" width="332" height="1" fill="#050505"/><rect x="0" y="9" width="332" height="1" fill="#4a4a4a"/><rect x="0" y="10" width="332" height="1" fill="#050505"/><rect x="0" y="4" width="1" height="4" fill="#1e1e1e"/><rect x="6" y="4" width="1" height="4" fill="#1e1e1e"/><rect x="12" y="4" width="1" height="4" fill="#1e1e1e"/><rect x="17" y="4" width="1" height="4" fill="#1e1e1e"/><rect x="23" y="4" width="1" height="4" fill="#1e1e1e"/><rect x="29" y="4" width="1" height="4" fill="#1e1e1e"/><rect x="35" y="4" width="1" height="4" fill="#1e1e1e"/><rect x="41" y="4" width="1" height="4" fill="#1e1e1e"/><rect x="46" y="4" width="1" height="4" fill="#1e1e1e"/><rect x="52" y="4" width="1" height="4" fill="#1e1e1e"/><rect x="58" y="4" width="1" height="4" fill="#1e1e1e"/><rect x="64" y="4" width="1" height="4" fill="#1e1e1e"/><rect x="69" y="4" width="1" height="4" fill="#1e1e1e"/><rect x="75" y="4" width="1" height="4" fill="#1e1e1e"/><rect x="81" y="4" width="1" height="4" fill="#1e1e1e"/><rect x="87" y="4" width="1" height="4" fill="#1e1e1e"/><rect x="93" y="4" width="1" height="4" fill="#1e1e1e"/><rect x="98" y="4" width="1" height="4" fill="#1e1e1e"/><rect x="104" y="4" width="1" height="4" fill="#1e1e1e"/><rect x="110" y="4" width="1" height="4" fill="#1e1e1e"/><rect x="116" y="4" width="1" height="4" fill="#1e1e1e"/><rect x="122" y="4" width="1" height="4" fill="#1e1e1e"/><rect x="127" y="4" width="1" height="4" fill="#1e1e1e"/><rect x="133" y="4" width="1" height="4" fill="#1e1e1e"/><rect x="139" y="4" width="1" height="4" fill="#1e1e1e"/><rect x="145" y="4" width="1" height="4" fill="#1e1e1e"/><rect x="151" y="4" width="1" height="4" fill="#1e1e1e"/><rect x="156" y="4" width="1" height="4" fill="#1e1e1e"/><rect x="162" y="4" width="1" height="4" fill="#1e1e1e"/><rect x="168" y="4" width="1" height="4" fill="#1e1e1e"/><rect x="174" y="4" width="1" height="4" fill="#1e1e1e"/><rect x="179" y="4" width="1" height="4" fill="#1e1e1e"/><rect x="185" y="4" width="1" height="4" fill="#1e1e1e"/><rect x="191" y="4" width="1" height="4" fill="#1e1e1e"/><rect x="197" y="4" width="1" height="4" fill="#1e1e1e"/><rect x="203" y="4" width="1" height="4" fill="#1e1e1e"/><rect x="208" y="4" width="1" height="4" fill="#1e1e1e"/><rect x="214" y="4" width="1" height="4" fill="#1e1e1e"/><rect x="220" y="4" width="1" height="4" fill="#1e1e1e"/><rect x="226" y="4" width="1" height="4" fill="#1e1e1e"/><rect x="232" y="4" width="1" height="4" fill="#1e1e1e"/><rect x="237" y="4" width="1" height="4" fill="#1e1e1e"/><rect x="243" y="4" width="1" height="4" fill="#1e1e1e"/><rect x="249" y="4" width="1" height="4" fill="#1e1e1e"/><rect x="255" y="4" width="1" height="4" fill="#1e1e1e"/><rect x="261" y="4" width="1" height="4" fill="#1e1e1e"/><rect x="266" y="4" width="1" height="4" fill="#1e1e1e"/><rect x="272" y="4" width="1" height="4" fill="#1e1e1e"/><rect x="278" y="4" width="1" height="4" fill="#1e1e1e"/><rect x="284" y="4" width="1" height="4" fill="#1e1e1e"/><rect x="289" y="4" width="1" height="4" fill="#1e1e1e"/><rect x="295" y="4" width="1" height="4" fill="#1e1e1e"/><rect x="301" y="4" width="1" height="4" fill="#1e1e1e"/><rect x="307" y="4" width="1" height="4" fill="#1e1e1e"/><rect x="313" y="4" width="1" height="4" fill="#1e1e1e"/><rect x="318" y="4" width="1" height="4" fill="#1e1e1e"/><rect x="324" y="4" width="1" height="4" fill="#1e1e1e"/><rect x="330" y="4" width="1" height="4" fill="#1e1e1e"/><rect x="0" y="2" width="1" height="6" fill="#1e1e1e"/><rect x="29" y="2" width="1" height="6" fill="#1e1e1e"/><rect x="58" y="2" width="1" height="6" fill="#1e1e1e"/><rect x="87" y="2" width="1" height="6" fill="#1e1e1e"/><rect x="116" y="2" width="1" height="6" fill="#1e1e1e"/><rect x="145" y="2" width="1" height="6" fill="#1e1e1e"/><rect x="174" y="2" width="1" height="6" fill="#1e1e1e"/><rect x="203" y="2" width="1" height="6" fill="#1e1e1e"/><rect x="232" y="2" width="1" height="6" fill="#1e1e1e"/><rect x="261" y="2" width="1" height="6" fill="#1e1e1e"/><rect x="289" y="2" width="1" height="6" fill="#1e1e1e"/><rect x="331" y="1" width="1" height="7" fill="#1e1e1e"/></svg>
<div class="t" style="top:511.9px;font-size:9.6px;line-height:9.6px;color:#000;left:2165.5px;letter-spacing:1.2px;font-weight:bold;">0</div>
<div class="t" style="top:511.9px;font-size:9.6px;line-height:9.6px;color:#000;left:2223.3962053571427px;letter-spacing:1.2px;font-weight:bold;">10</div>
<div class="t" style="top:511.9px;font-size:9.6px;line-height:9.6px;color:#000;left:2281.292410714286px;letter-spacing:1.2px;font-weight:bold;">20</div>
<div class="t" style="top:511.9px;font-size:9.6px;line-height:9.6px;color:#000;left:2339.1886160714284px;letter-spacing:1.2px;font-weight:bold;">30</div>
<div class="t" style="top:511.9px;font-size:9.6px;line-height:9.6px;color:#000;left:2397.0848214285716px;letter-spacing:1.2px;font-weight:bold;">40</div>
<div class="t" style="top:511.9px;font-size:9.6px;line-height:9.6px;color:#000;left:2454.981026785714px;letter-spacing:1.2px;font-weight:bold;">50</div>
<div class="t" style="top:511.9px;font-size:9.6px;line-height:9.6px;color:#000;left:2439px;width:60px;text-align:right;letter-spacing:1.2px;font-weight:bold;">57.344</div>
<div style="left:2163.5px;top:502.5px;width:5px;height:10px;background:#6e5a28;border:1px solid #2a2414;"></div>
<div style="left:2500px;top:502.0px;width:18px;height:19px;background:#454545;border:1px solid #262626;border-radius:3px;"></div>
<svg style="left:2500px;top:502.0px;" width="18" height="19" viewBox="0 0 18 19"><path d="M3.5 15.5 Q6 8 8.5 8 Q11 8 12.5 13 Q14 15 17 3.5" stroke="#161616" stroke-width="1.8" fill="none"/></svg>
<div class="t" style="top:529.0px;font-size:11.2px;line-height:11.2px;color:#c8c8c8;left:1783.8000000000002px;width:300px;text-align:right;letter-spacing:0.8px;">Screen Despot White</div>
<div style="left:2089.5px;top:524.0px;width:72.5px;height:19px;background:#383838;border:1px solid #262626;border-radius:3px;"></div>
<div class="t" style="top:529.8px;font-size:11.5px;line-height:11.5px;color:#d0d0d0;left:2093.5px;letter-spacing:0.55px;">0</div>
<svg style="left:2166px;top:522px;" width="333" height="12" viewBox="0 0 333 12"><rect x="0" y="8" width="332" height="1" fill="#050505"/><rect x="0" y="9" width="332" height="1" fill="#4a4a4a"/><rect x="0" y="10" width="332" height="1" fill="#050505"/><rect x="0" y="4" width="1" height="4" fill="#1e1e1e"/><rect x="6" y="4" width="1" height="4" fill="#1e1e1e"/><rect x="12" y="4" width="1" height="4" fill="#1e1e1e"/><rect x="17" y="4" width="1" height="4" fill="#1e1e1e"/><rect x="23" y="4" width="1" height="4" fill="#1e1e1e"/><rect x="29" y="4" width="1" height="4" fill="#1e1e1e"/><rect x="35" y="4" width="1" height="4" fill="#1e1e1e"/><rect x="41" y="4" width="1" height="4" fill="#1e1e1e"/><rect x="46" y="4" width="1" height="4" fill="#1e1e1e"/><rect x="52" y="4" width="1" height="4" fill="#1e1e1e"/><rect x="58" y="4" width="1" height="4" fill="#1e1e1e"/><rect x="64" y="4" width="1" height="4" fill="#1e1e1e"/><rect x="69" y="4" width="1" height="4" fill="#1e1e1e"/><rect x="75" y="4" width="1" height="4" fill="#1e1e1e"/><rect x="81" y="4" width="1" height="4" fill="#1e1e1e"/><rect x="87" y="4" width="1" height="4" fill="#1e1e1e"/><rect x="93" y="4" width="1" height="4" fill="#1e1e1e"/><rect x="98" y="4" width="1" height="4" fill="#1e1e1e"/><rect x="104" y="4" width="1" height="4" fill="#1e1e1e"/><rect x="110" y="4" width="1" height="4" fill="#1e1e1e"/><rect x="116" y="4" width="1" height="4" fill="#1e1e1e"/><rect x="122" y="4" width="1" height="4" fill="#1e1e1e"/><rect x="127" y="4" width="1" height="4" fill="#1e1e1e"/><rect x="133" y="4" width="1" height="4" fill="#1e1e1e"/><rect x="139" y="4" width="1" height="4" fill="#1e1e1e"/><rect x="145" y="4" width="1" height="4" fill="#1e1e1e"/><rect x="151" y="4" width="1" height="4" fill="#1e1e1e"/><rect x="156" y="4" width="1" height="4" fill="#1e1e1e"/><rect x="162" y="4" width="1" height="4" fill="#1e1e1e"/><rect x="168" y="4" width="1" height="4" fill="#1e1e1e"/><rect x="174" y="4" width="1" height="4" fill="#1e1e1e"/><rect x="179" y="4" width="1" height="4" fill="#1e1e1e"/><rect x="185" y="4" width="1" height="4" fill="#1e1e1e"/><rect x="191" y="4" width="1" height="4" fill="#1e1e1e"/><rect x="197" y="4" width="1" height="4" fill="#1e1e1e"/><rect x="203" y="4" width="1" height="4" fill="#1e1e1e"/><rect x="208" y="4" width="1" height="4" fill="#1e1e1e"/><rect x="214" y="4" width="1" height="4" fill="#1e1e1e"/><rect x="220" y="4" width="1" height="4" fill="#1e1e1e"/><rect x="226" y="4" width="1" height="4" fill="#1e1e1e"/><rect x="232" y="4" width="1" height="4" fill="#1e1e1e"/><rect x="237" y="4" width="1" height="4" fill="#1e1e1e"/><rect x="243" y="4" width="1" height="4" fill="#1e1e1e"/><rect x="249" y="4" width="1" height="4" fill="#1e1e1e"/><rect x="255" y="4" width="1" height="4" fill="#1e1e1e"/><rect x="261" y="4" width="1" height="4" fill="#1e1e1e"/><rect x="266" y="4" width="1" height="4" fill="#1e1e1e"/><rect x="272" y="4" width="1" height="4" fill="#1e1e1e"/><rect x="278" y="4" width="1" height="4" fill="#1e1e1e"/><rect x="284" y="4" width="1" height="4" fill="#1e1e1e"/><rect x="289" y="4" width="1" height="4" fill="#1e1e1e"/><rect x="295" y="4" width="1" height="4" fill="#1e1e1e"/><rect x="301" y="4" width="1" height="4" fill="#1e1e1e"/><rect x="307" y="4" width="1" height="4" fill="#1e1e1e"/><rect x="313" y="4" width="1" height="4" fill="#1e1e1e"/><rect x="318" y="4" width="1" height="4" fill="#1e1e1e"/><rect x="324" y="4" width="1" height="4" fill="#1e1e1e"/><rect x="330" y="4" width="1" height="4" fill="#1e1e1e"/><rect x="0" y="2" width="1" height="6" fill="#1e1e1e"/><rect x="29" y="2" width="1" height="6" fill="#1e1e1e"/><rect x="58" y="2" width="1" height="6" fill="#1e1e1e"/><rect x="87" y="2" width="1" height="6" fill="#1e1e1e"/><rect x="116" y="2" width="1" height="6" fill="#1e1e1e"/><rect x="145" y="2" width="1" height="6" fill="#1e1e1e"/><rect x="174" y="2" width="1" height="6" fill="#1e1e1e"/><rect x="203" y="2" width="1" height="6" fill="#1e1e1e"/><rect x="232" y="2" width="1" height="6" fill="#1e1e1e"/><rect x="261" y="2" width="1" height="6" fill="#1e1e1e"/><rect x="289" y="2" width="1" height="6" fill="#1e1e1e"/><rect x="331" y="1" width="1" height="7" fill="#1e1e1e"/></svg>
<div class="t" style="top:533.9px;font-size:9.6px;line-height:9.6px;color:#000;left:2165.5px;letter-spacing:1.2px;font-weight:bold;">0</div>
<div class="t" style="top:533.9px;font-size:9.6px;line-height:9.6px;color:#000;left:2223.3962053571427px;letter-spacing:1.2px;font-weight:bold;">10</div>
<div class="t" style="top:533.9px;font-size:9.6px;line-height:9.6px;color:#000;left:2281.292410714286px;letter-spacing:1.2px;font-weight:bold;">20</div>
<div class="t" style="top:533.9px;font-size:9.6px;line-height:9.6px;color:#000;left:2339.1886160714284px;letter-spacing:1.2px;font-weight:bold;">30</div>
<div class="t" style="top:533.9px;font-size:9.6px;line-height:9.6px;color:#000;left:2397.0848214285716px;letter-spacing:1.2px;font-weight:bold;">40</div>
<div class="t" style="top:533.9px;font-size:9.6px;line-height:9.6px;color:#000;left:2454.981026785714px;letter-spacing:1.2px;font-weight:bold;">50</div>
<div class="t" style="top:533.9px;font-size:9.6px;line-height:9.6px;color:#000;left:2439px;width:60px;text-align:right;letter-spacing:1.2px;font-weight:bold;">57.344</div>
<div style="left:2163.5px;top:524.5px;width:5px;height:10px;background:#6e5a28;border:1px solid #2a2414;"></div>
<div style="left:2500px;top:524.0px;width:18px;height:19px;background:#454545;border:1px solid #262626;border-radius:3px;"></div>
<svg style="left:2500px;top:524.0px;" width="18" height="19" viewBox="0 0 18 19"><path d="M3.5 15.5 Q6 8 8.5 8 Q11 8 12.5 13 Q14 15 17 3.5" stroke="#161616" stroke-width="1.8" fill="none"/></svg>
<div class="t" style="top:551.0px;font-size:11.2px;line-height:11.2px;color:#c8c8c8;left:1783.8000000000002px;width:300px;text-align:right;letter-spacing:0.8px;">Screen Replace</div>
<div style="left:2089.5px;top:546.0px;width:97.5px;height:19px;background:linear-gradient(#484848,#424242);border:1px solid #282828;border-radius:3px;"></div>
<div class="t" style="top:551.5px;font-size:11.2px;line-height:11.2px;color:#d0d0d0;left:2094.5px;letter-spacing:0.8px;">Soft Colour</div>
<svg style="left:2173px;top:553.5px;" width="8" height="5" viewBox="0 0 8 5"><path d="M0 0 H8 L4 5 Z" fill="#dcdcdc"/></svg>
<div class="t" style="top:572.0px;font-size:11.2px;line-height:11.2px;color:#c8c8c8;left:1783.8000000000002px;width:300px;text-align:right;letter-spacing:0.8px;">Screen Replace Colour</div>
<div style="left:2089.5px;top:567.0px;width:72.5px;height:19px;background:#383838;border:1px solid #262626;border-radius:3px;"></div>
<div class="t" style="top:572.8px;font-size:11.5px;line-height:11.5px;color:#d0d0d0;left:2093.5px;letter-spacing:0.55px;">0.5</div>
<div style="left:2091.0px;top:584.0px;width:69.5px;height:1px;background:#c84a4a;"></div>
<div style="left:2164.5px;top:567.0px;width:72.5px;height:19px;background:#383838;border:1px solid #262626;border-radius:3px;"></div>
<div class="t" style="top:572.8px;font-size:11.5px;line-height:11.5px;color:#d0d0d0;left:2168.5px;letter-spacing:0.55px;">0.5</div>
<div style="left:2166.0px;top:584.0px;width:69.5px;height:1px;background:#4aa04a;"></div>
<div style="left:2239.5px;top:567.0px;width:72.5px;height:19px;background:#383838;border:1px solid #262626;border-radius:3px;"></div>
<div class="t" style="top:572.8px;font-size:11.5px;line-height:11.5px;color:#d0d0d0;left:2243.5px;letter-spacing:0.55px;">0.5</div>
<div style="left:2241.0px;top:584.0px;width:69.5px;height:1px;background:#4a6ad0;"></div>
<div style="left:2442.5px;top:567.0px;width:57px;height:19px;background:#484848;border:1px solid #262626;border-radius:3px;"></div>
<div style="left:2461px;top:567.5px;width:1px;height:18px;background:#222;"></div>
<div style="left:2480px;top:567.5px;width:1px;height:18px;background:#222;"></div>
<div style="left:2445px;top:571.0px;width:13px;height:13px;background:#d0d0d0;border:1px solid #000;"></div>
<div style="left:2464px;top:569.5px;width:13px;height:13px;background:radial-gradient(circle, rgba(235,235,235,0.95) 0%, rgba(235,235,235,0) 70%), conic-gradient(from 0deg, #ff50e0, #ff5050, #f0f050, #50ff50, #50f0f0, #5050ff, #ff50e0);border-radius:50%;"></div>
<div style="left:2481px;top:568.5px;width:16px;height:16px;background:#2a2a2a;border-radius:3px;"></div>
<div class="t" style="top:572.3px;font-size:11.5px;line-height:11.5px;color:#d0d0d0;left:2479.0px;width:20px;text-align:center;">3</div>
<div style="left:2500px;top:567.0px;width:18px;height:19px;background:#454545;border:1px solid #262626;border-radius:3px;"></div>
<svg style="left:2500px;top:567.0px;" width="18" height="19" viewBox="0 0 18 19"><path d="M3.5 15.5 Q6 8 8.5 8 Q11 8 12.5 13 Q14 15 17 3.5" stroke="#161616" stroke-width="1.8" fill="none"/></svg>
<svg style="left:1956.5px;top:592px;" width="9" height="7" viewBox="0 0 9 7"><path d="M0 0 H9 L4.5 7 Z" fill="#0e0e0e"/></svg>
<div class="t" style="top:593.5px;font-size:11.2px;line-height:11.2px;color:#c8c8c8;left:1976px;letter-spacing:0.8px;">Tuning</div>
<div class="t" style="top:615.0px;font-size:11.2px;line-height:11.2px;color:#c8c8c8;left:1783.8000000000002px;width:300px;text-align:right;letter-spacing:0.8px;">Mid Tones At</div>
<div style="left:2089.5px;top:610.0px;width:72.5px;height:19px;background:#383838;border:1px solid #262626;border-radius:3px;"></div>
<div class="t" style="top:615.8px;font-size:11.5px;line-height:11.5px;color:#d0d0d0;left:2093.5px;letter-spacing:0.55px;">0.37</div>
<svg style="left:2166px;top:608px;" width="333" height="12" viewBox="0 0 333 12"><rect x="0" y="8" width="332" height="1" fill="#050505"/><rect x="0" y="9" width="332" height="1" fill="#4a4a4a"/><rect x="0" y="10" width="332" height="1" fill="#050505"/><rect x="0" y="4" width="1" height="4" fill="#1e1e1e"/><rect x="17" y="4" width="1" height="4" fill="#1e1e1e"/><rect x="33" y="4" width="1" height="4" fill="#1e1e1e"/><rect x="50" y="4" width="1" height="4" fill="#1e1e1e"/><rect x="66" y="4" width="1" height="4" fill="#1e1e1e"/><rect x="83" y="4" width="1" height="4" fill="#1e1e1e"/><rect x="100" y="4" width="1" height="4" fill="#1e1e1e"/><rect x="116" y="4" width="1" height="4" fill="#1e1e1e"/><rect x="133" y="4" width="1" height="4" fill="#1e1e1e"/><rect x="149" y="4" width="1" height="4" fill="#1e1e1e"/><rect x="166" y="4" width="1" height="4" fill="#1e1e1e"/><rect x="183" y="4" width="1" height="4" fill="#1e1e1e"/><rect x="199" y="4" width="1" height="4" fill="#1e1e1e"/><rect x="216" y="4" width="1" height="4" fill="#1e1e1e"/><rect x="232" y="4" width="1" height="4" fill="#1e1e1e"/><rect x="249" y="4" width="1" height="4" fill="#1e1e1e"/><rect x="266" y="4" width="1" height="4" fill="#1e1e1e"/><rect x="282" y="4" width="1" height="4" fill="#1e1e1e"/><rect x="299" y="4" width="1" height="4" fill="#1e1e1e"/><rect x="315" y="4" width="1" height="4" fill="#1e1e1e"/><rect x="332" y="4" width="1" height="4" fill="#1e1e1e"/><rect x="0" y="2" width="1" height="6" fill="#1e1e1e"/><rect x="33" y="2" width="1" height="6" fill="#1e1e1e"/><rect x="66" y="2" width="1" height="6" fill="#1e1e1e"/><rect x="100" y="2" width="1" height="6" fill="#1e1e1e"/><rect x="133" y="2" width="1" height="6" fill="#1e1e1e"/><rect x="166" y="2" width="1" height="6" fill="#1e1e1e"/><rect x="199" y="2" width="1" height="6" fill="#1e1e1e"/><rect x="232" y="2" width="1" height="6" fill="#1e1e1e"/><rect x="266" y="2" width="1" height="6" fill="#1e1e1e"/><rect x="299" y="2" width="1" height="6" fill="#1e1e1e"/><rect x="332" y="2" width="1" height="6" fill="#1e1e1e"/><rect x="331" y="1" width="1" height="7" fill="#1e1e1e"/></svg>
<div class="t" style="top:619.9px;font-size:9.6px;line-height:9.6px;color:#000;left:2165.5px;letter-spacing:1.2px;font-weight:bold;">0</div>
<div class="t" style="top:619.9px;font-size:9.6px;line-height:9.6px;color:#000;left:2198.7px;letter-spacing:1.2px;font-weight:bold;">0.1</div>
<div class="t" style="top:619.9px;font-size:9.6px;line-height:9.6px;color:#000;left:2231.9px;letter-spacing:1.2px;font-weight:bold;">0.2</div>
<div class="t" style="top:619.9px;font-size:9.6px;line-height:9.6px;color:#000;left:2265.1px;letter-spacing:1.2px;font-weight:bold;">0.3</div>
<div class="t" style="top:619.9px;font-size:9.6px;line-height:9.6px;color:#000;left:2298.3px;letter-spacing:1.2px;font-weight:bold;">0.4</div>
<div class="t" style="top:619.9px;font-size:9.6px;line-height:9.6px;color:#000;left:2331.5px;letter-spacing:1.2px;font-weight:bold;">0.5</div>
<div class="t" style="top:619.9px;font-size:9.6px;line-height:9.6px;color:#000;left:2364.7px;letter-spacing:1.2px;font-weight:bold;">0.6</div>
<div class="t" style="top:619.9px;font-size:9.6px;line-height:9.6px;color:#000;left:2397.9px;letter-spacing:1.2px;font-weight:bold;">0.7</div>
<div class="t" style="top:619.9px;font-size:9.6px;line-height:9.6px;color:#000;left:2431.1px;letter-spacing:1.2px;font-weight:bold;">0.8</div>
<div class="t" style="top:619.9px;font-size:9.6px;line-height:9.6px;color:#000;left:2464.3px;letter-spacing:1.2px;font-weight:bold;">0.9</div>
<div class="t" style="top:619.9px;font-size:9.6px;line-height:9.6px;color:#000;left:2439px;width:60px;text-align:right;letter-spacing:1.2px;font-weight:bold;">1</div>
<div style="left:2286.34px;top:610.5px;width:5px;height:10px;background:#6e5a28;border:1px solid #2a2414;"></div>
<div style="left:2500px;top:610.0px;width:18px;height:19px;background:#454545;border:1px solid #262626;border-radius:3px;"></div>
<svg style="left:2500px;top:610.0px;" width="18" height="19" viewBox="0 0 18 19"><path d="M3.5 15.5 Q6 8 8.5 8 Q11 8 12.5 13 Q14 15 17 3.5" stroke="#161616" stroke-width="1.8" fill="none"/></svg>
<div class="t" style="top:637.0px;font-size:11.2px;line-height:11.2px;color:#c8c8c8;left:1783.8000000000002px;width:300px;text-align:right;letter-spacing:0.8px;">Shadow Gain</div>
<div style="left:2089.5px;top:632.0px;width:72.5px;height:19px;background:#383838;border:1px solid #262626;border-radius:3px;"></div>
<div class="t" style="top:637.8px;font-size:11.5px;line-height:11.5px;color:#d0d0d0;left:2093.5px;letter-spacing:0.55px;">1.37</div>
<svg style="left:2166px;top:630px;" width="333" height="12" viewBox="0 0 333 12"><rect x="0" y="8" width="332" height="1" fill="#050505"/><rect x="0" y="9" width="332" height="1" fill="#4a4a4a"/><rect x="0" y="10" width="332" height="1" fill="#050505"/><rect x="0" y="4" width="1" height="4" fill="#1e1e1e"/><rect x="17" y="4" width="1" height="4" fill="#1e1e1e"/><rect x="33" y="4" width="1" height="4" fill="#1e1e1e"/><rect x="50" y="4" width="1" height="4" fill="#1e1e1e"/><rect x="66" y="4" width="1" height="4" fill="#1e1e1e"/><rect x="83" y="4" width="1" height="4" fill="#1e1e1e"/><rect x="100" y="4" width="1" height="4" fill="#1e1e1e"/><rect x="116" y="4" width="1" height="4" fill="#1e1e1e"/><rect x="133" y="4" width="1" height="4" fill="#1e1e1e"/><rect x="149" y="4" width="1" height="4" fill="#1e1e1e"/><rect x="166" y="4" width="1" height="4" fill="#1e1e1e"/><rect x="183" y="4" width="1" height="4" fill="#1e1e1e"/><rect x="199" y="4" width="1" height="4" fill="#1e1e1e"/><rect x="216" y="4" width="1" height="4" fill="#1e1e1e"/><rect x="232" y="4" width="1" height="4" fill="#1e1e1e"/><rect x="249" y="4" width="1" height="4" fill="#1e1e1e"/><rect x="266" y="4" width="1" height="4" fill="#1e1e1e"/><rect x="282" y="4" width="1" height="4" fill="#1e1e1e"/><rect x="299" y="4" width="1" height="4" fill="#1e1e1e"/><rect x="315" y="4" width="1" height="4" fill="#1e1e1e"/><rect x="332" y="4" width="1" height="4" fill="#1e1e1e"/><rect x="0" y="2" width="1" height="6" fill="#1e1e1e"/><rect x="33" y="2" width="1" height="6" fill="#1e1e1e"/><rect x="66" y="2" width="1" height="6" fill="#1e1e1e"/><rect x="100" y="2" width="1" height="6" fill="#1e1e1e"/><rect x="133" y="2" width="1" height="6" fill="#1e1e1e"/><rect x="166" y="2" width="1" height="6" fill="#1e1e1e"/><rect x="199" y="2" width="1" height="6" fill="#1e1e1e"/><rect x="232" y="2" width="1" height="6" fill="#1e1e1e"/><rect x="266" y="2" width="1" height="6" fill="#1e1e1e"/><rect x="299" y="2" width="1" height="6" fill="#1e1e1e"/><rect x="332" y="2" width="1" height="6" fill="#1e1e1e"/><rect x="331" y="1" width="1" height="7" fill="#1e1e1e"/></svg>
<div class="t" style="top:641.9px;font-size:9.6px;line-height:9.6px;color:#000;left:2165.5px;letter-spacing:1.2px;font-weight:bold;">0</div>
<div class="t" style="top:641.9px;font-size:9.6px;line-height:9.6px;color:#000;left:2198.7px;letter-spacing:1.2px;font-weight:bold;">0.2</div>
<div class="t" style="top:641.9px;font-size:9.6px;line-height:9.6px;color:#000;left:2231.9px;letter-spacing:1.2px;font-weight:bold;">0.4</div>
<div class="t" style="top:641.9px;font-size:9.6px;line-height:9.6px;color:#000;left:2265.1px;letter-spacing:1.2px;font-weight:bold;">0.6</div>
<div class="t" style="top:641.9px;font-size:9.6px;line-height:9.6px;color:#000;left:2298.3px;letter-spacing:1.2px;font-weight:bold;">0.8</div>
<div class="t" style="top:641.9px;font-size:9.6px;line-height:9.6px;color:#000;left:2331.5px;letter-spacing:1.2px;font-weight:bold;">1</div>
<div class="t" style="top:641.9px;font-size:9.6px;line-height:9.6px;color:#000;left:2364.7px;letter-spacing:1.2px;font-weight:bold;">1.2</div>
<div class="t" style="top:641.9px;font-size:9.6px;line-height:9.6px;color:#000;left:2397.9px;letter-spacing:1.2px;font-weight:bold;">1.4</div>
<div class="t" style="top:641.9px;font-size:9.6px;line-height:9.6px;color:#000;left:2431.1px;letter-spacing:1.2px;font-weight:bold;">1.6</div>
<div class="t" style="top:641.9px;font-size:9.6px;line-height:9.6px;color:#000;left:2464.3px;letter-spacing:1.2px;font-weight:bold;">1.8</div>
<div class="t" style="top:641.9px;font-size:9.6px;line-height:9.6px;color:#000;left:2439px;width:60px;text-align:right;letter-spacing:1.2px;font-weight:bold;">2</div>
<div style="left:2390.92px;top:632.5px;width:5px;height:10px;background:#6e5a28;border:1px solid #2a2414;"></div>
<div style="left:2500px;top:632.0px;width:18px;height:19px;background:#454545;border:1px solid #262626;border-radius:3px;"></div>
<svg style="left:2500px;top:632.0px;" width="18" height="19" viewBox="0 0 18 19"><path d="M3.5 15.5 Q6 8 8.5 8 Q11 8 12.5 13 Q14 15 17 3.5" stroke="#161616" stroke-width="1.8" fill="none"/></svg>
<div class="t" style="top:659.0px;font-size:11.2px;line-height:11.2px;color:#c8c8c8;left:1783.8000000000002px;width:300px;text-align:right;letter-spacing:0.8px;">Midtones Gain</div>
<div style="left:2089.5px;top:654.0px;width:72.5px;height:19px;background:#383838;border:1px solid #262626;border-radius:3px;"></div>
<div class="t" style="top:659.8px;font-size:11.5px;line-height:11.5px;color:#d0d0d0;left:2093.5px;letter-spacing:0.55px;">0.67</div>
<svg style="left:2166px;top:652px;" width="333" height="12" viewBox="0 0 333 12"><rect x="0" y="8" width="332" height="1" fill="#050505"/><rect x="0" y="9" width="332" height="1" fill="#4a4a4a"/><rect x="0" y="10" width="332" height="1" fill="#050505"/><rect x="0" y="4" width="1" height="4" fill="#1e1e1e"/><rect x="17" y="4" width="1" height="4" fill="#1e1e1e"/><rect x="33" y="4" width="1" height="4" fill="#1e1e1e"/><rect x="50" y="4" width="1" height="4" fill="#1e1e1e"/><rect x="66" y="4" width="1" height="4" fill="#1e1e1e"/><rect x="83" y="4" width="1" height="4" fill="#1e1e1e"/><rect x="100" y="4" width="1" height="4" fill="#1e1e1e"/><rect x="116" y="4" width="1" height="4" fill="#1e1e1e"/><rect x="133" y="4" width="1" height="4" fill="#1e1e1e"/><rect x="149" y="4" width="1" height="4" fill="#1e1e1e"/><rect x="166" y="4" width="1" height="4" fill="#1e1e1e"/><rect x="183" y="4" width="1" height="4" fill="#1e1e1e"/><rect x="199" y="4" width="1" height="4" fill="#1e1e1e"/><rect x="216" y="4" width="1" height="4" fill="#1e1e1e"/><rect x="232" y="4" width="1" height="4" fill="#1e1e1e"/><rect x="249" y="4" width="1" height="4" fill="#1e1e1e"/><rect x="266" y="4" width="1" height="4" fill="#1e1e1e"/><rect x="282" y="4" width="1" height="4" fill="#1e1e1e"/><rect x="299" y="4" width="1" height="4" fill="#1e1e1e"/><rect x="315" y="4" width="1" height="4" fill="#1e1e1e"/><rect x="332" y="4" width="1" height="4" fill="#1e1e1e"/><rect x="0" y="2" width="1" height="6" fill="#1e1e1e"/><rect x="33" y="2" width="1" height="6" fill="#1e1e1e"/><rect x="66" y="2" width="1" height="6" fill="#1e1e1e"/><rect x="100" y="2" width="1" height="6" fill="#1e1e1e"/><rect x="133" y="2" width="1" height="6" fill="#1e1e1e"/><rect x="166" y="2" width="1" height="6" fill="#1e1e1e"/><rect x="199" y="2" width="1" height="6" fill="#1e1e1e"/><rect x="232" y="2" width="1" height="6" fill="#1e1e1e"/><rect x="266" y="2" width="1" height="6" fill="#1e1e1e"/><rect x="299" y="2" width="1" height="6" fill="#1e1e1e"/><rect x="332" y="2" width="1" height="6" fill="#1e1e1e"/><rect x="331" y="1" width="1" height="7" fill="#1e1e1e"/></svg>
<div class="t" style="top:663.9px;font-size:9.6px;line-height:9.6px;color:#000;left:2165.5px;letter-spacing:1.2px;font-weight:bold;">0</div>
<div class="t" style="top:663.9px;font-size:9.6px;line-height:9.6px;color:#000;left:2198.7px;letter-spacing:1.2px;font-weight:bold;">0.2</div>
<div class="t" style="top:663.9px;font-size:9.6px;line-height:9.6px;color:#000;left:2231.9px;letter-spacing:1.2px;font-weight:bold;">0.4</div>
<div class="t" style="top:663.9px;font-size:9.6px;line-height:9.6px;color:#000;left:2265.1px;letter-spacing:1.2px;font-weight:bold;">0.6</div>
<div class="t" style="top:663.9px;font-size:9.6px;line-height:9.6px;color:#000;left:2298.3px;letter-spacing:1.2px;font-weight:bold;">0.8</div>
<div class="t" style="top:663.9px;font-size:9.6px;line-height:9.6px;color:#000;left:2331.5px;letter-spacing:1.2px;font-weight:bold;">1</div>
<div class="t" style="top:663.9px;font-size:9.6px;line-height:9.6px;color:#000;left:2364.7px;letter-spacing:1.2px;font-weight:bold;">1.2</div>
<div class="t" style="top:663.9px;font-size:9.6px;line-height:9.6px;color:#000;left:2397.9px;letter-spacing:1.2px;font-weight:bold;">1.4</div>
<div class="t" style="top:663.9px;font-size:9.6px;line-height:9.6px;color:#000;left:2431.1px;letter-spacing:1.2px;font-weight:bold;">1.6</div>
<div class="t" style="top:663.9px;font-size:9.6px;line-height:9.6px;color:#000;left:2464.3px;letter-spacing:1.2px;font-weight:bold;">1.8</div>
<div class="t" style="top:663.9px;font-size:9.6px;line-height:9.6px;color:#000;left:2439px;width:60px;text-align:right;letter-spacing:1.2px;font-weight:bold;">2</div>
<div style="left:2274.72px;top:654.5px;width:5px;height:10px;background:#6e5a28;border:1px solid #2a2414;"></div>
<div style="left:2500px;top:654.0px;width:18px;height:19px;background:#454545;border:1px solid #262626;border-radius:3px;"></div>
<svg style="left:2500px;top:654.0px;" width="18" height="19" viewBox="0 0 18 19"><path d="M3.5 15.5 Q6 8 8.5 8 Q11 8 12.5 13 Q14 15 17 3.5" stroke="#161616" stroke-width="1.8" fill="none"/></svg>
<div class="t" style="top:681.0px;font-size:11.2px;line-height:11.2px;color:#c8c8c8;left:1783.8000000000002px;width:300px;text-align:right;letter-spacing:0.8px;">Highlights Gain</div>
<div style="left:2089.5px;top:676.0px;width:72.5px;height:19px;background:#383838;border:1px solid #262626;border-radius:3px;"></div>
<div class="t" style="top:681.8px;font-size:11.5px;line-height:11.5px;color:#d0d0d0;left:2093.5px;letter-spacing:0.55px;">1.66</div>
<svg style="left:2166px;top:674px;" width="333" height="12" viewBox="0 0 333 12"><rect x="0" y="8" width="332" height="1" fill="#050505"/><rect x="0" y="9" width="332" height="1" fill="#4a4a4a"/><rect x="0" y="10" width="332" height="1" fill="#050505"/><rect x="0" y="4" width="1" height="4" fill="#1e1e1e"/><rect x="17" y="4" width="1" height="4" fill="#1e1e1e"/><rect x="33" y="4" width="1" height="4" fill="#1e1e1e"/><rect x="50" y="4" width="1" height="4" fill="#1e1e1e"/><rect x="66" y="4" width="1" height="4" fill="#1e1e1e"/><rect x="83" y="4" width="1" height="4" fill="#1e1e1e"/><rect x="100" y="4" width="1" height="4" fill="#1e1e1e"/><rect x="116" y="4" width="1" height="4" fill="#1e1e1e"/><rect x="133" y="4" width="1" height="4" fill="#1e1e1e"/><rect x="149" y="4" width="1" height="4" fill="#1e1e1e"/><rect x="166" y="4" width="1" height="4" fill="#1e1e1e"/><rect x="183" y="4" width="1" height="4" fill="#1e1e1e"/><rect x="199" y="4" width="1" height="4" fill="#1e1e1e"/><rect x="216" y="4" width="1" height="4" fill="#1e1e1e"/><rect x="232" y="4" width="1" height="4" fill="#1e1e1e"/><rect x="249" y="4" width="1" height="4" fill="#1e1e1e"/><rect x="266" y="4" width="1" height="4" fill="#1e1e1e"/><rect x="282" y="4" width="1" height="4" fill="#1e1e1e"/><rect x="299" y="4" width="1" height="4" fill="#1e1e1e"/><rect x="315" y="4" width="1" height="4" fill="#1e1e1e"/><rect x="332" y="4" width="1" height="4" fill="#1e1e1e"/><rect x="0" y="2" width="1" height="6" fill="#1e1e1e"/><rect x="33" y="2" width="1" height="6" fill="#1e1e1e"/><rect x="66" y="2" width="1" height="6" fill="#1e1e1e"/><rect x="100" y="2" width="1" height="6" fill="#1e1e1e"/><rect x="133" y="2" width="1" height="6" fill="#1e1e1e"/><rect x="166" y="2" width="1" height="6" fill="#1e1e1e"/><rect x="199" y="2" width="1" height="6" fill="#1e1e1e"/><rect x="232" y="2" width="1" height="6" fill="#1e1e1e"/><rect x="266" y="2" width="1" height="6" fill="#1e1e1e"/><rect x="299" y="2" width="1" height="6" fill="#1e1e1e"/><rect x="332" y="2" width="1" height="6" fill="#1e1e1e"/><rect x="331" y="1" width="1" height="7" fill="#1e1e1e"/></svg>
<div class="t" style="top:685.9px;font-size:9.6px;line-height:9.6px;color:#000;left:2165.5px;letter-spacing:1.2px;font-weight:bold;">0</div>
<div class="t" style="top:685.9px;font-size:9.6px;line-height:9.6px;color:#000;left:2198.7px;letter-spacing:1.2px;font-weight:bold;">0.2</div>
<div class="t" style="top:685.9px;font-size:9.6px;line-height:9.6px;color:#000;left:2231.9px;letter-spacing:1.2px;font-weight:bold;">0.4</div>
<div class="t" style="top:685.9px;font-size:9.6px;line-height:9.6px;color:#000;left:2265.1px;letter-spacing:1.2px;font-weight:bold;">0.6</div>
<div class="t" style="top:685.9px;font-size:9.6px;line-height:9.6px;color:#000;left:2298.3px;letter-spacing:1.2px;font-weight:bold;">0.8</div>
<div class="t" style="top:685.9px;font-size:9.6px;line-height:9.6px;color:#000;left:2331.5px;letter-spacing:1.2px;font-weight:bold;">1</div>
<div class="t" style="top:685.9px;font-size:9.6px;line-height:9.6px;color:#000;left:2364.7px;letter-spacing:1.2px;font-weight:bold;">1.2</div>
<div class="t" style="top:685.9px;font-size:9.6px;line-height:9.6px;color:#000;left:2397.9px;letter-spacing:1.2px;font-weight:bold;">1.4</div>
<div class="t" style="top:685.9px;font-size:9.6px;line-height:9.6px;color:#000;left:2431.1px;letter-spacing:1.2px;font-weight:bold;">1.6</div>
<div class="t" style="top:685.9px;font-size:9.6px;line-height:9.6px;color:#000;left:2464.3px;letter-spacing:1.2px;font-weight:bold;">1.8</div>
<div class="t" style="top:685.9px;font-size:9.6px;line-height:9.6px;color:#000;left:2439px;width:60px;text-align:right;letter-spacing:1.2px;font-weight:bold;">2</div>
<div style="left:2439.06px;top:676.5px;width:5px;height:10px;background:#6e5a28;border:1px solid #2a2414;"></div>
<div style="left:2500px;top:676.0px;width:18px;height:19px;background:#454545;border:1px solid #262626;border-radius:3px;"></div>
<svg style="left:2500px;top:676.0px;" width="18" height="19" viewBox="0 0 18 19"><path d="M3.5 15.5 Q6 8 8.5 8 Q11 8 12.5 13 Q14 15 17 3.5" stroke="#161616" stroke-width="1.8" fill="none"/></svg>
<svg style="left:1956.5px;top:700px;" width="9" height="7" viewBox="0 0 9 7"><path d="M0 0 H9 L4.5 7 Z" fill="#0e0e0e"/></svg>
<div class="t" style="top:701.5px;font-size:11.2px;line-height:11.2px;color:#c8c8c8;left:1976px;letter-spacing:0.8px;">Inside Mask</div>
<div class="t" style="top:723.0px;font-size:11.2px;line-height:11.2px;color:#c8c8c8;left:1783.8000000000002px;width:300px;text-align:right;letter-spacing:0.8px;">Source Alpha</div>
<div style="left:2089.5px;top:718.0px;width:139.0px;height:19px;background:linear-gradient(#484848,#424242);border:1px solid #282828;border-radius:3px;"></div>
<div class="t" style="top:723.5px;font-size:11.2px;line-height:11.2px;color:#d0d0d0;left:2094.5px;letter-spacing:0.8px;">Ignore</div>
<svg style="left:2214.5px;top:725.5px;" width="8" height="5" viewBox="0 0 8 5"><path d="M0 0 H8 L4 5 Z" fill="#dcdcdc"/></svg>
<div class="t" style="top:745.0px;font-size:11.2px;line-height:11.2px;color:#c8c8c8;left:1783.8000000000002px;width:300px;text-align:right;letter-spacing:0.8px;">Inside Replace</div>
<div style="left:2089.5px;top:740.0px;width:97.5px;height:19px;background:linear-gradient(#484848,#424242);border:1px solid #282828;border-radius:3px;"></div>
<div class="t" style="top:745.5px;font-size:11.2px;line-height:11.2px;color:#d0d0d0;left:2094.5px;letter-spacing:0.8px;">Soft Colour</div>
<svg style="left:2173px;top:747.5px;" width="8" height="5" viewBox="0 0 8 5"><path d="M0 0 H8 L4 5 Z" fill="#dcdcdc"/></svg>
<div class="t" style="top:765.0px;font-size:11.2px;line-height:11.2px;color:#c8c8c8;left:1783.8000000000002px;width:300px;text-align:right;letter-spacing:0.8px;">Inside Replace Colour</div>
<div style="left:2089.5px;top:760.0px;width:72.5px;height:19px;background:#383838;border:1px solid #262626;border-radius:3px;"></div>
<div class="t" style="top:765.8px;font-size:11.5px;line-height:11.5px;color:#d0d0d0;left:2093.5px;letter-spacing:0.55px;">0.5</div>
<div style="left:2091.0px;top:777.0px;width:69.5px;height:1px;background:#c84a4a;"></div>
<div style="left:2164.5px;top:760.0px;width:72.5px;height:19px;background:#383838;border:1px solid #262626;border-radius:3px;"></div>
<div class="t" style="top:765.8px;font-size:11.5px;line-height:11.5px;color:#d0d0d0;left:2168.5px;letter-spacing:0.55px;">0.5</div>
<div style="left:2166.0px;top:777.0px;width:69.5px;height:1px;background:#4aa04a;"></div>
<div style="left:2239.5px;top:760.0px;width:72.5px;height:19px;background:#383838;border:1px solid #262626;border-radius:3px;"></div>
<div class="t" style="top:765.8px;font-size:11.5px;line-height:11.5px;color:#d0d0d0;left:2243.5px;letter-spacing:0.55px;">0.5</div>
<div style="left:2241.0px;top:777.0px;width:69.5px;height:1px;background:#4a6ad0;"></div>
<div style="left:2442.5px;top:760.0px;width:57px;height:19px;background:#484848;border:1px solid #262626;border-radius:3px;"></div>
<div style="left:2461px;top:760.5px;width:1px;height:18px;background:#222;"></div>
<div style="left:2480px;top:760.5px;width:1px;height:18px;background:#222;"></div>
<div style="left:2445px;top:764.0px;width:13px;height:13px;background:#d0d0d0;border:1px solid #000;"></div>
<div style="left:2464px;top:762.5px;width:13px;height:13px;background:radial-gradient(circle, rgba(235,235,235,0.95) 0%, rgba(235,235,235,0) 70%), conic-gradient(from 0deg, #ff50e0, #ff5050, #f0f050, #50ff50, #50f0f0, #5050ff, #ff50e0);border-radius:50%;"></div>
<div style="left:2481px;top:761.5px;width:16px;height:16px;background:#2a2a2a;border-radius:3px;"></div>
<div class="t" style="top:765.3px;font-size:11.5px;line-height:11.5px;color:#d0d0d0;left:2479.0px;width:20px;text-align:center;">3</div>
<div style="left:2500px;top:760.0px;width:18px;height:19px;background:#454545;border:1px solid #262626;border-radius:3px;"></div>
<svg style="left:2500px;top:760.0px;" width="18" height="19" viewBox="0 0 18 19"><path d="M3.5 15.5 Q6 8 8.5 8 Q11 8 12.5 13 Q14 15 17 3.5" stroke="#161616" stroke-width="1.8" fill="none"/></svg>
<svg style="left:1957px;top:786.5px;" width="7" height="9" viewBox="0 0 7 9"><path d="M0 0 V9 L7 4.5 Z" fill="#0e0e0e"/></svg>
<div class="t" style="top:788.0px;font-size:11.2px;line-height:11.2px;color:#c8c8c8;left:1976px;letter-spacing:0.8px;">Crops</div>
<div class="t" style="top:808.5px;font-size:11.2px;line-height:11.2px;color:#c8c8c8;left:1783.8000000000002px;width:300px;text-align:right;letter-spacing:0.8px;">InM Component</div>
<div style="left:2089.5px;top:803.5px;width:141.5px;height:19px;background:linear-gradient(#484848,#424242);border:1px solid #282828;border-radius:3px;"></div>
<div class="t" style="top:809.0px;font-size:11.2px;line-height:11.2px;color:#d0d0d0;left:2094.5px;letter-spacing:0.8px;">None</div>
<svg style="left:2217px;top:811px;" width="8" height="5" viewBox="0 0 8 5"><path d="M0 0 H8 L4 5 Z" fill="#dcdcdc"/></svg>
<div class="t" style="top:830.5px;font-size:11.2px;line-height:11.2px;color:#c8c8c8;left:1783.8000000000002px;width:300px;text-align:right;letter-spacing:0.8px;">OutM Component</div>
<div style="left:2089.5px;top:825.5px;width:141.5px;height:19px;background:linear-gradient(#484848,#424242);border:1px solid #282828;border-radius:3px;"></div>
<div class="t" style="top:831.0px;font-size:11.2px;line-height:11.2px;color:#d0d0d0;left:2094.5px;letter-spacing:0.8px;">None</div>
<svg style="left:2217px;top:833px;" width="8" height="5" viewBox="0 0 8 5"><path d="M0 0 H8 L4 5 Z" fill="#dcdcdc"/></svg>
<div style="left:2089.5px;top:848px;width:92px;height:26px;background:linear-gradient(#444,#383838);border:1px solid #1e1e1e;border-radius:3px;"></div>
<div class="t" style="top:857.0px;font-size:11.2px;line-height:11.2px;color:#d0d0d0;left:2095.5px;width:80px;text-align:center;letter-spacing:0.8px;">About</div>
<svg style="left:2518px;top:875px;" width="10" height="10" viewBox="0 0 10 10"><path d="M9 1 L1 9 M9 4 L4 9 M9 7 L7 9" stroke="#666" stroke-width="1"/></svg>
<div style="left:1941px;top:892.5px;width:589px;height:2px;background:#d8d800;"></div>
<div style="left:1941px;top:894.5px;width:589px;height:24px;background:linear-gradient(#3d3d3d,#373737);border:1px solid #1e1e1e;border-top:none;border-radius:0 0 2px 2px;"></div>
<svg style="left:1947px;top:901.5px;" width="9" height="7" viewBox="0 0 9 7"><path d="M0 0 H9 L4.5 7 Z" fill="#000"/></svg>
<div style="left:1965.5px;top:897.0px;width:68px;height:19px;background:#484848;border:1px solid #262626;border-radius:3px;"></div>
<div style="left:1987.5px;top:897.5px;width:1px;height:18px;background:#262626;"></div>
<div style="left:2010.5px;top:897.5px;width:1px;height:18px;background:#262626;"></div>
<svg style="left:1971px;top:901.5px;" width="10" height="10" viewBox="0 0 10 10"><circle cx="5" cy="5" r="4.2" fill="#ddd" stroke="#000" stroke-width="1.6"/><circle cx="5" cy="5" r="1.6" fill="#000"/></svg>
<svg style="left:1992px;top:899.5px;" width="14" height="14" viewBox="0 0 14 14"><path d="M4 0 L7 5 L10 0" stroke="#111" stroke-width="1" fill="none"/><rect x="1" y="5" width="12" height="6" rx="1" fill="#111"/><path d="M6 11 L7 13 L8 11 Z" fill="#111"/></svg>
<svg style="left:2016px;top:898.5px;" width="11" height="15" viewBox="0 0 11 15"><path d="M1 1 Q0 6 3 8 V15 H8 V8 Q11 6 10 1 L8 3 V5 Q5.5 7 3 5 V3 Z" fill="#000"/></svg>
<div style="left:2044.5px;top:897.0px;width:292px;height:19px;background:#383838;border:1px solid #262626;border-radius:3px;"></div>
<div class="t" style="top:900.2px;font-size:11.6px;line-height:11.6px;color:#d0d0d0;left:2048.5px;letter-spacing:0.8px;">Write1</div>
<div style="left:2347.5px;top:897.0px;width:114px;height:19px;background:#484848;border:1px solid #262626;border-radius:3px;"></div>
<div style="left:2369.5px;top:897.5px;width:1px;height:18px;background:#262626;"></div>
<div style="left:2392.5px;top:897.5px;width:1px;height:18px;background:#262626;"></div>
<div style="left:2415.5px;top:897.5px;width:1px;height:18px;background:#262626;"></div>
<div style="left:2438.5px;top:897.5px;width:1px;height:18px;background:#262626;"></div>
<svg style="left:2351px;top:900.5px;" width="11" height="11" viewBox="0 0 11 11"><rect x="0.75" y="0.75" width="9.5" height="9.5" fill="#d4d400" stroke="#000" stroke-width="1.5"/><path d="M1 10 L10 1" stroke="#000" stroke-width="1.3"/></svg>
<svg style="left:2374px;top:900.5px;" width="11" height="11" viewBox="0 0 11 11"><rect x="0.75" y="0.75" width="9.5" height="9.5" fill="#d8d8d8" stroke="#000" stroke-width="1.5"/><path d="M1 10 L10 1" stroke="#000" stroke-width="1.3"/></svg>
<svg style="left:2397px;top:900.5px;" width="15" height="10" viewBox="0 0 15 10"><path d="M0 9 L1 4 L4 6 Q9 1 14 8 Q9 4 5 8 L6 10 Z" fill="#0a0a0a"/></svg>
<svg style="left:2420px;top:900.5px;" width="15" height="10" viewBox="0 0 15 10"><path d="M15 9 L14 4 L11 6 Q6 1 1 8 Q6 4 10 8 L9 10 Z" fill="#5c5c5c"/></svg>
<svg style="left:2443px;top:898.5px;" width="12" height="14" viewBox="0 0 12 14"><path d="M2 10 V2 H10 V6" stroke="#111" stroke-width="2.4" fill="none"/><path d="M3 7 V13 L0 10 M3 13 L6 10" stroke="#111" stroke-width="1.8" fill="none"/></svg>
<svg style="left:2477px;top:900.5px;" width="9" height="12" viewBox="0 0 9 12"><path d="M1.2 3.6 Q1.2 0.8 4.5 0.8 Q7.8 0.8 7.8 3.6 Q7.8 5.4 5.6 6.4 Q4.6 6.9 4.6 8" stroke="#000" stroke-width="2.2" fill="none"/><rect x="3.4" y="9.6" width="2.4" height="2.4" fill="#000"/></svg>
<svg style="left:2498px;top:901.5px;" width="9" height="9" viewBox="0 0 9 9"><rect x="3" y="0.75" width="5.25" height="4.5" fill="none" stroke="#000" stroke-width="1.5"/><rect x="0.75" y="3.5" width="5.5" height="4.75" fill="#3b3b3b" stroke="#000" stroke-width="1.5"/></svg>
<svg style="left:2515px;top:901.5px;" width="9" height="8" viewBox="0 0 9 8"><path d="M0.8 0.8 L8.2 7.2 M8.2 0.8 L0.8 7.2" stroke="#000" stroke-width="1.8"/></svg>
<div style="left:1941px;top:940.5px;width:589px;height:381px;border:1px solid #262626;border-radius:0 3px 3px 3px;"></div>
<div style="left:1941px;top:921px;width:60px;height:20.5px;background:#323232;border:1px solid #222;border-bottom:none;border-radius:4px 4px 0 0;"></div>
<div class="t" style="top:927.0px;font-size:11.2px;line-height:11.2px;color:#d0d0d0;left:1956px;letter-spacing:0.8px;">Write</div>
<div style="left:2001px;top:924px;width:62px;height:17px;background:#2a2a2a;border:1px solid #222;border-bottom:none;border-radius:4px 4px 0 0;"></div>
<div class="t" style="top:927.5px;font-size:11.2px;line-height:11.2px;color:#d0d0d0;left:2016.5px;letter-spacing:0.8px;">OCIO</div>
<div style="left:2063px;top:924px;width:69px;height:17px;background:#2a2a2a;border:1px solid #222;border-bottom:none;border-radius:4px 4px 0 0;"></div>
<div class="t" style="top:927.5px;font-size:11.2px;line-height:11.2px;color:#d0d0d0;left:2078px;letter-spacing:0.8px;">Python</div>
<div style="left:2132px;top:924px;width:57.5px;height:17px;background:#2a2a2a;border:1px solid #222;border-bottom:none;border-radius:4px 4px 0 0;"></div>
<div class="t" style="top:927.5px;font-size:11.2px;line-height:11.2px;color:#d0d0d0;left:2147px;letter-spacing:0.8px;">Node</div>
<div class="t" style="top:957.0px;font-size:11.2px;line-height:11.2px;color:#c8c8c8;left:1739.8px;width:300px;text-align:right;letter-spacing:0.8px;">channels</div>
<div style="left:2045.7px;top:952.0px;width:122.29999999999995px;height:19px;background:linear-gradient(#484848,#424242);border:1px solid #282828;border-radius:3px;"></div>
<div class="t" style="top:957.5px;font-size:11.2px;line-height:11.2px;color:#d0d0d0;left:2050.7px;letter-spacing:0.8px;">rgb</div>
<svg style="left:2154px;top:959.5px;" width="8" height="5" viewBox="0 0 8 5"><path d="M0 0 H8 L4 5 Z" fill="#dcdcdc"/></svg>
<div style="left:2176px;top:955px;width:15px;height:15px;background:#d83030;border:1px solid #262626;border-radius:2px;"></div>
<svg style="left:2178px;top:957px;" width="11" height="11" viewBox="0 0 11 11"><path d="M1 1 L10 10 M10 1 L1 10" stroke="#ffffff" stroke-width="2.6"/></svg>
<div class="t" style="top:957.0px;font-size:11.2px;line-height:11.2px;color:#c8c8c8;left:2197px;letter-spacing:0.8px;">red</div>
<div style="left:2228.5px;top:955px;width:15px;height:15px;background:#30c030;border:1px solid #262626;border-radius:2px;"></div>
<svg style="left:2230.5px;top:957px;" width="11" height="11" viewBox="0 0 11 11"><path d="M1 1 L10 10 M10 1 L1 10" stroke="#ffffff" stroke-width="2.6"/></svg>
<div class="t" style="top:957.0px;font-size:11.2px;line-height:11.2px;color:#c8c8c8;left:2250px;letter-spacing:0.8px;">green</div>
<div style="left:2295.5px;top:955px;width:15px;height:15px;background:#3a3ad8;border:1px solid #262626;border-radius:2px;"></div>
<svg style="left:2297.5px;top:957px;" width="11" height="11" viewBox="0 0 11 11"><path d="M1 1 L10 10 M10 1 L1 10" stroke="#ffffff" stroke-width="2.6"/></svg>
<div class="t" style="top:957.0px;font-size:11.2px;line-height:11.2px;color:#c8c8c8;left:2317.5px;letter-spacing:0.8px;">blue</div>
<div style="left:2353.5px;top:955px;width:15px;height:15px;background:#373737;border:1px solid #262626;border-radius:2px;"></div>
<div style="left:2372px;top:952.0px;width:122px;height:19px;background:linear-gradient(#484848,#424242);border:1px solid #282828;border-radius:3px;"></div>
<div class="t" style="top:957.5px;font-size:11.2px;line-height:11.2px;color:#d0d0d0;left:2377px;letter-spacing:0.8px;">none</div>
<svg style="left:2480px;top:959.5px;" width="8" height="5" viewBox="0 0 8 5"><path d="M0 0 H8 L4 5 Z" fill="#dcdcdc"/></svg>
<div style="left:2501.5px;top:953px;width:17px;height:17px;background:#3a3a3a;border:1px solid #1e1e1e;border-radius:3px;"></div>
<div class="t" style="top:955.8px;font-size:12px;line-height:12px;color:#bbb;left:2501.5px;width:17px;text-align:center;">=</div>
<div class="t" style="top:979.0px;font-size:11.2px;line-height:11.2px;color:#c8c8c8;left:1739.8px;width:300px;text-align:right;letter-spacing:0.8px;">file</div>
<div style="left:2045.7px;top:974.0px;width:450.29999999999995px;height:19px;background:#383838;border:1px solid #262626;border-radius:3px;"></div>
<div class="t" style="top:979.8px;font-size:11.5px;line-height:11.5px;color:#d0d0d0;left:2049.7px;letter-spacing:0.55px;">als/03-TASKS/Keying-walking/pre-renders/A003_0170218_C014.#####.DPX</div>
<svg style="left:2503px;top:976px;" width="15" height="14" viewBox="0 0 15 14"><rect x="1" y="3" width="12" height="10" fill="#111"/><rect x="3" y="1" width="10" height="3" fill="#ddd"/></svg>
<div class="t" style="top:1001.0px;font-size:11.2px;line-height:11.2px;color:#c8c8c8;left:1739.8px;width:300px;text-align:right;letter-spacing:0.8px;">proxy</div>
<div style="left:2045.7px;top:996.0px;width:450.29999999999995px;height:19px;background:#383838;border:1px solid #262626;border-radius:3px;"></div>
<div class="t" style="top:1001.8px;font-size:11.5px;line-height:11.5px;color:#d0d0d0;left:2049.7px;letter-spacing:0.55px;"></div>
<div class="t" style="top:1023.0px;font-size:11.2px;line-height:11.2px;color:#c8c8c8;left:1739.8px;width:300px;text-align:right;letter-spacing:0.8px;">frame</div>
<div style="left:2045.7px;top:1018.0px;width:89.79999999999995px;height:19px;background:linear-gradient(#484848,#424242);border:1px solid #282828;border-radius:3px;"></div>
<div class="t" style="top:1023.5px;font-size:11.2px;line-height:11.2px;color:#d0d0d0;left:2050.7px;letter-spacing:0.8px;">expression</div>
<svg style="left:2121.5px;top:1025.5px;" width="8" height="5" viewBox="0 0 8 5"><path d="M0 0 H8 L4 5 Z" fill="#dcdcdc"/></svg>
<div style="left:2138.5px;top:1018.0px;width:380.0px;height:19px;background:#383838;border:1px solid #262626;border-radius:3px;"></div>
<div class="t" style="top:1023.8px;font-size:11.5px;line-height:11.5px;color:#d0d0d0;left:2142.5px;letter-spacing:0.55px;"></div>
<div class="t" style="top:1045.0px;font-size:11.2px;line-height:11.2px;color:#c8c8c8;left:1739.8px;width:300px;text-align:right;letter-spacing:0.8px;">colorspace</div>
<div style="left:2045.7px;top:1040.0px;width:120.79999999999995px;height:19px;background:linear-gradient(#484848,#424242);border:1px solid #282828;border-radius:3px;"></div>
<div class="t" style="top:1045.5px;font-size:11.2px;line-height:11.2px;color:#d0d0d0;left:2050.7px;letter-spacing:0.8px;">default (Cineon)</div>
<svg style="left:2152.5px;top:1047.5px;" width="8" height="5" viewBox="0 0 8 5"><path d="M0 0 H8 L4 5 Z" fill="#dcdcdc"/></svg>
<div style="left:2169px;top:1043px;width:15px;height:15px;background:#373737;border:1px solid #262626;border-radius:2px;"></div>
<div class="t" style="top:1045.0px;font-size:11.2px;line-height:11.2px;color:#c8c8c8;left:2190.5px;letter-spacing:0.8px;">premultiplied</div>
<div style="left:2273px;top:1043px;width:15px;height:15px;background:#373737;border:1px solid #262626;border-radius:2px;"></div>
<div class="t" style="top:1045.0px;font-size:11.2px;line-height:11.2px;color:#c8c8c8;left:2295px;letter-spacing:0.8px;">raw data</div>
<div class="t" style="top:1066.5px;font-size:11.2px;line-height:11.2px;color:#c8c8c8;left:1739.8px;width:300px;text-align:right;letter-spacing:0.8px;">views</div>
<div style="left:2045.7px;top:1061.5px;width:454.29999999999995px;height:19px;background:linear-gradient(#484848,#424242);border:1px solid #282828;border-radius:3px;"></div>
<div class="t" style="top:1067.0px;font-size:11.2px;line-height:11.2px;color:#d0d0d0;left:2172.85px;width:200px;text-align:center;letter-spacing:0.8px;">main</div>
<svg style="left:2486px;top:1069px;" width="8" height="5" viewBox="0 0 8 5"><path d="M0 0 H8 L4 5 Z" fill="#dcdcdc"/></svg>
<div style="left:2501.5px;top:1062px;width:17px;height:17px;background:#3a3a3a;border:1px solid #1e1e1e;border-radius:3px;"></div>
<div class="t" style="top:1064.8px;font-size:12px;line-height:12px;color:#bbb;left:2501.5px;width:17px;text-align:center;">=</div>
<div class="t" style="top:1088.5px;font-size:11.2px;line-height:11.2px;color:#c8c8c8;left:1739.8px;width:300px;text-align:right;letter-spacing:0.8px;">file type</div>
<div style="left:2045.7px;top:1083.5px;width:57.299999999999955px;height:19px;background:linear-gradient(#484848,#424242);border:1px solid #282828;border-radius:3px;"></div>
<div class="t" style="top:1089.0px;font-size:11.2px;line-height:11.2px;color:#d0d0d0;left:2050.7px;letter-spacing:0.8px;">dpx</div>
<svg style="left:2089px;top:1091px;" width="8" height="5" viewBox="0 0 8 5"><path d="M0 0 H8 L4 5 Z" fill="#dcdcdc"/></svg>
<div style="left:2106.5px;top:1084px;width:17px;height:19px;background:#383838;border:1px solid #1e1e1e;border-radius:3px;"></div>
<div class="t" style="top:1087.3px;font-size:12px;line-height:12px;color:#bbb;left:2106.5px;width:17px;text-align:center;">?</div>
<div class="t" style="top:1110.5px;font-size:11.2px;line-height:11.2px;color:#c8c8c8;left:1971.5px;letter-spacing:0.8px;">dpx Options</div>
<div style="left:2045px;top:1114px;width:474px;height:1px;background:#262626;"></div>
<div class="t" style="top:1132.5px;font-size:11.2px;line-height:11.2px;color:#c8c8c8;left:1739.8px;width:300px;text-align:right;letter-spacing:0.8px;">datatype</div>
<div style="left:2045.7px;top:1127.5px;width:60.299999999999955px;height:19px;background:linear-gradient(#484848,#424242);border:1px solid #282828;border-radius:3px;"></div>
<div class="t" style="top:1133.0px;font-size:11.2px;line-height:11.2px;color:#d0d0d0;left:2050.7px;letter-spacing:0.8px;">10 bit</div>
<svg style="left:2092px;top:1135px;" width="8" height="5" viewBox="0 0 8 5"><path d="M0 0 H8 L4 5 Z" fill="#dcdcdc"/></svg>
<div style="left:2109.5px;top:1130.5px;width:15px;height:15px;background:#373737;border:1px solid #262626;border-radius:2px;"></div>
<div class="t" style="top:1132.5px;font-size:11.2px;line-height:11.2px;color:#c8c8c8;left:2131px;letter-spacing:0.8px;">fill</div>
<div style="left:2152.5px;top:1130.5px;width:15px;height:15px;background:#373737;border:1px solid #262626;border-radius:2px;"></div>
<svg style="left:2154.5px;top:1132.5px;" width="11" height="11" viewBox="0 0 11 11"><path d="M1 1 L10 10 M10 1 L1 10" stroke="#e0e0e0" stroke-width="2.6"/></svg>
<div class="t" style="top:1132.5px;font-size:11.2px;line-height:11.2px;color:#c8c8c8;left:2174.5px;letter-spacing:0.8px;">big endian</div>
<div class="t" style="top:1155.0px;font-size:11.2px;line-height:11.2px;color:#c8c8c8;left:1739.8px;width:300px;text-align:right;letter-spacing:0.8px;">transfer</div>
<div style="left:2045.7px;top:1150.0px;width:166.29999999999995px;height:19px;background:linear-gradient(#484848,#424242);border:1px solid #282828;border-radius:3px;"></div>
<div class="t" style="top:1155.5px;font-size:11.2px;line-height:11.2px;color:#d0d0d0;left:2050.7px;letter-spacing:0.8px;">(auto detect)</div>
<svg style="left:2198px;top:1157.5px;" width="8" height="5" viewBox="0 0 8 5"><path d="M0 0 H8 L4 5 Z" fill="#dcdcdc"/></svg>
<div style="left:1952px;top:1178.5px;width:567px;height:1px;background:#262626;"></div>
<div style="left:2045.7px;top:1193px;width:15px;height:15px;background:#373737;border:1px solid #262626;border-radius:2px;"></div>
<svg style="left:2047.7px;top:1195px;" width="11" height="11" viewBox="0 0 11 11"><path d="M1 1 L10 10 M10 1 L1 10" stroke="#e0e0e0" stroke-width="2.6"/></svg>
<div class="t" style="top:1194.5px;font-size:11.2px;line-height:11.2px;color:#c8c8c8;left:2067px;letter-spacing:0.8px;">create directories</div>
<div class="t" style="top:1219.5px;font-size:11.2px;line-height:11.2px;color:#c8c8c8;left:1739.8px;width:300px;text-align:right;letter-spacing:0.8px;">render order</div>
<div style="left:2045.7px;top:1214.5px;width:72.29999999999995px;height:19px;background:#383838;border:1px solid #262626;border-radius:3px;"></div>
<div class="t" style="top:1220.3px;font-size:11.5px;line-height:11.5px;color:#d0d0d0;left:2049.7px;letter-spacing:0.55px;">1</div>
<div style="left:2122.5px;top:1211px;width:92px;height:27px;background:linear-gradient(#444,#383838);border:1px solid #1e1e1e;border-radius:3px;"></div>
<div class="t" style="top:1219.5px;font-size:11.2px;line-height:11.2px;color:#d0d0d0;left:2128.5px;width:80px;text-align:center;letter-spacing:0.8px;">Render</div>
<div class="t" style="top:1245.5px;font-size:11.2px;line-height:11.2px;color:#7a7a7a;left:1739.8px;width:300px;text-align:right;letter-spacing:0.8px;">frame range</div>
<div style="left:2045.7px;top:1240.5px;width:72.29999999999995px;height:19px;background:#383838;border:1px solid #262626;border-radius:3px;"></div>
<div class="t" style="top:1246.3px;font-size:11.5px;line-height:11.5px;color:#777;left:2049.7px;letter-spacing:0.55px;">1</div>
<div style="left:2122.5px;top:1240.5px;width:72.5px;height:19px;background:#383838;border:1px solid #262626;border-radius:3px;"></div>
<div class="t" style="top:1246.3px;font-size:11.5px;line-height:11.5px;color:#777;left:2126.5px;letter-spacing:0.55px;">1</div>
<div style="left:2199.5px;top:1245px;width:15px;height:15px;background:#373737;border:1px solid #262626;border-radius:2px;"></div>
<div class="t" style="top:1245.5px;font-size:11.2px;line-height:11.2px;color:#c8c8c8;left:2221px;letter-spacing:0.8px;">limit to range</div>
<div style="left:2045.7px;top:1265.5px;width:15px;height:15px;background:#373737;border:1px solid #262626;border-radius:2px;"></div>
<div class="t" style="top:1266.5px;font-size:11.2px;line-height:11.2px;color:#c8c8c8;left:2067px;letter-spacing:0.8px;">read file</div>
<div class="t" style="top:1291.5px;font-size:11.2px;line-height:11.2px;color:#7a7a7a;left:1739.8px;width:300px;text-align:right;letter-spacing:0.8px;">missing frames</div>
<div style="left:2045.7px;top:1286.5px;width:105.29999999999995px;height:19px;background:linear-gradient(#484848,#424242);border:1px solid #282828;border-radius:3px;"></div>
<div class="t" style="top:1292.0px;font-size:11.2px;line-height:11.2px;color:#7a7a7a;left:2050.7px;letter-spacing:0.8px;">error</div>
<svg style="left:2137px;top:1294px;" width="8" height="5" viewBox="0 0 8 5"><path d="M0 0 H8 L4 5 Z" fill="#777"/></svg>
<div style="left:2154.5px;top:1283px;width:92px;height:26px;background:linear-gradient(#404040,#363636);border:1px solid #1e1e1e;border-radius:3px;"></div>
<div class="t" style="top:1291.5px;font-size:11.2px;line-height:11.2px;color:#7a7a7a;left:2160.5px;width:80px;text-align:center;letter-spacing:0.8px;">Reload</div>
<div style="left:2249.5px;top:1291px;width:15px;height:15px;background:#373737;border:1px solid #262626;border-radius:2px;"></div>
<div class="t" style="top:1291.5px;font-size:11.2px;line-height:11.2px;color:#c8c8c8;left:2271px;letter-spacing:0.8px;">read all lines</div>
<svg style="left:2518px;top:1310px;" width="10" height="10" viewBox="0 0 10 10"><path d="M9 1 L1 9 M9 4 L4 9 M9 7 L7 9" stroke="#666" stroke-width="1"/></svg>
<div style="left:2534px;top:118px;width:14px;height:14px;background:#323232;border:1px solid #222;border-radius:3px;"></div>
<svg style="left:2537px;top:122px;" width="8" height="5" viewBox="0 0 8 5"><path d="M0 5 H8 L4 0 Z" fill="#ddd"/></svg>
<div style="left:2534px;top:134px;width:14px;height:1186px;background:#2e2e2e;border:1px solid #222;border-radius:3px;"></div>
<div style="left:2535px;top:812px;width:12px;height:43px;background:#4a4a4a;border-radius:2px;"></div>
<svg style="left:2537px;top:719px;" width="9" height="18" viewBox="0 0 9 18"><rect x="0" y="0" width="1" height="1" fill="#666"/><rect x="4" y="3" width="1" height="1" fill="#666"/><rect x="0" y="6" width="1" height="1" fill="#666"/><rect x="4" y="9" width="1" height="1" fill="#666"/><rect x="0" y="12" width="1" height="1" fill="#666"/><rect x="4" y="15" width="1" height="1" fill="#666"/></svg>
<div style="left:2534px;top:1324px;width:14px;height:14px;background:#323232;border:1px solid #222;border-radius:3px;"></div>
<svg style="left:2537px;top:1328px;" width="8" height="5" viewBox="0 0 8 5"><path d="M0 5 H8 L4 0 Z" fill="#ddd"/></svg>
<div style="left:2534px;top:1340px;width:14px;height:14px;background:#323232;border:1px solid #222;border-radius:3px;"></div>
<svg style="left:2537px;top:1344px;" width="8" height="5" viewBox="0 0 8 5"><path d="M0 0 H8 L4 5 Z" fill="#ddd"/></svg>
<div style="left:2278px;top:982px;width:273px;height:38px;background:#003a8c;"></div>
<div style="left:2476px;top:982px;width:75px;height:38px;background:#002a6e;"></div>
<svg style="left:2295px;top:994px;" width="15" height="15" viewBox="0 0 15 15"><circle cx="7.5" cy="7.5" r="7" fill="#e0102a"/></svg>
<div class="t" style="top:993.8px;font-size:18px;line-height:18px;color:#ffffff;left:2324px;letter-spacing:-0.2px;">00:35:30</div>
<div style="left:2412px;top:993px;width:16px;height:16px;background:#ffffff;"></div>
<svg style="left:2447px;top:991px;" width="22" height="21" viewBox="0 0 22 21"><rect x="4" y="1" width="7" height="11" rx="3.5" fill="none" stroke="#fff" stroke-width="1.6"/><path d="M2 8 Q2 14 7.5 14 Q13 14 13 8 M7.5 14 V19 M4 19 H11" stroke="#fff" stroke-width="1.6" fill="none"/><path d="M15 1 L21 7 M21 1 L15 7" stroke="#fff" stroke-width="1.5"/></svg>
<svg style="left:2485px;top:991px;" width="18" height="18" viewBox="0 0 18 18"><path d="M17 1 L2 16 M2 8 V16 H10" stroke="#fff" stroke-width="1.8" fill="none"/></svg>
<svg style="left:2523px;top:996px;" width="19" height="9" viewBox="0 0 19 9"><path d="M0 1.5 H19 M0 7.5 H19" stroke="#fff" stroke-width="2.2"/></svg>
<div style="left:9px;top:1356px;width:2542px;height:25px;background:#323232;"></div>
<div class="t" style="top:1360.8px;font-size:18px;line-height:18px;color:#c4c4c4;left:1873px;letter-spacing:0.87px;">Memory: 4.6 GB (29.2%) CPU: 1.6% Disk: 0.0 MB/s Network: 0.0 MB/s</div>
<div style="left:2502px;top:1364px;width:25px;height:11px;background:#2faa3a;border-radius:2px;"></div>
<div class="t" style="top:1366.2px;font-size:8px;line-height:8px;color:#d8f0d8;left:2499.5px;width:30px;text-align:center;">OK</div>
<svg style="left:2530px;top:1366px;" width="12" height="12" viewBox="0 0 12 12"><path d="M11 1 L1 11 M11 5 L5 11 M11 9 L9 11" stroke="#888" stroke-width="1"/></svg>
<div style="left:8px;top:1381px;width:2543px;height:1px;background:#a8a8a8;"></div>
<div style="left:0px;top:1382px;width:2551px;height:8px;background:#202020;"></div>
<div style="left:2539px;top:1382px;width:21px;height:8px;background:#e0e0e0;"></div>
<div style="left:857px;top:1382px;width:2px;height:8px;background:#c8c8c8;"></div>
<div style="left:859px;top:1382px;width:28px;height:8px;background:#333;"></div>
<svg style="left:864px;top:1383px;" width="7" height="7" viewBox="0 0 7 7"><circle cx="3.5" cy="3.5" r="3" fill="none" stroke="#777" stroke-width="1"/></svg>
<div style="left:887px;top:1382px;width:258px;height:8px;background:#000;"></div>
<div style="left:1076px;top:1382px;width:2px;height:8px;background:#a01818;"></div>
<div style="left:1145px;top:1382px;width:150px;height:8px;background:linear-gradient(90deg,#bdbdbd,#ececec 10%,#f2f2f2 85%,#d0d0d0);"></div>
<div style="left:1295px;top:1382px;width:185px;height:8px;background:#000;"></div>
<div style="left:1362px;top:1382px;width:2px;height:8px;background:#a01818;"></div>
<div style="left:1480px;top:1382px;width:200px;height:8px;background:#2a2a2a;"></div>
<div style="left:1515px;top:1383px;width:55px;height:6px;background:#3a3a3a;"></div>
<div style="left:1600px;top:1383px;width:55px;height:6px;background:#3a3a3a;"></div>
<div style="left:1680px;top:1382px;width:3px;height:8px;background:#d0d0d0;"></div>
<div style="left:0px;top:1390px;width:2560px;height:50px;background:#04060b;"></div>
<svg style="left:19px;top:1404px;" width="22" height="22" viewBox="0 0 22 22"><path d="M0 3 L9 1.7 V10.3 H0 Z M10.3 1.5 L22 0 V10.3 H10.3 Z M0 11.7 H9 V20.3 L0 19 Z M10.3 11.7 H22 V22 L10.3 20.5 Z" fill="#fff"/></svg>
<svg style="left:79px;top:1404px;" width="22" height="22" viewBox="0 0 22 22"><circle cx="13.5" cy="8.5" r="7" fill="none" stroke="#fff" stroke-width="1.6"/><path d="M8.5 13.5 L1 21" stroke="#fff" stroke-width="1.8"/></svg>
<svg style="left:137px;top:1405px;" width="26" height="20" viewBox="0 0 26 20"><rect x="4.5" y="1" width="17" height="18" fill="none" stroke="#fff" stroke-width="1.5"/><path d="M2.5 4 H0.8 V16 H2.5 M23.5 4 H25.2 V16 H23.5" stroke="#fff" stroke-width="1.2" fill="none"/></svg>
<svg style="left:200px;top:1403px;" width="28" height="24" viewBox="0 0 28 24"><path d="M0 2 H10 L12 4 H28 V23 H0 Z" fill="#f7c84a"/><rect x="0" y="6" width="28" height="17" fill="#ffe18a"/><rect x="3" y="2" width="6" height="2" fill="#fff"/><path d="M6 23 V14 H22 V23 H18 V18 H10 V23 Z" fill="#2aa7e0"/></svg>
<svg style="left:262px;top:1401px;" width="28" height="27" viewBox="0 0 28 27"><rect x="12" y="4" width="16" height="19" fill="#fff" stroke="#2b579a"/><path d="M15 8 H26 M15 11 H26 M15 14 H26 M15 17 H26 M15 20 H26" stroke="#2b579a" stroke-width="1.2"/><path d="M0 3 L16 0 V27 L0 24 Z" fill="#2b579a"/><text x="2" y="19" font-family="Liberation Sans" font-weight="bold" font-size="12" fill="#fff">W</text></svg>
<svg style="left:324px;top:1401px;" width="28" height="27" viewBox="0 0 28 27"><rect x="12" y="4" width="16" height="19" fill="#fff" stroke="#217346"/><path d="M15 8 H26 M15 11 H26 M15 14 H26 M15 17 H26 M15 20 H26 M20 5 V22" stroke="#217346" stroke-width="1.2"/><path d="M0 3 L16 0 V27 L0 24 Z" fill="#217346"/><text x="3" y="19" font-family="Liberation Sans" font-weight="bold" font-size="12" fill="#fff">X</text></svg>
<div style="left:370px;top:1390px;width:56px;height:50px;background:#2b2d33;"></div>
<div style="left:426.5px;top:1390px;width:4px;height:50px;background:#17181c;"></div>
<svg style="left:384px;top:1400px;" width="32" height="31" viewBox="0 0 32 31"><circle cx="14" cy="14" r="13" fill="#f2b61e"/><circle cx="14" cy="14" r="11" fill="#111"/><path d="M14 14 L14 3 A11 11 0 0 1 23.5 8.5 Z M14 14 L3 14 A11 11 0 0 1 8.5 4.5 Z M14 14 L19.5 23.5 A11 11 0 0 1 6 21.5 Z" fill="#f2b61e"/><circle cx="14" cy="14" r="2.5" fill="#111"/><circle cx="24" cy="24" r="6" fill="#111" stroke="#f2b61e" stroke-width="1.5"/><path d="M21.5 21.5 L26.5 26.5 M26.5 21.5 L21.5 26.5" stroke="#f2b61e" stroke-width="1.3"/></svg>
<svg style="left:447px;top:1401px;" width="29" height="29" viewBox="0 0 29 29"><circle cx="14.5" cy="14.5" r="14" fill="#db4437"/><path d="M14.5 14.5 L2.4 7.5 A14 14 0 0 0 14.5 28.5 Z" fill="#0f9d58"/><path d="M14.5 14.5 L14.5 28.5 A14 14 0 0 0 26.6 7.5 Z" fill="#ffcd40"/><circle cx="14.5" cy="14.5" r="6.5" fill="#fff"/><circle cx="14.5" cy="14.5" r="5" fill="#4285f4"/></svg>
<div style="left:189px;top:1437px;width:41px;height:3px;background:#76b9ed;"></div>
<div style="left:230px;top:1437px;width:10px;height:3px;background:#5a8fb8;"></div>
<div style="left:370px;top:1437px;width:56px;height:3px;background:#76b9ed;"></div>
<div style="left:427px;top:1437px;width:4px;height:3px;background:#5a8fb8;"></div>
<div style="left:437px;top:1437px;width:51px;height:3px;background:#76b9ed;"></div>
<svg style="left:2062px;top:1405px;" width="21" height="20" viewBox="0 0 21 20"><circle cx="14" cy="5" r="3.5" fill="none" stroke="#fff" stroke-width="1.4"/><path d="M8 15 Q9 9 14 9 Q19 9 20 15" stroke="#fff" stroke-width="1.4" fill="none"/><circle cx="7" cy="10" r="3.5" fill="none" stroke="#fff" stroke-width="1.4"/><path d="M1 20 Q2 14 7 14 Q12 14 13 20" stroke="#fff" stroke-width="1.4" fill="none"/></svg>
<svg style="left:2106px;top:1405px;" width="21" height="21" viewBox="0 0 21 21"><circle cx="10.5" cy="10.5" r="10" fill="#3aa0e0"/><circle cx="6" cy="10.5" r="2" fill="#fff"/><circle cx="14" cy="6" r="2" fill="#fff"/><circle cx="14" cy="15" r="2" fill="#fff"/><path d="M6 10.5 L14 6 M6 10.5 L14 15" stroke="#fff" stroke-width="1.3"/></svg>
<svg style="left:2138px;top:1405px;" width="18" height="19" viewBox="0 0 18 19"><path d="M0 19 L9 0 H13 L5 19 Z" fill="#1fb0a8"/><path d="M9 0 H13 L18 19 H13 Z" fill="#0a7ec2"/><path d="M4 12 H14 L15 15 H3 Z" fill="#a8c83a"/></svg>
<svg style="left:2166px;top:1407px;" width="22" height="14" viewBox="0 0 22 14"><path d="M4 14 A4 4 0 0 1 4 6 A6 6 0 0 1 15 4 A5 5 0 0 1 22 10 A4 4 0 0 1 18 14 Z" fill="#9a9a9a"/></svg>
<svg style="left:2196px;top:1404px;" width="21" height="21" viewBox="0 0 21 21"><rect x="0.5" y="0.5" width="20" height="20" fill="#fff" stroke="#3a6ad0"/><rect x="2" y="2" width="17" height="17" fill="#2a64c8"/><text x="4.5" y="16.5" font-family="Liberation Sans" font-weight="bold" font-size="15" fill="#fff">A</text></svg>
<svg style="left:2227px;top:1404px;" width="21" height="21" viewBox="0 0 21 21"><path d="M2 7 H6 L13 1 V20 L6 14 H2 Z" fill="#c8c8c8"/><path d="M15 6 Q19 10.5 15 15" stroke="#888" stroke-width="2" fill="none"/></svg>
<svg style="left:2257px;top:1404px;" width="21" height="21" viewBox="0 0 21 21"><path d="M9 0 L17 3 V10 Q17 17 9 20 Q1 17 1 10 V3 Z" fill="#fff"/><path d="M9 0 V20 M1 9 H17" stroke="#222" stroke-width="1.5"/><circle cx="15" cy="16" r="5" fill="#e02020"/><path d="M13 14 L17 18 M17 14 L13 18" stroke="#fff" stroke-width="1.3"/></svg>
<svg style="left:2287px;top:1405px;" width="20" height="20" viewBox="0 0 20 20"><rect width="20" height="20" fill="#2a3a2a"/><path d="M2 10 Q10 2 18 10 Q10 18 2 10 Z" fill="#76b900"/><circle cx="10" cy="10" r="3" fill="#2a3a2a"/></svg>
<svg style="left:2318px;top:1404px;" width="15" height="22" viewBox="0 0 15 22"><rect x="0" y="0" width="15" height="22" rx="7.5" fill="#1e7ce8"/><path d="M4 7 L11 14 L7.5 17.5 V4.5 L11 8 L4 15" stroke="#fff" stroke-width="1.4" fill="none"/></svg>
<svg style="left:2348px;top:1406px;" width="17" height="18" viewBox="0 0 17 18"><path d="M1 2 H16 V12 L10 12 L6 17 V12 H1 Z" fill="#3ac83a"/><rect x="5" y="5" width="6" height="5" fill="#1a3a1a"/></svg>
<svg style="left:2380px;top:1404px;" width="14" height="22" viewBox="0 0 14 22"><rect x="1" y="7" width="11" height="14" fill="none" stroke="#fff" stroke-width="1.3"/><rect x="3" y="1" width="7" height="6" fill="none" stroke="#fff" stroke-width="1.2"/><path d="M8 17 L11 20 L14 14" stroke="#fff" stroke-width="1" fill="none"/></svg>
<svg style="left:2409px;top:1405px;" width="20" height="20" viewBox="0 0 20 20"><path d="M1 8 A14 14 0 0 1 19 8 M4 11.5 A9.5 9.5 0 0 1 16 11.5 M7 15 A5 5 0 0 1 13 15" stroke="#fff" stroke-width="1.5" fill="none"/><circle cx="13" cy="17" r="1.8" fill="#fff"/></svg>
<svg style="left:2436px;top:1405px;" width="22" height="20" viewBox="0 0 22 20"><path d="M1 7 H5 L11 2 V18 L5 13 H1 Z" fill="none" stroke="#fff" stroke-width="1.3"/><path d="M14 6 Q17 10 14 14 M17 3.5 Q22 10 17 16.5" stroke="#fff" stroke-width="1.3" fill="none"/></svg>
<div class="t" style="top:1396.7px;font-size:14.5px;line-height:14.5px;color:#ffffff;left:2478.0px;width:60px;text-align:center;">18:15</div>
<div class="t" style="top:1419.0px;font-size:14.8px;line-height:14.8px;color:#ffffff;left:2463.5px;width:90px;text-align:center;">11/12/2018</div>
<div style="left:2553px;top:1390px;width:1px;height:50px;background:#555;"></div>
</body></html>
